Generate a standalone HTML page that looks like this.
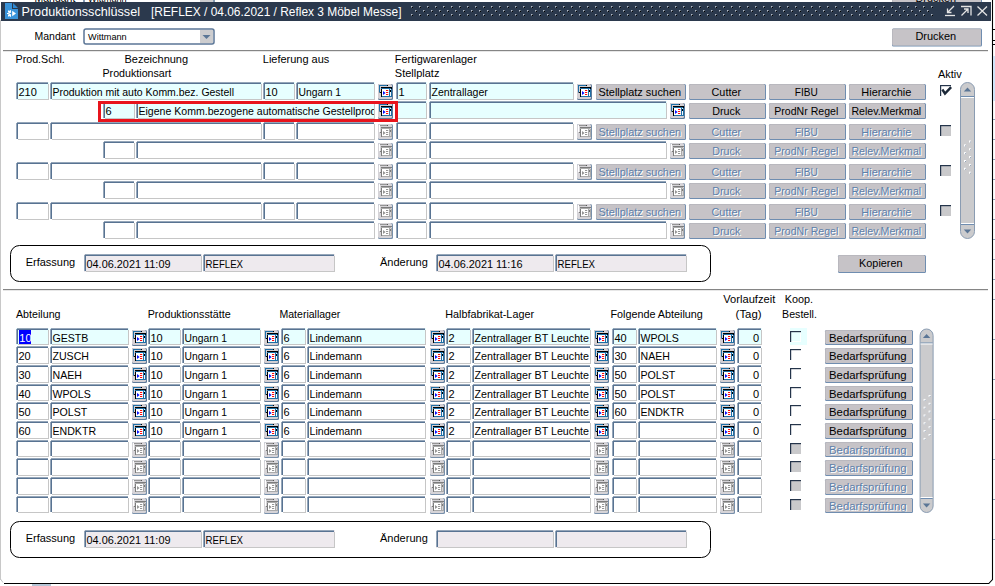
<!DOCTYPE html><html><head><meta charset="utf-8"><style>
html,body{margin:0;padding:0;background:#fff;overflow:hidden}
svg{display:block}
text{font-family:"Liberation Sans",sans-serif}
</style></head><body>
<svg width="995" height="586" viewBox="0 0 995 586">




<path d="M992.5 0 V579.5 L988.8 583.5 H4" fill="none" stroke="#000" stroke-width="1.1"/>
<path d="M0.5 20 V579 L3 582.5" fill="none" stroke="#c4c4c8" stroke-width="1"/>
<rect x="0" y="20" width="1" height="560" fill="#c8c8c8" />
<rect x="993" y="56" width="2" height="45" fill="#cfe4f8" />
<rect x="992" y="29" width="3" height="1" fill="#000" />
<rect x="992" y="40" width="3" height="1" fill="#000" />
<rect x="993" y="44" width="2" height="1" fill="#000" />
<rect x="993" y="119" width="2" height="1" fill="#8aa0b8" />
<rect x="993" y="139" width="2" height="1" fill="#8aa0b8" />
<rect x="993" y="159" width="2" height="1" fill="#8aa0b8" />
<rect x="993" y="179" width="2" height="1" fill="#8aa0b8" />
<rect x="993" y="199" width="2" height="1" fill="#8aa0b8" />
<rect x="993" y="219" width="2" height="1" fill="#8aa0b8" />
<rect x="993" y="239" width="2" height="1" fill="#8aa0b8" />
<rect x="993" y="259" width="2" height="1" fill="#8aa0b8" />
<rect x="993" y="279" width="2" height="1" fill="#8aa0b8" />
<rect x="993" y="299" width="2" height="1" fill="#8aa0b8" />
<rect x="993" y="339" width="2" height="1" fill="#8aa0b8" />
<rect x="993" y="379" width="2" height="1" fill="#8aa0b8" />
<rect x="993" y="419" width="2" height="1" fill="#8aa0b8" />
<rect x="993" y="459" width="2" height="1" fill="#8aa0b8" />
<rect x="993" y="499" width="2" height="1" fill="#8aa0b8" />
<rect x="993" y="539" width="2" height="1" fill="#8aa0b8" />
<rect x="32" y="584.5" width="19" height="1" fill="#6f8db0" />
<text x="34.5" y="2" font-size="11" fill="#000" text-anchor="start" textLength="40.8" lengthAdjust="spacingAndGlyphs" >Mandant</text>
<rect x="84" y="-9" width="130" height="15" rx="2" fill="#fff" stroke="#5b7696" stroke-width="1.5"/>
<rect x="200" y="-8" width="13" height="13" fill="#cdcdcf" />
<text x="88" y="1.5" font-size="9.5" fill="#000" text-anchor="start" textLength="38.7" lengthAdjust="spacingAndGlyphs" >Wittmann</text>
<rect x="892" y="-9.5" width="90" height="18.0" fill="#6f8db0" rx="1.5"/>
<rect x="892" y="-9.5" width="89" height="17.0" fill="#b9b8be" rx="1.5"/>
<rect x="893" y="-8.5" width="88" height="16.0" fill="#c6c3c7" />
<svg x="893" y="-8.5" width="88" height="15.5" overflow="hidden">
<text x="42.8" y="10.6" font-size="11" fill="#000" text-anchor="middle" textLength="40.8" lengthAdjust="spacingAndGlyphs" >Drucken</text>
</svg>
<rect x="1" y="2" width="990" height="19" fill="#2b394d" />
<path fill="#b4bcc8" d="M411 6h1v1h-1zM419 6h1v1h-1zM427 6h1v1h-1zM435 6h1v1h-1zM443 6h1v1h-1zM451 6h1v1h-1zM459 6h1v1h-1zM467 6h1v1h-1zM475 6h1v1h-1zM483 6h1v1h-1zM491 6h1v1h-1zM499 6h1v1h-1zM507 6h1v1h-1zM515 6h1v1h-1zM523 6h1v1h-1zM531 6h1v1h-1zM539 6h1v1h-1zM547 6h1v1h-1zM555 6h1v1h-1zM563 6h1v1h-1zM571 6h1v1h-1zM579 6h1v1h-1zM587 6h1v1h-1zM595 6h1v1h-1zM603 6h1v1h-1zM611 6h1v1h-1zM619 6h1v1h-1zM627 6h1v1h-1zM635 6h1v1h-1zM643 6h1v1h-1zM651 6h1v1h-1zM659 6h1v1h-1zM667 6h1v1h-1zM675 6h1v1h-1zM683 6h1v1h-1zM691 6h1v1h-1zM699 6h1v1h-1zM707 6h1v1h-1zM715 6h1v1h-1zM723 6h1v1h-1zM731 6h1v1h-1zM739 6h1v1h-1zM747 6h1v1h-1zM755 6h1v1h-1zM763 6h1v1h-1zM771 6h1v1h-1zM779 6h1v1h-1zM787 6h1v1h-1zM795 6h1v1h-1zM803 6h1v1h-1zM811 6h1v1h-1zM819 6h1v1h-1zM827 6h1v1h-1zM835 6h1v1h-1zM843 6h1v1h-1zM851 6h1v1h-1zM859 6h1v1h-1zM867 6h1v1h-1zM875 6h1v1h-1zM883 6h1v1h-1zM891 6h1v1h-1zM899 6h1v1h-1zM907 6h1v1h-1zM915 6h1v1h-1zM923 6h1v1h-1zM931 6h1v1h-1zM415 10h1v1h-1zM423 10h1v1h-1zM431 10h1v1h-1zM439 10h1v1h-1zM447 10h1v1h-1zM455 10h1v1h-1zM463 10h1v1h-1zM471 10h1v1h-1zM479 10h1v1h-1zM487 10h1v1h-1zM495 10h1v1h-1zM503 10h1v1h-1zM511 10h1v1h-1zM519 10h1v1h-1zM527 10h1v1h-1zM535 10h1v1h-1zM543 10h1v1h-1zM551 10h1v1h-1zM559 10h1v1h-1zM567 10h1v1h-1zM575 10h1v1h-1zM583 10h1v1h-1zM591 10h1v1h-1zM599 10h1v1h-1zM607 10h1v1h-1zM615 10h1v1h-1zM623 10h1v1h-1zM631 10h1v1h-1zM639 10h1v1h-1zM647 10h1v1h-1zM655 10h1v1h-1zM663 10h1v1h-1zM671 10h1v1h-1zM679 10h1v1h-1zM687 10h1v1h-1zM695 10h1v1h-1zM703 10h1v1h-1zM711 10h1v1h-1zM719 10h1v1h-1zM727 10h1v1h-1zM735 10h1v1h-1zM743 10h1v1h-1zM751 10h1v1h-1zM759 10h1v1h-1zM767 10h1v1h-1zM775 10h1v1h-1zM783 10h1v1h-1zM791 10h1v1h-1zM799 10h1v1h-1zM807 10h1v1h-1zM815 10h1v1h-1zM823 10h1v1h-1zM831 10h1v1h-1zM839 10h1v1h-1zM847 10h1v1h-1zM855 10h1v1h-1zM863 10h1v1h-1zM871 10h1v1h-1zM879 10h1v1h-1zM887 10h1v1h-1zM895 10h1v1h-1zM903 10h1v1h-1zM911 10h1v1h-1zM919 10h1v1h-1zM927 10h1v1h-1zM411 14h1v1h-1zM419 14h1v1h-1zM427 14h1v1h-1zM435 14h1v1h-1zM443 14h1v1h-1zM451 14h1v1h-1zM459 14h1v1h-1zM467 14h1v1h-1zM475 14h1v1h-1zM483 14h1v1h-1zM491 14h1v1h-1zM499 14h1v1h-1zM507 14h1v1h-1zM515 14h1v1h-1zM523 14h1v1h-1zM531 14h1v1h-1zM539 14h1v1h-1zM547 14h1v1h-1zM555 14h1v1h-1zM563 14h1v1h-1zM571 14h1v1h-1zM579 14h1v1h-1zM587 14h1v1h-1zM595 14h1v1h-1zM603 14h1v1h-1zM611 14h1v1h-1zM619 14h1v1h-1zM627 14h1v1h-1zM635 14h1v1h-1zM643 14h1v1h-1zM651 14h1v1h-1zM659 14h1v1h-1zM667 14h1v1h-1zM675 14h1v1h-1zM683 14h1v1h-1zM691 14h1v1h-1zM699 14h1v1h-1zM707 14h1v1h-1zM715 14h1v1h-1zM723 14h1v1h-1zM731 14h1v1h-1zM739 14h1v1h-1zM747 14h1v1h-1zM755 14h1v1h-1zM763 14h1v1h-1zM771 14h1v1h-1zM779 14h1v1h-1zM787 14h1v1h-1zM795 14h1v1h-1zM803 14h1v1h-1zM811 14h1v1h-1zM819 14h1v1h-1zM827 14h1v1h-1zM835 14h1v1h-1zM843 14h1v1h-1zM851 14h1v1h-1zM859 14h1v1h-1zM867 14h1v1h-1zM875 14h1v1h-1zM883 14h1v1h-1zM891 14h1v1h-1zM899 14h1v1h-1zM907 14h1v1h-1zM915 14h1v1h-1zM923 14h1v1h-1zM931 14h1v1h-1z"/>
<path fill="#6a7480" d="M412 6h1v1h-1zM411 7h1v1h-1zM420 6h1v1h-1zM419 7h1v1h-1zM428 6h1v1h-1zM427 7h1v1h-1zM436 6h1v1h-1zM435 7h1v1h-1zM444 6h1v1h-1zM443 7h1v1h-1zM452 6h1v1h-1zM451 7h1v1h-1zM460 6h1v1h-1zM459 7h1v1h-1zM468 6h1v1h-1zM467 7h1v1h-1zM476 6h1v1h-1zM475 7h1v1h-1zM484 6h1v1h-1zM483 7h1v1h-1zM492 6h1v1h-1zM491 7h1v1h-1zM500 6h1v1h-1zM499 7h1v1h-1zM508 6h1v1h-1zM507 7h1v1h-1zM516 6h1v1h-1zM515 7h1v1h-1zM524 6h1v1h-1zM523 7h1v1h-1zM532 6h1v1h-1zM531 7h1v1h-1zM540 6h1v1h-1zM539 7h1v1h-1zM548 6h1v1h-1zM547 7h1v1h-1zM556 6h1v1h-1zM555 7h1v1h-1zM564 6h1v1h-1zM563 7h1v1h-1zM572 6h1v1h-1zM571 7h1v1h-1zM580 6h1v1h-1zM579 7h1v1h-1zM588 6h1v1h-1zM587 7h1v1h-1zM596 6h1v1h-1zM595 7h1v1h-1zM604 6h1v1h-1zM603 7h1v1h-1zM612 6h1v1h-1zM611 7h1v1h-1zM620 6h1v1h-1zM619 7h1v1h-1zM628 6h1v1h-1zM627 7h1v1h-1zM636 6h1v1h-1zM635 7h1v1h-1zM644 6h1v1h-1zM643 7h1v1h-1zM652 6h1v1h-1zM651 7h1v1h-1zM660 6h1v1h-1zM659 7h1v1h-1zM668 6h1v1h-1zM667 7h1v1h-1zM676 6h1v1h-1zM675 7h1v1h-1zM684 6h1v1h-1zM683 7h1v1h-1zM692 6h1v1h-1zM691 7h1v1h-1zM700 6h1v1h-1zM699 7h1v1h-1zM708 6h1v1h-1zM707 7h1v1h-1zM716 6h1v1h-1zM715 7h1v1h-1zM724 6h1v1h-1zM723 7h1v1h-1zM732 6h1v1h-1zM731 7h1v1h-1zM740 6h1v1h-1zM739 7h1v1h-1zM748 6h1v1h-1zM747 7h1v1h-1zM756 6h1v1h-1zM755 7h1v1h-1zM764 6h1v1h-1zM763 7h1v1h-1zM772 6h1v1h-1zM771 7h1v1h-1zM780 6h1v1h-1zM779 7h1v1h-1zM788 6h1v1h-1zM787 7h1v1h-1zM796 6h1v1h-1zM795 7h1v1h-1zM804 6h1v1h-1zM803 7h1v1h-1zM812 6h1v1h-1zM811 7h1v1h-1zM820 6h1v1h-1zM819 7h1v1h-1zM828 6h1v1h-1zM827 7h1v1h-1zM836 6h1v1h-1zM835 7h1v1h-1zM844 6h1v1h-1zM843 7h1v1h-1zM852 6h1v1h-1zM851 7h1v1h-1zM860 6h1v1h-1zM859 7h1v1h-1zM868 6h1v1h-1zM867 7h1v1h-1zM876 6h1v1h-1zM875 7h1v1h-1zM884 6h1v1h-1zM883 7h1v1h-1zM892 6h1v1h-1zM891 7h1v1h-1zM900 6h1v1h-1zM899 7h1v1h-1zM908 6h1v1h-1zM907 7h1v1h-1zM916 6h1v1h-1zM915 7h1v1h-1zM924 6h1v1h-1zM923 7h1v1h-1zM932 6h1v1h-1zM931 7h1v1h-1zM416 10h1v1h-1zM415 11h1v1h-1zM424 10h1v1h-1zM423 11h1v1h-1zM432 10h1v1h-1zM431 11h1v1h-1zM440 10h1v1h-1zM439 11h1v1h-1zM448 10h1v1h-1zM447 11h1v1h-1zM456 10h1v1h-1zM455 11h1v1h-1zM464 10h1v1h-1zM463 11h1v1h-1zM472 10h1v1h-1zM471 11h1v1h-1zM480 10h1v1h-1zM479 11h1v1h-1zM488 10h1v1h-1zM487 11h1v1h-1zM496 10h1v1h-1zM495 11h1v1h-1zM504 10h1v1h-1zM503 11h1v1h-1zM512 10h1v1h-1zM511 11h1v1h-1zM520 10h1v1h-1zM519 11h1v1h-1zM528 10h1v1h-1zM527 11h1v1h-1zM536 10h1v1h-1zM535 11h1v1h-1zM544 10h1v1h-1zM543 11h1v1h-1zM552 10h1v1h-1zM551 11h1v1h-1zM560 10h1v1h-1zM559 11h1v1h-1zM568 10h1v1h-1zM567 11h1v1h-1zM576 10h1v1h-1zM575 11h1v1h-1zM584 10h1v1h-1zM583 11h1v1h-1zM592 10h1v1h-1zM591 11h1v1h-1zM600 10h1v1h-1zM599 11h1v1h-1zM608 10h1v1h-1zM607 11h1v1h-1zM616 10h1v1h-1zM615 11h1v1h-1zM624 10h1v1h-1zM623 11h1v1h-1zM632 10h1v1h-1zM631 11h1v1h-1zM640 10h1v1h-1zM639 11h1v1h-1zM648 10h1v1h-1zM647 11h1v1h-1zM656 10h1v1h-1zM655 11h1v1h-1zM664 10h1v1h-1zM663 11h1v1h-1zM672 10h1v1h-1zM671 11h1v1h-1zM680 10h1v1h-1zM679 11h1v1h-1zM688 10h1v1h-1zM687 11h1v1h-1zM696 10h1v1h-1zM695 11h1v1h-1zM704 10h1v1h-1zM703 11h1v1h-1zM712 10h1v1h-1zM711 11h1v1h-1zM720 10h1v1h-1zM719 11h1v1h-1zM728 10h1v1h-1zM727 11h1v1h-1zM736 10h1v1h-1zM735 11h1v1h-1zM744 10h1v1h-1zM743 11h1v1h-1zM752 10h1v1h-1zM751 11h1v1h-1zM760 10h1v1h-1zM759 11h1v1h-1zM768 10h1v1h-1zM767 11h1v1h-1zM776 10h1v1h-1zM775 11h1v1h-1zM784 10h1v1h-1zM783 11h1v1h-1zM792 10h1v1h-1zM791 11h1v1h-1zM800 10h1v1h-1zM799 11h1v1h-1zM808 10h1v1h-1zM807 11h1v1h-1zM816 10h1v1h-1zM815 11h1v1h-1zM824 10h1v1h-1zM823 11h1v1h-1zM832 10h1v1h-1zM831 11h1v1h-1zM840 10h1v1h-1zM839 11h1v1h-1zM848 10h1v1h-1zM847 11h1v1h-1zM856 10h1v1h-1zM855 11h1v1h-1zM864 10h1v1h-1zM863 11h1v1h-1zM872 10h1v1h-1zM871 11h1v1h-1zM880 10h1v1h-1zM879 11h1v1h-1zM888 10h1v1h-1zM887 11h1v1h-1zM896 10h1v1h-1zM895 11h1v1h-1zM904 10h1v1h-1zM903 11h1v1h-1zM912 10h1v1h-1zM911 11h1v1h-1zM920 10h1v1h-1zM919 11h1v1h-1zM928 10h1v1h-1zM927 11h1v1h-1zM412 14h1v1h-1zM411 15h1v1h-1zM420 14h1v1h-1zM419 15h1v1h-1zM428 14h1v1h-1zM427 15h1v1h-1zM436 14h1v1h-1zM435 15h1v1h-1zM444 14h1v1h-1zM443 15h1v1h-1zM452 14h1v1h-1zM451 15h1v1h-1zM460 14h1v1h-1zM459 15h1v1h-1zM468 14h1v1h-1zM467 15h1v1h-1zM476 14h1v1h-1zM475 15h1v1h-1zM484 14h1v1h-1zM483 15h1v1h-1zM492 14h1v1h-1zM491 15h1v1h-1zM500 14h1v1h-1zM499 15h1v1h-1zM508 14h1v1h-1zM507 15h1v1h-1zM516 14h1v1h-1zM515 15h1v1h-1zM524 14h1v1h-1zM523 15h1v1h-1zM532 14h1v1h-1zM531 15h1v1h-1zM540 14h1v1h-1zM539 15h1v1h-1zM548 14h1v1h-1zM547 15h1v1h-1zM556 14h1v1h-1zM555 15h1v1h-1zM564 14h1v1h-1zM563 15h1v1h-1zM572 14h1v1h-1zM571 15h1v1h-1zM580 14h1v1h-1zM579 15h1v1h-1zM588 14h1v1h-1zM587 15h1v1h-1zM596 14h1v1h-1zM595 15h1v1h-1zM604 14h1v1h-1zM603 15h1v1h-1zM612 14h1v1h-1zM611 15h1v1h-1zM620 14h1v1h-1zM619 15h1v1h-1zM628 14h1v1h-1zM627 15h1v1h-1zM636 14h1v1h-1zM635 15h1v1h-1zM644 14h1v1h-1zM643 15h1v1h-1zM652 14h1v1h-1zM651 15h1v1h-1zM660 14h1v1h-1zM659 15h1v1h-1zM668 14h1v1h-1zM667 15h1v1h-1zM676 14h1v1h-1zM675 15h1v1h-1zM684 14h1v1h-1zM683 15h1v1h-1zM692 14h1v1h-1zM691 15h1v1h-1zM700 14h1v1h-1zM699 15h1v1h-1zM708 14h1v1h-1zM707 15h1v1h-1zM716 14h1v1h-1zM715 15h1v1h-1zM724 14h1v1h-1zM723 15h1v1h-1zM732 14h1v1h-1zM731 15h1v1h-1zM740 14h1v1h-1zM739 15h1v1h-1zM748 14h1v1h-1zM747 15h1v1h-1zM756 14h1v1h-1zM755 15h1v1h-1zM764 14h1v1h-1zM763 15h1v1h-1zM772 14h1v1h-1zM771 15h1v1h-1zM780 14h1v1h-1zM779 15h1v1h-1zM788 14h1v1h-1zM787 15h1v1h-1zM796 14h1v1h-1zM795 15h1v1h-1zM804 14h1v1h-1zM803 15h1v1h-1zM812 14h1v1h-1zM811 15h1v1h-1zM820 14h1v1h-1zM819 15h1v1h-1zM828 14h1v1h-1zM827 15h1v1h-1zM836 14h1v1h-1zM835 15h1v1h-1zM844 14h1v1h-1zM843 15h1v1h-1zM852 14h1v1h-1zM851 15h1v1h-1zM860 14h1v1h-1zM859 15h1v1h-1zM868 14h1v1h-1zM867 15h1v1h-1zM876 14h1v1h-1zM875 15h1v1h-1zM884 14h1v1h-1zM883 15h1v1h-1zM892 14h1v1h-1zM891 15h1v1h-1zM900 14h1v1h-1zM899 15h1v1h-1zM908 14h1v1h-1zM907 15h1v1h-1zM916 14h1v1h-1zM915 15h1v1h-1zM924 14h1v1h-1zM923 15h1v1h-1zM932 14h1v1h-1zM931 15h1v1h-1z"/>
<path fill="#000" d="M412 7h1v1h-1zM420 7h1v1h-1zM428 7h1v1h-1zM436 7h1v1h-1zM444 7h1v1h-1zM452 7h1v1h-1zM460 7h1v1h-1zM468 7h1v1h-1zM476 7h1v1h-1zM484 7h1v1h-1zM492 7h1v1h-1zM500 7h1v1h-1zM508 7h1v1h-1zM516 7h1v1h-1zM524 7h1v1h-1zM532 7h1v1h-1zM540 7h1v1h-1zM548 7h1v1h-1zM556 7h1v1h-1zM564 7h1v1h-1zM572 7h1v1h-1zM580 7h1v1h-1zM588 7h1v1h-1zM596 7h1v1h-1zM604 7h1v1h-1zM612 7h1v1h-1zM620 7h1v1h-1zM628 7h1v1h-1zM636 7h1v1h-1zM644 7h1v1h-1zM652 7h1v1h-1zM660 7h1v1h-1zM668 7h1v1h-1zM676 7h1v1h-1zM684 7h1v1h-1zM692 7h1v1h-1zM700 7h1v1h-1zM708 7h1v1h-1zM716 7h1v1h-1zM724 7h1v1h-1zM732 7h1v1h-1zM740 7h1v1h-1zM748 7h1v1h-1zM756 7h1v1h-1zM764 7h1v1h-1zM772 7h1v1h-1zM780 7h1v1h-1zM788 7h1v1h-1zM796 7h1v1h-1zM804 7h1v1h-1zM812 7h1v1h-1zM820 7h1v1h-1zM828 7h1v1h-1zM836 7h1v1h-1zM844 7h1v1h-1zM852 7h1v1h-1zM860 7h1v1h-1zM868 7h1v1h-1zM876 7h1v1h-1zM884 7h1v1h-1zM892 7h1v1h-1zM900 7h1v1h-1zM908 7h1v1h-1zM916 7h1v1h-1zM924 7h1v1h-1zM932 7h1v1h-1zM416 11h1v1h-1zM424 11h1v1h-1zM432 11h1v1h-1zM440 11h1v1h-1zM448 11h1v1h-1zM456 11h1v1h-1zM464 11h1v1h-1zM472 11h1v1h-1zM480 11h1v1h-1zM488 11h1v1h-1zM496 11h1v1h-1zM504 11h1v1h-1zM512 11h1v1h-1zM520 11h1v1h-1zM528 11h1v1h-1zM536 11h1v1h-1zM544 11h1v1h-1zM552 11h1v1h-1zM560 11h1v1h-1zM568 11h1v1h-1zM576 11h1v1h-1zM584 11h1v1h-1zM592 11h1v1h-1zM600 11h1v1h-1zM608 11h1v1h-1zM616 11h1v1h-1zM624 11h1v1h-1zM632 11h1v1h-1zM640 11h1v1h-1zM648 11h1v1h-1zM656 11h1v1h-1zM664 11h1v1h-1zM672 11h1v1h-1zM680 11h1v1h-1zM688 11h1v1h-1zM696 11h1v1h-1zM704 11h1v1h-1zM712 11h1v1h-1zM720 11h1v1h-1zM728 11h1v1h-1zM736 11h1v1h-1zM744 11h1v1h-1zM752 11h1v1h-1zM760 11h1v1h-1zM768 11h1v1h-1zM776 11h1v1h-1zM784 11h1v1h-1zM792 11h1v1h-1zM800 11h1v1h-1zM808 11h1v1h-1zM816 11h1v1h-1zM824 11h1v1h-1zM832 11h1v1h-1zM840 11h1v1h-1zM848 11h1v1h-1zM856 11h1v1h-1zM864 11h1v1h-1zM872 11h1v1h-1zM880 11h1v1h-1zM888 11h1v1h-1zM896 11h1v1h-1zM904 11h1v1h-1zM912 11h1v1h-1zM920 11h1v1h-1zM928 11h1v1h-1zM412 15h1v1h-1zM420 15h1v1h-1zM428 15h1v1h-1zM436 15h1v1h-1zM444 15h1v1h-1zM452 15h1v1h-1zM460 15h1v1h-1zM468 15h1v1h-1zM476 15h1v1h-1zM484 15h1v1h-1zM492 15h1v1h-1zM500 15h1v1h-1zM508 15h1v1h-1zM516 15h1v1h-1zM524 15h1v1h-1zM532 15h1v1h-1zM540 15h1v1h-1zM548 15h1v1h-1zM556 15h1v1h-1zM564 15h1v1h-1zM572 15h1v1h-1zM580 15h1v1h-1zM588 15h1v1h-1zM596 15h1v1h-1zM604 15h1v1h-1zM612 15h1v1h-1zM620 15h1v1h-1zM628 15h1v1h-1zM636 15h1v1h-1zM644 15h1v1h-1zM652 15h1v1h-1zM660 15h1v1h-1zM668 15h1v1h-1zM676 15h1v1h-1zM684 15h1v1h-1zM692 15h1v1h-1zM700 15h1v1h-1zM708 15h1v1h-1zM716 15h1v1h-1zM724 15h1v1h-1zM732 15h1v1h-1zM740 15h1v1h-1zM748 15h1v1h-1zM756 15h1v1h-1zM764 15h1v1h-1zM772 15h1v1h-1zM780 15h1v1h-1zM788 15h1v1h-1zM796 15h1v1h-1zM804 15h1v1h-1zM812 15h1v1h-1zM820 15h1v1h-1zM828 15h1v1h-1zM836 15h1v1h-1zM844 15h1v1h-1zM852 15h1v1h-1zM860 15h1v1h-1zM868 15h1v1h-1zM876 15h1v1h-1zM884 15h1v1h-1zM892 15h1v1h-1zM900 15h1v1h-1zM908 15h1v1h-1zM916 15h1v1h-1zM924 15h1v1h-1zM932 15h1v1h-1z"/>
<path d="M5 3 L12 3 L12 9 L18 9 L18 19 L5 19 Z" fill="#3a94da"/><path d="M13 3 L18 8 L13 8 Z" fill="#2f8ad2"/>
<g fill="#fff"><path d="M11 10 A3.6 3.6 0 0 0 11 17 Z"/><rect x="7" y="13" width="1.5" height="1" /><rect x="8" y="10.5" width="1" height="1.5"/><rect x="8" y="15" width="1" height="1.5"/><path d="M12.2 10.8 L16 13.5 L12.2 16.2 Z"/></g><circle cx="10.3" cy="13.5" r="0.8" fill="#3a94da"/>
<text x="21.5" y="16" font-size="12.5" fill="#ffffff" text-anchor="start" textLength="118.5" lengthAdjust="spacingAndGlyphs" >Produktionsschlüssel</text>
<text x="151" y="16" font-size="12.2" fill="#ffffff" text-anchor="start" textLength="250.5" lengthAdjust="spacingAndGlyphs" >[REFLEX / 04.06.2021 / Reflex 3 Möbel Messe]</text>
<g stroke="#e4e4e4" stroke-width="1.3" fill="none"><path d="M945 15.5 H955"/><path d="M954 6 L947.5 12.5 M947.5 8.5 V12.5 H951.5"/><path d="M961 6.5 H971 V15.5"/><path d="M961.5 15.5 L968 9 M964 9 H968 V13"/><path d="M977.5 6.5 L987 15.5 M987 6.5 L977.5 15.5"/></g>
<text x="34.5" y="40" font-size="11" fill="#000" text-anchor="start" textLength="40.8" lengthAdjust="spacingAndGlyphs" >Mandant</text>
<rect x="84" y="29" width="130" height="15" rx="2" fill="#fff" stroke="#5b7696" stroke-width="1.5"/>
<rect x="200" y="30" width="13" height="13" fill="#cdcdcf" />
<path d="M202.5 35 L210.5 35 L206.5 39 Z" fill="#5b7696"/>
<text x="88" y="39.5" font-size="9.5" fill="#000" text-anchor="start" textLength="38.7" lengthAdjust="spacingAndGlyphs" >Wittmann</text>
<rect x="892" y="28.5" width="90" height="18.0" fill="#6f8db0" rx="1.5"/>
<rect x="892" y="28.5" width="89" height="17.0" fill="#b9b8be" rx="1.5"/>
<rect x="893" y="29.5" width="88" height="16.0" fill="#c6c3c7" />
<svg x="893" y="29.5" width="88" height="15.5" overflow="hidden">
<text x="42.8" y="10.6" font-size="11" fill="#000" text-anchor="middle" textLength="40.8" lengthAdjust="spacingAndGlyphs" >Drucken</text>
</svg>
<rect x="3" y="50" width="985" height="1.2" fill="#858585" />
<rect x="3" y="289" width="985" height="1.2" fill="#858585" />
<text x="15.5" y="63" font-size="11" fill="#000" text-anchor="start" textLength="49.3" lengthAdjust="spacingAndGlyphs" >Prod.Schl.</text>
<text x="124.5" y="63" font-size="11" fill="#000" text-anchor="start" >Bezeichnung</text>
<text x="102.5" y="77" font-size="11" fill="#000" text-anchor="start" textLength="68.8" lengthAdjust="spacingAndGlyphs" >Produktionsart</text>
<text x="262.8" y="63" font-size="11" fill="#000" text-anchor="start" textLength="66.5" lengthAdjust="spacingAndGlyphs" >Lieferung aus</text>
<text x="394.8" y="63" font-size="11" fill="#000" text-anchor="start" textLength="82" lengthAdjust="spacingAndGlyphs" >Fertigwarenlager</text>
<text x="394.8" y="77" font-size="11" fill="#000" text-anchor="start" >Stellplatz</text>
<text x="938" y="78" font-size="11" fill="#000" text-anchor="start" textLength="23.8" lengthAdjust="spacingAndGlyphs" >Aktiv</text>
<rect x="16" y="82" width="33" height="18" fill="#e7ffff" />
<rect x="18" y="99" width="31" height="1" fill="#c6c6c6" />
<rect x="48" y="84" width="1" height="16" fill="#c6c6c6" />
<rect x="17" y="82" width="31" height="1" fill="#95a6b9" />
<rect x="17" y="83" width="31" height="1" fill="#587392" />
<rect x="16" y="83" width="1" height="16" fill="#95a6b9" />
<rect x="17" y="83" width="1" height="16" fill="#587392" />
<svg x="18" y="82" width="30" height="18" overflow="hidden">
<text x="0.5" y="14" font-size="11" fill="#000" text-anchor="start" >210</text>
</svg>
<rect x="50" y="82" width="212" height="18" fill="#e7ffff" />
<rect x="52" y="99" width="210" height="1" fill="#c6c6c6" />
<rect x="261" y="84" width="1" height="16" fill="#c6c6c6" />
<rect x="51" y="82" width="210" height="1" fill="#95a6b9" />
<rect x="51" y="83" width="210" height="1" fill="#587392" />
<rect x="50" y="83" width="1" height="16" fill="#95a6b9" />
<rect x="51" y="83" width="1" height="16" fill="#587392" />
<svg x="52" y="82" width="209" height="18" overflow="hidden">
<text x="0.5" y="14" font-size="10.6" fill="#000" text-anchor="start" textLength="181.5" lengthAdjust="spacingAndGlyphs" >Produktion mit auto Komm.bez. Gestell</text>
</svg>
<rect x="263" y="82" width="32" height="18" fill="#e7ffff" />
<rect x="265" y="99" width="30" height="1" fill="#c6c6c6" />
<rect x="294" y="84" width="1" height="16" fill="#c6c6c6" />
<rect x="264" y="82" width="30" height="1" fill="#95a6b9" />
<rect x="264" y="83" width="30" height="1" fill="#587392" />
<rect x="263" y="83" width="1" height="16" fill="#95a6b9" />
<rect x="264" y="83" width="1" height="16" fill="#587392" />
<svg x="265" y="82" width="29" height="18" overflow="hidden">
<text x="0.5" y="14" font-size="11" fill="#000" text-anchor="start" >10</text>
</svg>
<rect x="296" y="82" width="79" height="18" fill="#e7ffff" />
<rect x="298" y="99" width="77" height="1" fill="#c6c6c6" />
<rect x="374" y="84" width="1" height="16" fill="#c6c6c6" />
<rect x="297" y="82" width="77" height="1" fill="#95a6b9" />
<rect x="297" y="83" width="77" height="1" fill="#587392" />
<rect x="296" y="83" width="1" height="16" fill="#95a6b9" />
<rect x="297" y="83" width="1" height="16" fill="#587392" />
<svg x="298" y="82" width="76" height="18" overflow="hidden">
<text x="0.5" y="14" font-size="10.6" fill="#000" text-anchor="start" textLength="42.5" lengthAdjust="spacingAndGlyphs" >Ungarn 1</text>
</svg>
<g transform="translate(378,84)">
 <rect x="0" y="0" width="15" height="16" rx="1.5" fill="#5f7a99"/>
 <rect x="0" y="0" width="14" height="15" rx="1.5" fill="#d3cfd3"/>
 <rect x="1" y="1" width="8" height="1" fill="#1e6fa6"/>
 <rect x="9" y="1" width="1" height="1" fill="#000"/>
 <rect x="1" y="1" width="1" height="7.5" fill="#1e6fa6"/>
 <rect x="1.8" y="8" width="1.5" height="1" fill="#000"/>
 <rect x="3" y="3" width="11" height="1" fill="#000"/>
 <rect x="13" y="3" width="1" height="2" fill="#000"/>
 <rect x="3" y="4" width="10" height="1" fill="#1e6fa6"/>
 <rect x="3" y="5" width="1" height="8" fill="#000"/>
 <rect x="4" y="5" width="7" height="7" fill="#fff"/>
 <rect x="11" y="5" width="1" height="8" fill="#1e6fa6"/>
 <rect x="12" y="5" width="1" height="7" fill="#f4f8fc"/>
 <rect x="12" y="6" width="1" height="2" fill="#000"/>
 <rect x="13" y="5" width="1" height="8" fill="#1e6fa6"/>
 <rect x="4" y="12" width="10" height="1" fill="#1e6fa6"/>
 <path d="M5 7 L7.6 9 L5 11 Z" fill="#0a14ff"/>
 <rect x="8" y="6" width="2.2" height="1" fill="#ff0a0a"/>
 <rect x="8" y="8" width="2.2" height="1" fill="#ff0a0a"/>
 <rect x="8" y="10" width="2.2" height="1" fill="#ff0a0a"/>
</g>
<rect x="396" y="82" width="31" height="18" fill="#e7ffff" />
<rect x="398" y="99" width="29" height="1" fill="#c6c6c6" />
<rect x="426" y="84" width="1" height="16" fill="#c6c6c6" />
<rect x="397" y="82" width="29" height="1" fill="#95a6b9" />
<rect x="397" y="83" width="29" height="1" fill="#587392" />
<rect x="396" y="83" width="1" height="16" fill="#95a6b9" />
<rect x="397" y="83" width="1" height="16" fill="#587392" />
<svg x="398" y="82" width="28" height="18" overflow="hidden">
<text x="0.5" y="14" font-size="11" fill="#000" text-anchor="start" >1</text>
</svg>
<rect x="429" y="82" width="145" height="18" fill="#e7ffff" />
<rect x="431" y="99" width="143" height="1" fill="#c6c6c6" />
<rect x="573" y="84" width="1" height="16" fill="#c6c6c6" />
<rect x="430" y="82" width="143" height="1" fill="#95a6b9" />
<rect x="430" y="83" width="143" height="1" fill="#587392" />
<rect x="429" y="83" width="1" height="16" fill="#95a6b9" />
<rect x="430" y="83" width="1" height="16" fill="#587392" />
<svg x="431" y="82" width="142" height="18" overflow="hidden">
<text x="0.5" y="14" font-size="10.6" fill="#000" text-anchor="start" textLength="56.3" lengthAdjust="spacingAndGlyphs" >Zentrallager</text>
</svg>
<g transform="translate(577,84)">
 <rect x="0" y="0" width="15" height="16" rx="1.5" fill="#5f7a99"/>
 <rect x="0" y="0" width="14" height="15" rx="1.5" fill="#d3cfd3"/>
 <rect x="1" y="1" width="8" height="1" fill="#1e6fa6"/>
 <rect x="9" y="1" width="1" height="1" fill="#000"/>
 <rect x="1" y="1" width="1" height="7.5" fill="#1e6fa6"/>
 <rect x="1.8" y="8" width="1.5" height="1" fill="#000"/>
 <rect x="3" y="3" width="11" height="1" fill="#000"/>
 <rect x="13" y="3" width="1" height="2" fill="#000"/>
 <rect x="3" y="4" width="10" height="1" fill="#1e6fa6"/>
 <rect x="3" y="5" width="1" height="8" fill="#000"/>
 <rect x="4" y="5" width="7" height="7" fill="#fff"/>
 <rect x="11" y="5" width="1" height="8" fill="#1e6fa6"/>
 <rect x="12" y="5" width="1" height="7" fill="#f4f8fc"/>
 <rect x="12" y="6" width="1" height="2" fill="#000"/>
 <rect x="13" y="5" width="1" height="8" fill="#1e6fa6"/>
 <rect x="4" y="12" width="10" height="1" fill="#1e6fa6"/>
 <path d="M5 7 L7.6 9 L5 11 Z" fill="#0a14ff"/>
 <rect x="8" y="6" width="2.2" height="1" fill="#ff0a0a"/>
 <rect x="8" y="8" width="2.2" height="1" fill="#ff0a0a"/>
 <rect x="8" y="10" width="2.2" height="1" fill="#ff0a0a"/>
</g>
<rect x="596" y="84" width="90" height="16" fill="#6f8db0" rx="1.5"/>
<rect x="596" y="84" width="89" height="15" fill="#b9b8be" rx="1.5"/>
<rect x="597" y="85" width="88" height="14" fill="#c6c3c7" />
<svg x="597" y="85" width="88" height="13.5" overflow="hidden">
<text x="42.8" y="10.6" font-size="11" fill="#000" text-anchor="middle" textLength="82.5" lengthAdjust="spacingAndGlyphs" >Stellplatz suchen</text>
</svg>
<rect x="689" y="84" width="77" height="16" fill="#6f8db0" rx="1.5"/>
<rect x="689" y="84" width="76" height="15" fill="#b9b8be" rx="1.5"/>
<rect x="690" y="85" width="75" height="14" fill="#c6c3c7" />
<svg x="690" y="85" width="75" height="13.5" overflow="hidden">
<text x="36.3" y="10.6" font-size="11" fill="#000" text-anchor="middle" textLength="29.5" lengthAdjust="spacingAndGlyphs" >Cutter</text>
</svg>
<rect x="769" y="84" width="77" height="16" fill="#6f8db0" rx="1.5"/>
<rect x="769" y="84" width="76" height="15" fill="#b9b8be" rx="1.5"/>
<rect x="770" y="85" width="75" height="14" fill="#c6c3c7" />
<svg x="770" y="85" width="75" height="13.5" overflow="hidden">
<text x="36.3" y="10.6" font-size="11" fill="#000" text-anchor="middle" textLength="23" lengthAdjust="spacingAndGlyphs" >FIBU</text>
</svg>
<rect x="849" y="84" width="77" height="16" fill="#6f8db0" rx="1.5"/>
<rect x="849" y="84" width="76" height="15" fill="#b9b8be" rx="1.5"/>
<rect x="850" y="85" width="75" height="14" fill="#c6c3c7" />
<svg x="850" y="85" width="75" height="13.5" overflow="hidden">
<text x="36.3" y="10.6" font-size="11" fill="#000" text-anchor="middle" textLength="50" lengthAdjust="spacingAndGlyphs" >Hierarchie</text>
</svg>
<rect x="940" y="85" width="11" height="1.2" fill="#24344a" />
<rect x="940" y="85" width="1.2" height="11" fill="#24344a" />
<path d="M943 90.5 L945 93.5 L950.3 88" stroke="#1c2838" stroke-width="2.4" fill="none" stroke-linecap="square"/>
<rect x="103" y="101" width="32" height="18" fill="#e7ffff" />
<rect x="105" y="118" width="30" height="1" fill="#c6c6c6" />
<rect x="134" y="103" width="1" height="16" fill="#c6c6c6" />
<rect x="104" y="101" width="30" height="1" fill="#95a6b9" />
<rect x="104" y="102" width="30" height="1" fill="#587392" />
<rect x="103" y="102" width="1" height="16" fill="#95a6b9" />
<rect x="104" y="102" width="1" height="16" fill="#587392" />
<svg x="105" y="101" width="29" height="18" overflow="hidden">
<text x="0.5" y="14" font-size="11" fill="#000" text-anchor="start" >6</text>
</svg>
<rect x="136" y="101" width="239" height="18" fill="#e7ffff" />
<rect x="138" y="118" width="237" height="1" fill="#c6c6c6" />
<rect x="374" y="103" width="1" height="16" fill="#c6c6c6" />
<rect x="137" y="101" width="237" height="1" fill="#95a6b9" />
<rect x="137" y="102" width="237" height="1" fill="#587392" />
<rect x="136" y="102" width="1" height="16" fill="#95a6b9" />
<rect x="137" y="102" width="1" height="16" fill="#587392" />
<svg x="138" y="101" width="236" height="18" overflow="hidden">
<text x="0.5" y="14" font-size="10.6" fill="#000" text-anchor="start" textLength="266" lengthAdjust="spacingAndGlyphs" >Eigene Komm.bezogene automatische Gestellproduktion</text>
</svg>
<g transform="translate(378,103)">
 <rect x="0" y="0" width="15" height="16" rx="1.5" fill="#5f7a99"/>
 <rect x="0" y="0" width="14" height="15" rx="1.5" fill="#d3cfd3"/>
 <rect x="1" y="1" width="8" height="1" fill="#1e6fa6"/>
 <rect x="9" y="1" width="1" height="1" fill="#000"/>
 <rect x="1" y="1" width="1" height="7.5" fill="#1e6fa6"/>
 <rect x="1.8" y="8" width="1.5" height="1" fill="#000"/>
 <rect x="3" y="3" width="11" height="1" fill="#000"/>
 <rect x="13" y="3" width="1" height="2" fill="#000"/>
 <rect x="3" y="4" width="10" height="1" fill="#1e6fa6"/>
 <rect x="3" y="5" width="1" height="8" fill="#000"/>
 <rect x="4" y="5" width="7" height="7" fill="#fff"/>
 <rect x="11" y="5" width="1" height="8" fill="#1e6fa6"/>
 <rect x="12" y="5" width="1" height="7" fill="#f4f8fc"/>
 <rect x="12" y="6" width="1" height="2" fill="#000"/>
 <rect x="13" y="5" width="1" height="8" fill="#1e6fa6"/>
 <rect x="4" y="12" width="10" height="1" fill="#1e6fa6"/>
 <path d="M5 7 L7.6 9 L5 11 Z" fill="#0a14ff"/>
 <rect x="8" y="6" width="2.2" height="1" fill="#ff0a0a"/>
 <rect x="8" y="8" width="2.2" height="1" fill="#ff0a0a"/>
 <rect x="8" y="10" width="2.2" height="1" fill="#ff0a0a"/>
</g>
<rect x="396" y="101" width="31" height="18" fill="#e7ffff" />
<rect x="398" y="118" width="29" height="1" fill="#c6c6c6" />
<rect x="426" y="103" width="1" height="16" fill="#c6c6c6" />
<rect x="397" y="101" width="29" height="1" fill="#95a6b9" />
<rect x="397" y="102" width="29" height="1" fill="#587392" />
<rect x="396" y="102" width="1" height="16" fill="#95a6b9" />
<rect x="397" y="102" width="1" height="16" fill="#587392" />
<rect x="429" y="101" width="238" height="18" fill="#e7ffff" />
<rect x="431" y="118" width="236" height="1" fill="#c6c6c6" />
<rect x="666" y="103" width="1" height="16" fill="#c6c6c6" />
<rect x="430" y="101" width="236" height="1" fill="#95a6b9" />
<rect x="430" y="102" width="236" height="1" fill="#587392" />
<rect x="429" y="102" width="1" height="16" fill="#95a6b9" />
<rect x="430" y="102" width="1" height="16" fill="#587392" />
<g transform="translate(670,103)">
 <rect x="0" y="0" width="15" height="16" rx="1.5" fill="#5f7a99"/>
 <rect x="0" y="0" width="14" height="15" rx="1.5" fill="#d3cfd3"/>
 <rect x="1" y="1" width="8" height="1" fill="#1e6fa6"/>
 <rect x="9" y="1" width="1" height="1" fill="#000"/>
 <rect x="1" y="1" width="1" height="7.5" fill="#1e6fa6"/>
 <rect x="1.8" y="8" width="1.5" height="1" fill="#000"/>
 <rect x="3" y="3" width="11" height="1" fill="#000"/>
 <rect x="13" y="3" width="1" height="2" fill="#000"/>
 <rect x="3" y="4" width="10" height="1" fill="#1e6fa6"/>
 <rect x="3" y="5" width="1" height="8" fill="#000"/>
 <rect x="4" y="5" width="7" height="7" fill="#fff"/>
 <rect x="11" y="5" width="1" height="8" fill="#1e6fa6"/>
 <rect x="12" y="5" width="1" height="7" fill="#f4f8fc"/>
 <rect x="12" y="6" width="1" height="2" fill="#000"/>
 <rect x="13" y="5" width="1" height="8" fill="#1e6fa6"/>
 <rect x="4" y="12" width="10" height="1" fill="#1e6fa6"/>
 <path d="M5 7 L7.6 9 L5 11 Z" fill="#0a14ff"/>
 <rect x="8" y="6" width="2.2" height="1" fill="#ff0a0a"/>
 <rect x="8" y="8" width="2.2" height="1" fill="#ff0a0a"/>
 <rect x="8" y="10" width="2.2" height="1" fill="#ff0a0a"/>
</g>
<rect x="689" y="103" width="77" height="16" fill="#6f8db0" rx="1.5"/>
<rect x="689" y="103" width="76" height="15" fill="#b9b8be" rx="1.5"/>
<rect x="690" y="104" width="75" height="14" fill="#c6c3c7" />
<svg x="690" y="104" width="75" height="13.5" overflow="hidden">
<text x="36.3" y="10.6" font-size="11" fill="#000" text-anchor="middle" textLength="28" lengthAdjust="spacingAndGlyphs" >Druck</text>
</svg>
<rect x="769" y="103" width="77" height="16" fill="#6f8db0" rx="1.5"/>
<rect x="769" y="103" width="76" height="15" fill="#b9b8be" rx="1.5"/>
<rect x="770" y="104" width="75" height="14" fill="#c6c3c7" />
<svg x="770" y="104" width="75" height="13.5" overflow="hidden">
<text x="36.3" y="10.6" font-size="11" fill="#000" text-anchor="middle" textLength="64" lengthAdjust="spacingAndGlyphs" >ProdNr Regel</text>
</svg>
<rect x="849" y="103" width="77" height="16" fill="#6f8db0" rx="1.5"/>
<rect x="849" y="103" width="76" height="15" fill="#b9b8be" rx="1.5"/>
<rect x="850" y="104" width="75" height="14" fill="#c6c3c7" />
<svg x="850" y="104" width="75" height="13.5" overflow="hidden">
<text x="36.3" y="10.6" font-size="11" fill="#000" text-anchor="middle" textLength="69.7" lengthAdjust="spacingAndGlyphs" >Relev.Merkmal</text>
</svg>
<rect x="16" y="122" width="33" height="18" fill="#fff" />
<rect x="18" y="139" width="31" height="1" fill="#c6c6c6" />
<rect x="48" y="124" width="1" height="16" fill="#c6c6c6" />
<rect x="17" y="122" width="31" height="1" fill="#95a6b9" />
<rect x="17" y="123" width="31" height="1" fill="#587392" />
<rect x="16" y="123" width="1" height="16" fill="#95a6b9" />
<rect x="17" y="123" width="1" height="16" fill="#587392" />
<rect x="50" y="122" width="212" height="18" fill="#fff" />
<rect x="52" y="139" width="210" height="1" fill="#c6c6c6" />
<rect x="261" y="124" width="1" height="16" fill="#c6c6c6" />
<rect x="51" y="122" width="210" height="1" fill="#95a6b9" />
<rect x="51" y="123" width="210" height="1" fill="#587392" />
<rect x="50" y="123" width="1" height="16" fill="#95a6b9" />
<rect x="51" y="123" width="1" height="16" fill="#587392" />
<rect x="263" y="122" width="32" height="18" fill="#fff" />
<rect x="265" y="139" width="30" height="1" fill="#c6c6c6" />
<rect x="294" y="124" width="1" height="16" fill="#c6c6c6" />
<rect x="264" y="122" width="30" height="1" fill="#95a6b9" />
<rect x="264" y="123" width="30" height="1" fill="#587392" />
<rect x="263" y="123" width="1" height="16" fill="#95a6b9" />
<rect x="264" y="123" width="1" height="16" fill="#587392" />
<rect x="296" y="122" width="79" height="18" fill="#fff" />
<rect x="298" y="139" width="77" height="1" fill="#c6c6c6" />
<rect x="374" y="124" width="1" height="16" fill="#c6c6c6" />
<rect x="297" y="122" width="77" height="1" fill="#95a6b9" />
<rect x="297" y="123" width="77" height="1" fill="#587392" />
<rect x="296" y="123" width="1" height="16" fill="#95a6b9" />
<rect x="297" y="123" width="1" height="16" fill="#587392" />
<g transform="translate(378,124)">
 <rect x="0" y="0" width="15" height="16" rx="1.5" fill="#7890ab"/>
 <rect x="0" y="0" width="14" height="15" rx="1.5" fill="#d6d4d8"/>
 <rect x="1" y="1" width="8" height="1" fill="#959595"/>
 <rect x="9" y="1" width="1" height="1" fill="#555"/>
 <rect x="1" y="1" width="1" height="7.5" fill="#fff"/>
 <rect x="1.8" y="8" width="1.5" height="1" fill="#777"/>
 <rect x="3" y="3" width="11" height="1" fill="#7c7c7c"/>
 <rect x="3" y="4" width="10" height="1" fill="#aaaaaa"/>
 <rect x="3" y="5" width="1" height="8" fill="#7c7c7c"/>
 <rect x="4" y="5" width="7" height="7" fill="#fff"/>
 <rect x="11" y="5" width="1" height="8" fill="#aaaaaa"/>
 <rect x="12" y="6" width="1" height="2" fill="#7c7c7c"/>
 <rect x="13" y="5" width="1" height="8" fill="#aaaaaa"/>
 <rect x="4" y="12" width="10" height="1" fill="#aaaaaa"/>
 <path d="M5 7 L7.6 9 L5 11 Z" fill="#959595"/>
 <rect x="8" y="6" width="2.2" height="1" fill="#959595"/>
 <rect x="8" y="8" width="2.2" height="1" fill="#959595"/>
 <rect x="8" y="10" width="2.2" height="1" fill="#959595"/>
</g>
<rect x="396" y="122" width="31" height="18" fill="#fff" />
<rect x="398" y="139" width="29" height="1" fill="#c6c6c6" />
<rect x="426" y="124" width="1" height="16" fill="#c6c6c6" />
<rect x="397" y="122" width="29" height="1" fill="#95a6b9" />
<rect x="397" y="123" width="29" height="1" fill="#587392" />
<rect x="396" y="123" width="1" height="16" fill="#95a6b9" />
<rect x="397" y="123" width="1" height="16" fill="#587392" />
<rect x="429" y="122" width="145" height="18" fill="#fff" />
<rect x="431" y="139" width="143" height="1" fill="#c6c6c6" />
<rect x="573" y="124" width="1" height="16" fill="#c6c6c6" />
<rect x="430" y="122" width="143" height="1" fill="#95a6b9" />
<rect x="430" y="123" width="143" height="1" fill="#587392" />
<rect x="429" y="123" width="1" height="16" fill="#95a6b9" />
<rect x="430" y="123" width="1" height="16" fill="#587392" />
<g transform="translate(577,124)">
 <rect x="0" y="0" width="15" height="16" rx="1.5" fill="#7890ab"/>
 <rect x="0" y="0" width="14" height="15" rx="1.5" fill="#d6d4d8"/>
 <rect x="1" y="1" width="8" height="1" fill="#959595"/>
 <rect x="9" y="1" width="1" height="1" fill="#555"/>
 <rect x="1" y="1" width="1" height="7.5" fill="#fff"/>
 <rect x="1.8" y="8" width="1.5" height="1" fill="#777"/>
 <rect x="3" y="3" width="11" height="1" fill="#7c7c7c"/>
 <rect x="3" y="4" width="10" height="1" fill="#aaaaaa"/>
 <rect x="3" y="5" width="1" height="8" fill="#7c7c7c"/>
 <rect x="4" y="5" width="7" height="7" fill="#fff"/>
 <rect x="11" y="5" width="1" height="8" fill="#aaaaaa"/>
 <rect x="12" y="6" width="1" height="2" fill="#7c7c7c"/>
 <rect x="13" y="5" width="1" height="8" fill="#aaaaaa"/>
 <rect x="4" y="12" width="10" height="1" fill="#aaaaaa"/>
 <path d="M5 7 L7.6 9 L5 11 Z" fill="#959595"/>
 <rect x="8" y="6" width="2.2" height="1" fill="#959595"/>
 <rect x="8" y="8" width="2.2" height="1" fill="#959595"/>
 <rect x="8" y="10" width="2.2" height="1" fill="#959595"/>
</g>
<rect x="596" y="124" width="90" height="16" fill="#6f8db0" rx="1.5"/>
<rect x="596" y="124" width="89" height="15" fill="#b9b8be" rx="1.5"/>
<rect x="597" y="125" width="88" height="14" fill="#c6c3c7" />
<svg x="597" y="125" width="88" height="13.5" overflow="hidden">
<text x="43.8" y="11.6" font-size="11" fill="#ffffff" text-anchor="middle" textLength="82.5" lengthAdjust="spacingAndGlyphs" >Stellplatz suchen</text>
<text x="42.8" y="10.6" font-size="11" fill="#5d80aa" text-anchor="middle" textLength="82.5" lengthAdjust="spacingAndGlyphs" >Stellplatz suchen</text>
</svg>
<rect x="689" y="124" width="77" height="16" fill="#6f8db0" rx="1.5"/>
<rect x="689" y="124" width="76" height="15" fill="#b9b8be" rx="1.5"/>
<rect x="690" y="125" width="75" height="14" fill="#c6c3c7" />
<svg x="690" y="125" width="75" height="13.5" overflow="hidden">
<text x="37.3" y="11.6" font-size="11" fill="#ffffff" text-anchor="middle" textLength="29.5" lengthAdjust="spacingAndGlyphs" >Cutter</text>
<text x="36.3" y="10.6" font-size="11" fill="#5d80aa" text-anchor="middle" textLength="29.5" lengthAdjust="spacingAndGlyphs" >Cutter</text>
</svg>
<rect x="769" y="124" width="77" height="16" fill="#6f8db0" rx="1.5"/>
<rect x="769" y="124" width="76" height="15" fill="#b9b8be" rx="1.5"/>
<rect x="770" y="125" width="75" height="14" fill="#c6c3c7" />
<svg x="770" y="125" width="75" height="13.5" overflow="hidden">
<text x="37.3" y="11.6" font-size="11" fill="#ffffff" text-anchor="middle" textLength="23" lengthAdjust="spacingAndGlyphs" >FIBU</text>
<text x="36.3" y="10.6" font-size="11" fill="#5d80aa" text-anchor="middle" textLength="23" lengthAdjust="spacingAndGlyphs" >FIBU</text>
</svg>
<rect x="849" y="124" width="77" height="16" fill="#6f8db0" rx="1.5"/>
<rect x="849" y="124" width="76" height="15" fill="#b9b8be" rx="1.5"/>
<rect x="850" y="125" width="75" height="14" fill="#c6c3c7" />
<svg x="850" y="125" width="75" height="13.5" overflow="hidden">
<text x="37.3" y="11.6" font-size="11" fill="#ffffff" text-anchor="middle" textLength="50" lengthAdjust="spacingAndGlyphs" >Hierarchie</text>
<text x="36.3" y="10.6" font-size="11" fill="#5d80aa" text-anchor="middle" textLength="50" lengthAdjust="spacingAndGlyphs" >Hierarchie</text>
</svg>
<rect x="940" y="125" width="11" height="11" fill="#c9c9cb" />
<rect x="940" y="125" width="11" height="1.2" fill="#24344a" />
<rect x="940" y="125" width="1.2" height="11" fill="#24344a" />
<rect x="103" y="141" width="32" height="18" fill="#fff" />
<rect x="105" y="158" width="30" height="1" fill="#c6c6c6" />
<rect x="134" y="143" width="1" height="16" fill="#c6c6c6" />
<rect x="104" y="141" width="30" height="1" fill="#95a6b9" />
<rect x="104" y="142" width="30" height="1" fill="#587392" />
<rect x="103" y="142" width="1" height="16" fill="#95a6b9" />
<rect x="104" y="142" width="1" height="16" fill="#587392" />
<rect x="136" y="141" width="239" height="18" fill="#fff" />
<rect x="138" y="158" width="237" height="1" fill="#c6c6c6" />
<rect x="374" y="143" width="1" height="16" fill="#c6c6c6" />
<rect x="137" y="141" width="237" height="1" fill="#95a6b9" />
<rect x="137" y="142" width="237" height="1" fill="#587392" />
<rect x="136" y="142" width="1" height="16" fill="#95a6b9" />
<rect x="137" y="142" width="1" height="16" fill="#587392" />
<g transform="translate(378,143)">
 <rect x="0" y="0" width="15" height="16" rx="1.5" fill="#7890ab"/>
 <rect x="0" y="0" width="14" height="15" rx="1.5" fill="#d6d4d8"/>
 <rect x="1" y="1" width="8" height="1" fill="#959595"/>
 <rect x="9" y="1" width="1" height="1" fill="#555"/>
 <rect x="1" y="1" width="1" height="7.5" fill="#fff"/>
 <rect x="1.8" y="8" width="1.5" height="1" fill="#777"/>
 <rect x="3" y="3" width="11" height="1" fill="#7c7c7c"/>
 <rect x="3" y="4" width="10" height="1" fill="#aaaaaa"/>
 <rect x="3" y="5" width="1" height="8" fill="#7c7c7c"/>
 <rect x="4" y="5" width="7" height="7" fill="#fff"/>
 <rect x="11" y="5" width="1" height="8" fill="#aaaaaa"/>
 <rect x="12" y="6" width="1" height="2" fill="#7c7c7c"/>
 <rect x="13" y="5" width="1" height="8" fill="#aaaaaa"/>
 <rect x="4" y="12" width="10" height="1" fill="#aaaaaa"/>
 <path d="M5 7 L7.6 9 L5 11 Z" fill="#959595"/>
 <rect x="8" y="6" width="2.2" height="1" fill="#959595"/>
 <rect x="8" y="8" width="2.2" height="1" fill="#959595"/>
 <rect x="8" y="10" width="2.2" height="1" fill="#959595"/>
</g>
<rect x="396" y="141" width="31" height="18" fill="#fff" />
<rect x="398" y="158" width="29" height="1" fill="#c6c6c6" />
<rect x="426" y="143" width="1" height="16" fill="#c6c6c6" />
<rect x="397" y="141" width="29" height="1" fill="#95a6b9" />
<rect x="397" y="142" width="29" height="1" fill="#587392" />
<rect x="396" y="142" width="1" height="16" fill="#95a6b9" />
<rect x="397" y="142" width="1" height="16" fill="#587392" />
<rect x="429" y="141" width="238" height="18" fill="#fff" />
<rect x="431" y="158" width="236" height="1" fill="#c6c6c6" />
<rect x="666" y="143" width="1" height="16" fill="#c6c6c6" />
<rect x="430" y="141" width="236" height="1" fill="#95a6b9" />
<rect x="430" y="142" width="236" height="1" fill="#587392" />
<rect x="429" y="142" width="1" height="16" fill="#95a6b9" />
<rect x="430" y="142" width="1" height="16" fill="#587392" />
<g transform="translate(670,143)">
 <rect x="0" y="0" width="15" height="16" rx="1.5" fill="#7890ab"/>
 <rect x="0" y="0" width="14" height="15" rx="1.5" fill="#d6d4d8"/>
 <rect x="1" y="1" width="8" height="1" fill="#959595"/>
 <rect x="9" y="1" width="1" height="1" fill="#555"/>
 <rect x="1" y="1" width="1" height="7.5" fill="#fff"/>
 <rect x="1.8" y="8" width="1.5" height="1" fill="#777"/>
 <rect x="3" y="3" width="11" height="1" fill="#7c7c7c"/>
 <rect x="3" y="4" width="10" height="1" fill="#aaaaaa"/>
 <rect x="3" y="5" width="1" height="8" fill="#7c7c7c"/>
 <rect x="4" y="5" width="7" height="7" fill="#fff"/>
 <rect x="11" y="5" width="1" height="8" fill="#aaaaaa"/>
 <rect x="12" y="6" width="1" height="2" fill="#7c7c7c"/>
 <rect x="13" y="5" width="1" height="8" fill="#aaaaaa"/>
 <rect x="4" y="12" width="10" height="1" fill="#aaaaaa"/>
 <path d="M5 7 L7.6 9 L5 11 Z" fill="#959595"/>
 <rect x="8" y="6" width="2.2" height="1" fill="#959595"/>
 <rect x="8" y="8" width="2.2" height="1" fill="#959595"/>
 <rect x="8" y="10" width="2.2" height="1" fill="#959595"/>
</g>
<rect x="689" y="143" width="77" height="16" fill="#6f8db0" rx="1.5"/>
<rect x="689" y="143" width="76" height="15" fill="#b9b8be" rx="1.5"/>
<rect x="690" y="144" width="75" height="14" fill="#c6c3c7" />
<svg x="690" y="144" width="75" height="13.5" overflow="hidden">
<text x="37.3" y="11.6" font-size="11" fill="#ffffff" text-anchor="middle" textLength="28" lengthAdjust="spacingAndGlyphs" >Druck</text>
<text x="36.3" y="10.6" font-size="11" fill="#5d80aa" text-anchor="middle" textLength="28" lengthAdjust="spacingAndGlyphs" >Druck</text>
</svg>
<rect x="769" y="143" width="77" height="16" fill="#6f8db0" rx="1.5"/>
<rect x="769" y="143" width="76" height="15" fill="#b9b8be" rx="1.5"/>
<rect x="770" y="144" width="75" height="14" fill="#c6c3c7" />
<svg x="770" y="144" width="75" height="13.5" overflow="hidden">
<text x="37.3" y="11.6" font-size="11" fill="#ffffff" text-anchor="middle" textLength="64" lengthAdjust="spacingAndGlyphs" >ProdNr Regel</text>
<text x="36.3" y="10.6" font-size="11" fill="#5d80aa" text-anchor="middle" textLength="64" lengthAdjust="spacingAndGlyphs" >ProdNr Regel</text>
</svg>
<rect x="849" y="143" width="77" height="16" fill="#6f8db0" rx="1.5"/>
<rect x="849" y="143" width="76" height="15" fill="#b9b8be" rx="1.5"/>
<rect x="850" y="144" width="75" height="14" fill="#c6c3c7" />
<svg x="850" y="144" width="75" height="13.5" overflow="hidden">
<text x="37.3" y="11.6" font-size="11" fill="#ffffff" text-anchor="middle" textLength="69.7" lengthAdjust="spacingAndGlyphs" >Relev.Merkmal</text>
<text x="36.3" y="10.6" font-size="11" fill="#5d80aa" text-anchor="middle" textLength="69.7" lengthAdjust="spacingAndGlyphs" >Relev.Merkmal</text>
</svg>
<rect x="16" y="162" width="33" height="18" fill="#fff" />
<rect x="18" y="179" width="31" height="1" fill="#c6c6c6" />
<rect x="48" y="164" width="1" height="16" fill="#c6c6c6" />
<rect x="17" y="162" width="31" height="1" fill="#95a6b9" />
<rect x="17" y="163" width="31" height="1" fill="#587392" />
<rect x="16" y="163" width="1" height="16" fill="#95a6b9" />
<rect x="17" y="163" width="1" height="16" fill="#587392" />
<rect x="50" y="162" width="212" height="18" fill="#fff" />
<rect x="52" y="179" width="210" height="1" fill="#c6c6c6" />
<rect x="261" y="164" width="1" height="16" fill="#c6c6c6" />
<rect x="51" y="162" width="210" height="1" fill="#95a6b9" />
<rect x="51" y="163" width="210" height="1" fill="#587392" />
<rect x="50" y="163" width="1" height="16" fill="#95a6b9" />
<rect x="51" y="163" width="1" height="16" fill="#587392" />
<rect x="263" y="162" width="32" height="18" fill="#fff" />
<rect x="265" y="179" width="30" height="1" fill="#c6c6c6" />
<rect x="294" y="164" width="1" height="16" fill="#c6c6c6" />
<rect x="264" y="162" width="30" height="1" fill="#95a6b9" />
<rect x="264" y="163" width="30" height="1" fill="#587392" />
<rect x="263" y="163" width="1" height="16" fill="#95a6b9" />
<rect x="264" y="163" width="1" height="16" fill="#587392" />
<rect x="296" y="162" width="79" height="18" fill="#fff" />
<rect x="298" y="179" width="77" height="1" fill="#c6c6c6" />
<rect x="374" y="164" width="1" height="16" fill="#c6c6c6" />
<rect x="297" y="162" width="77" height="1" fill="#95a6b9" />
<rect x="297" y="163" width="77" height="1" fill="#587392" />
<rect x="296" y="163" width="1" height="16" fill="#95a6b9" />
<rect x="297" y="163" width="1" height="16" fill="#587392" />
<g transform="translate(378,164)">
 <rect x="0" y="0" width="15" height="16" rx="1.5" fill="#7890ab"/>
 <rect x="0" y="0" width="14" height="15" rx="1.5" fill="#d6d4d8"/>
 <rect x="1" y="1" width="8" height="1" fill="#959595"/>
 <rect x="9" y="1" width="1" height="1" fill="#555"/>
 <rect x="1" y="1" width="1" height="7.5" fill="#fff"/>
 <rect x="1.8" y="8" width="1.5" height="1" fill="#777"/>
 <rect x="3" y="3" width="11" height="1" fill="#7c7c7c"/>
 <rect x="3" y="4" width="10" height="1" fill="#aaaaaa"/>
 <rect x="3" y="5" width="1" height="8" fill="#7c7c7c"/>
 <rect x="4" y="5" width="7" height="7" fill="#fff"/>
 <rect x="11" y="5" width="1" height="8" fill="#aaaaaa"/>
 <rect x="12" y="6" width="1" height="2" fill="#7c7c7c"/>
 <rect x="13" y="5" width="1" height="8" fill="#aaaaaa"/>
 <rect x="4" y="12" width="10" height="1" fill="#aaaaaa"/>
 <path d="M5 7 L7.6 9 L5 11 Z" fill="#959595"/>
 <rect x="8" y="6" width="2.2" height="1" fill="#959595"/>
 <rect x="8" y="8" width="2.2" height="1" fill="#959595"/>
 <rect x="8" y="10" width="2.2" height="1" fill="#959595"/>
</g>
<rect x="396" y="162" width="31" height="18" fill="#fff" />
<rect x="398" y="179" width="29" height="1" fill="#c6c6c6" />
<rect x="426" y="164" width="1" height="16" fill="#c6c6c6" />
<rect x="397" y="162" width="29" height="1" fill="#95a6b9" />
<rect x="397" y="163" width="29" height="1" fill="#587392" />
<rect x="396" y="163" width="1" height="16" fill="#95a6b9" />
<rect x="397" y="163" width="1" height="16" fill="#587392" />
<rect x="429" y="162" width="145" height="18" fill="#fff" />
<rect x="431" y="179" width="143" height="1" fill="#c6c6c6" />
<rect x="573" y="164" width="1" height="16" fill="#c6c6c6" />
<rect x="430" y="162" width="143" height="1" fill="#95a6b9" />
<rect x="430" y="163" width="143" height="1" fill="#587392" />
<rect x="429" y="163" width="1" height="16" fill="#95a6b9" />
<rect x="430" y="163" width="1" height="16" fill="#587392" />
<g transform="translate(577,164)">
 <rect x="0" y="0" width="15" height="16" rx="1.5" fill="#7890ab"/>
 <rect x="0" y="0" width="14" height="15" rx="1.5" fill="#d6d4d8"/>
 <rect x="1" y="1" width="8" height="1" fill="#959595"/>
 <rect x="9" y="1" width="1" height="1" fill="#555"/>
 <rect x="1" y="1" width="1" height="7.5" fill="#fff"/>
 <rect x="1.8" y="8" width="1.5" height="1" fill="#777"/>
 <rect x="3" y="3" width="11" height="1" fill="#7c7c7c"/>
 <rect x="3" y="4" width="10" height="1" fill="#aaaaaa"/>
 <rect x="3" y="5" width="1" height="8" fill="#7c7c7c"/>
 <rect x="4" y="5" width="7" height="7" fill="#fff"/>
 <rect x="11" y="5" width="1" height="8" fill="#aaaaaa"/>
 <rect x="12" y="6" width="1" height="2" fill="#7c7c7c"/>
 <rect x="13" y="5" width="1" height="8" fill="#aaaaaa"/>
 <rect x="4" y="12" width="10" height="1" fill="#aaaaaa"/>
 <path d="M5 7 L7.6 9 L5 11 Z" fill="#959595"/>
 <rect x="8" y="6" width="2.2" height="1" fill="#959595"/>
 <rect x="8" y="8" width="2.2" height="1" fill="#959595"/>
 <rect x="8" y="10" width="2.2" height="1" fill="#959595"/>
</g>
<rect x="596" y="164" width="90" height="16" fill="#6f8db0" rx="1.5"/>
<rect x="596" y="164" width="89" height="15" fill="#b9b8be" rx="1.5"/>
<rect x="597" y="165" width="88" height="14" fill="#c6c3c7" />
<svg x="597" y="165" width="88" height="13.5" overflow="hidden">
<text x="43.8" y="11.6" font-size="11" fill="#ffffff" text-anchor="middle" textLength="82.5" lengthAdjust="spacingAndGlyphs" >Stellplatz suchen</text>
<text x="42.8" y="10.6" font-size="11" fill="#5d80aa" text-anchor="middle" textLength="82.5" lengthAdjust="spacingAndGlyphs" >Stellplatz suchen</text>
</svg>
<rect x="689" y="164" width="77" height="16" fill="#6f8db0" rx="1.5"/>
<rect x="689" y="164" width="76" height="15" fill="#b9b8be" rx="1.5"/>
<rect x="690" y="165" width="75" height="14" fill="#c6c3c7" />
<svg x="690" y="165" width="75" height="13.5" overflow="hidden">
<text x="37.3" y="11.6" font-size="11" fill="#ffffff" text-anchor="middle" textLength="29.5" lengthAdjust="spacingAndGlyphs" >Cutter</text>
<text x="36.3" y="10.6" font-size="11" fill="#5d80aa" text-anchor="middle" textLength="29.5" lengthAdjust="spacingAndGlyphs" >Cutter</text>
</svg>
<rect x="769" y="164" width="77" height="16" fill="#6f8db0" rx="1.5"/>
<rect x="769" y="164" width="76" height="15" fill="#b9b8be" rx="1.5"/>
<rect x="770" y="165" width="75" height="14" fill="#c6c3c7" />
<svg x="770" y="165" width="75" height="13.5" overflow="hidden">
<text x="37.3" y="11.6" font-size="11" fill="#ffffff" text-anchor="middle" textLength="23" lengthAdjust="spacingAndGlyphs" >FIBU</text>
<text x="36.3" y="10.6" font-size="11" fill="#5d80aa" text-anchor="middle" textLength="23" lengthAdjust="spacingAndGlyphs" >FIBU</text>
</svg>
<rect x="849" y="164" width="77" height="16" fill="#6f8db0" rx="1.5"/>
<rect x="849" y="164" width="76" height="15" fill="#b9b8be" rx="1.5"/>
<rect x="850" y="165" width="75" height="14" fill="#c6c3c7" />
<svg x="850" y="165" width="75" height="13.5" overflow="hidden">
<text x="37.3" y="11.6" font-size="11" fill="#ffffff" text-anchor="middle" textLength="50" lengthAdjust="spacingAndGlyphs" >Hierarchie</text>
<text x="36.3" y="10.6" font-size="11" fill="#5d80aa" text-anchor="middle" textLength="50" lengthAdjust="spacingAndGlyphs" >Hierarchie</text>
</svg>
<rect x="940" y="165" width="11" height="11" fill="#c9c9cb" />
<rect x="940" y="165" width="11" height="1.2" fill="#24344a" />
<rect x="940" y="165" width="1.2" height="11" fill="#24344a" />
<rect x="103" y="181" width="32" height="18" fill="#fff" />
<rect x="105" y="198" width="30" height="1" fill="#c6c6c6" />
<rect x="134" y="183" width="1" height="16" fill="#c6c6c6" />
<rect x="104" y="181" width="30" height="1" fill="#95a6b9" />
<rect x="104" y="182" width="30" height="1" fill="#587392" />
<rect x="103" y="182" width="1" height="16" fill="#95a6b9" />
<rect x="104" y="182" width="1" height="16" fill="#587392" />
<rect x="136" y="181" width="239" height="18" fill="#fff" />
<rect x="138" y="198" width="237" height="1" fill="#c6c6c6" />
<rect x="374" y="183" width="1" height="16" fill="#c6c6c6" />
<rect x="137" y="181" width="237" height="1" fill="#95a6b9" />
<rect x="137" y="182" width="237" height="1" fill="#587392" />
<rect x="136" y="182" width="1" height="16" fill="#95a6b9" />
<rect x="137" y="182" width="1" height="16" fill="#587392" />
<g transform="translate(378,183)">
 <rect x="0" y="0" width="15" height="16" rx="1.5" fill="#7890ab"/>
 <rect x="0" y="0" width="14" height="15" rx="1.5" fill="#d6d4d8"/>
 <rect x="1" y="1" width="8" height="1" fill="#959595"/>
 <rect x="9" y="1" width="1" height="1" fill="#555"/>
 <rect x="1" y="1" width="1" height="7.5" fill="#fff"/>
 <rect x="1.8" y="8" width="1.5" height="1" fill="#777"/>
 <rect x="3" y="3" width="11" height="1" fill="#7c7c7c"/>
 <rect x="3" y="4" width="10" height="1" fill="#aaaaaa"/>
 <rect x="3" y="5" width="1" height="8" fill="#7c7c7c"/>
 <rect x="4" y="5" width="7" height="7" fill="#fff"/>
 <rect x="11" y="5" width="1" height="8" fill="#aaaaaa"/>
 <rect x="12" y="6" width="1" height="2" fill="#7c7c7c"/>
 <rect x="13" y="5" width="1" height="8" fill="#aaaaaa"/>
 <rect x="4" y="12" width="10" height="1" fill="#aaaaaa"/>
 <path d="M5 7 L7.6 9 L5 11 Z" fill="#959595"/>
 <rect x="8" y="6" width="2.2" height="1" fill="#959595"/>
 <rect x="8" y="8" width="2.2" height="1" fill="#959595"/>
 <rect x="8" y="10" width="2.2" height="1" fill="#959595"/>
</g>
<rect x="396" y="181" width="31" height="18" fill="#fff" />
<rect x="398" y="198" width="29" height="1" fill="#c6c6c6" />
<rect x="426" y="183" width="1" height="16" fill="#c6c6c6" />
<rect x="397" y="181" width="29" height="1" fill="#95a6b9" />
<rect x="397" y="182" width="29" height="1" fill="#587392" />
<rect x="396" y="182" width="1" height="16" fill="#95a6b9" />
<rect x="397" y="182" width="1" height="16" fill="#587392" />
<rect x="429" y="181" width="238" height="18" fill="#fff" />
<rect x="431" y="198" width="236" height="1" fill="#c6c6c6" />
<rect x="666" y="183" width="1" height="16" fill="#c6c6c6" />
<rect x="430" y="181" width="236" height="1" fill="#95a6b9" />
<rect x="430" y="182" width="236" height="1" fill="#587392" />
<rect x="429" y="182" width="1" height="16" fill="#95a6b9" />
<rect x="430" y="182" width="1" height="16" fill="#587392" />
<g transform="translate(670,183)">
 <rect x="0" y="0" width="15" height="16" rx="1.5" fill="#7890ab"/>
 <rect x="0" y="0" width="14" height="15" rx="1.5" fill="#d6d4d8"/>
 <rect x="1" y="1" width="8" height="1" fill="#959595"/>
 <rect x="9" y="1" width="1" height="1" fill="#555"/>
 <rect x="1" y="1" width="1" height="7.5" fill="#fff"/>
 <rect x="1.8" y="8" width="1.5" height="1" fill="#777"/>
 <rect x="3" y="3" width="11" height="1" fill="#7c7c7c"/>
 <rect x="3" y="4" width="10" height="1" fill="#aaaaaa"/>
 <rect x="3" y="5" width="1" height="8" fill="#7c7c7c"/>
 <rect x="4" y="5" width="7" height="7" fill="#fff"/>
 <rect x="11" y="5" width="1" height="8" fill="#aaaaaa"/>
 <rect x="12" y="6" width="1" height="2" fill="#7c7c7c"/>
 <rect x="13" y="5" width="1" height="8" fill="#aaaaaa"/>
 <rect x="4" y="12" width="10" height="1" fill="#aaaaaa"/>
 <path d="M5 7 L7.6 9 L5 11 Z" fill="#959595"/>
 <rect x="8" y="6" width="2.2" height="1" fill="#959595"/>
 <rect x="8" y="8" width="2.2" height="1" fill="#959595"/>
 <rect x="8" y="10" width="2.2" height="1" fill="#959595"/>
</g>
<rect x="689" y="183" width="77" height="16" fill="#6f8db0" rx="1.5"/>
<rect x="689" y="183" width="76" height="15" fill="#b9b8be" rx="1.5"/>
<rect x="690" y="184" width="75" height="14" fill="#c6c3c7" />
<svg x="690" y="184" width="75" height="13.5" overflow="hidden">
<text x="37.3" y="11.6" font-size="11" fill="#ffffff" text-anchor="middle" textLength="28" lengthAdjust="spacingAndGlyphs" >Druck</text>
<text x="36.3" y="10.6" font-size="11" fill="#5d80aa" text-anchor="middle" textLength="28" lengthAdjust="spacingAndGlyphs" >Druck</text>
</svg>
<rect x="769" y="183" width="77" height="16" fill="#6f8db0" rx="1.5"/>
<rect x="769" y="183" width="76" height="15" fill="#b9b8be" rx="1.5"/>
<rect x="770" y="184" width="75" height="14" fill="#c6c3c7" />
<svg x="770" y="184" width="75" height="13.5" overflow="hidden">
<text x="37.3" y="11.6" font-size="11" fill="#ffffff" text-anchor="middle" textLength="64" lengthAdjust="spacingAndGlyphs" >ProdNr Regel</text>
<text x="36.3" y="10.6" font-size="11" fill="#5d80aa" text-anchor="middle" textLength="64" lengthAdjust="spacingAndGlyphs" >ProdNr Regel</text>
</svg>
<rect x="849" y="183" width="77" height="16" fill="#6f8db0" rx="1.5"/>
<rect x="849" y="183" width="76" height="15" fill="#b9b8be" rx="1.5"/>
<rect x="850" y="184" width="75" height="14" fill="#c6c3c7" />
<svg x="850" y="184" width="75" height="13.5" overflow="hidden">
<text x="37.3" y="11.6" font-size="11" fill="#ffffff" text-anchor="middle" textLength="69.7" lengthAdjust="spacingAndGlyphs" >Relev.Merkmal</text>
<text x="36.3" y="10.6" font-size="11" fill="#5d80aa" text-anchor="middle" textLength="69.7" lengthAdjust="spacingAndGlyphs" >Relev.Merkmal</text>
</svg>
<rect x="16" y="202" width="33" height="18" fill="#fff" />
<rect x="18" y="219" width="31" height="1" fill="#c6c6c6" />
<rect x="48" y="204" width="1" height="16" fill="#c6c6c6" />
<rect x="17" y="202" width="31" height="1" fill="#95a6b9" />
<rect x="17" y="203" width="31" height="1" fill="#587392" />
<rect x="16" y="203" width="1" height="16" fill="#95a6b9" />
<rect x="17" y="203" width="1" height="16" fill="#587392" />
<rect x="50" y="202" width="212" height="18" fill="#fff" />
<rect x="52" y="219" width="210" height="1" fill="#c6c6c6" />
<rect x="261" y="204" width="1" height="16" fill="#c6c6c6" />
<rect x="51" y="202" width="210" height="1" fill="#95a6b9" />
<rect x="51" y="203" width="210" height="1" fill="#587392" />
<rect x="50" y="203" width="1" height="16" fill="#95a6b9" />
<rect x="51" y="203" width="1" height="16" fill="#587392" />
<rect x="263" y="202" width="32" height="18" fill="#fff" />
<rect x="265" y="219" width="30" height="1" fill="#c6c6c6" />
<rect x="294" y="204" width="1" height="16" fill="#c6c6c6" />
<rect x="264" y="202" width="30" height="1" fill="#95a6b9" />
<rect x="264" y="203" width="30" height="1" fill="#587392" />
<rect x="263" y="203" width="1" height="16" fill="#95a6b9" />
<rect x="264" y="203" width="1" height="16" fill="#587392" />
<rect x="296" y="202" width="79" height="18" fill="#fff" />
<rect x="298" y="219" width="77" height="1" fill="#c6c6c6" />
<rect x="374" y="204" width="1" height="16" fill="#c6c6c6" />
<rect x="297" y="202" width="77" height="1" fill="#95a6b9" />
<rect x="297" y="203" width="77" height="1" fill="#587392" />
<rect x="296" y="203" width="1" height="16" fill="#95a6b9" />
<rect x="297" y="203" width="1" height="16" fill="#587392" />
<g transform="translate(378,204)">
 <rect x="0" y="0" width="15" height="16" rx="1.5" fill="#7890ab"/>
 <rect x="0" y="0" width="14" height="15" rx="1.5" fill="#d6d4d8"/>
 <rect x="1" y="1" width="8" height="1" fill="#959595"/>
 <rect x="9" y="1" width="1" height="1" fill="#555"/>
 <rect x="1" y="1" width="1" height="7.5" fill="#fff"/>
 <rect x="1.8" y="8" width="1.5" height="1" fill="#777"/>
 <rect x="3" y="3" width="11" height="1" fill="#7c7c7c"/>
 <rect x="3" y="4" width="10" height="1" fill="#aaaaaa"/>
 <rect x="3" y="5" width="1" height="8" fill="#7c7c7c"/>
 <rect x="4" y="5" width="7" height="7" fill="#fff"/>
 <rect x="11" y="5" width="1" height="8" fill="#aaaaaa"/>
 <rect x="12" y="6" width="1" height="2" fill="#7c7c7c"/>
 <rect x="13" y="5" width="1" height="8" fill="#aaaaaa"/>
 <rect x="4" y="12" width="10" height="1" fill="#aaaaaa"/>
 <path d="M5 7 L7.6 9 L5 11 Z" fill="#959595"/>
 <rect x="8" y="6" width="2.2" height="1" fill="#959595"/>
 <rect x="8" y="8" width="2.2" height="1" fill="#959595"/>
 <rect x="8" y="10" width="2.2" height="1" fill="#959595"/>
</g>
<rect x="396" y="202" width="31" height="18" fill="#fff" />
<rect x="398" y="219" width="29" height="1" fill="#c6c6c6" />
<rect x="426" y="204" width="1" height="16" fill="#c6c6c6" />
<rect x="397" y="202" width="29" height="1" fill="#95a6b9" />
<rect x="397" y="203" width="29" height="1" fill="#587392" />
<rect x="396" y="203" width="1" height="16" fill="#95a6b9" />
<rect x="397" y="203" width="1" height="16" fill="#587392" />
<rect x="429" y="202" width="145" height="18" fill="#fff" />
<rect x="431" y="219" width="143" height="1" fill="#c6c6c6" />
<rect x="573" y="204" width="1" height="16" fill="#c6c6c6" />
<rect x="430" y="202" width="143" height="1" fill="#95a6b9" />
<rect x="430" y="203" width="143" height="1" fill="#587392" />
<rect x="429" y="203" width="1" height="16" fill="#95a6b9" />
<rect x="430" y="203" width="1" height="16" fill="#587392" />
<g transform="translate(577,204)">
 <rect x="0" y="0" width="15" height="16" rx="1.5" fill="#7890ab"/>
 <rect x="0" y="0" width="14" height="15" rx="1.5" fill="#d6d4d8"/>
 <rect x="1" y="1" width="8" height="1" fill="#959595"/>
 <rect x="9" y="1" width="1" height="1" fill="#555"/>
 <rect x="1" y="1" width="1" height="7.5" fill="#fff"/>
 <rect x="1.8" y="8" width="1.5" height="1" fill="#777"/>
 <rect x="3" y="3" width="11" height="1" fill="#7c7c7c"/>
 <rect x="3" y="4" width="10" height="1" fill="#aaaaaa"/>
 <rect x="3" y="5" width="1" height="8" fill="#7c7c7c"/>
 <rect x="4" y="5" width="7" height="7" fill="#fff"/>
 <rect x="11" y="5" width="1" height="8" fill="#aaaaaa"/>
 <rect x="12" y="6" width="1" height="2" fill="#7c7c7c"/>
 <rect x="13" y="5" width="1" height="8" fill="#aaaaaa"/>
 <rect x="4" y="12" width="10" height="1" fill="#aaaaaa"/>
 <path d="M5 7 L7.6 9 L5 11 Z" fill="#959595"/>
 <rect x="8" y="6" width="2.2" height="1" fill="#959595"/>
 <rect x="8" y="8" width="2.2" height="1" fill="#959595"/>
 <rect x="8" y="10" width="2.2" height="1" fill="#959595"/>
</g>
<rect x="596" y="204" width="90" height="16" fill="#6f8db0" rx="1.5"/>
<rect x="596" y="204" width="89" height="15" fill="#b9b8be" rx="1.5"/>
<rect x="597" y="205" width="88" height="14" fill="#c6c3c7" />
<svg x="597" y="205" width="88" height="13.5" overflow="hidden">
<text x="43.8" y="11.6" font-size="11" fill="#ffffff" text-anchor="middle" textLength="82.5" lengthAdjust="spacingAndGlyphs" >Stellplatz suchen</text>
<text x="42.8" y="10.6" font-size="11" fill="#5d80aa" text-anchor="middle" textLength="82.5" lengthAdjust="spacingAndGlyphs" >Stellplatz suchen</text>
</svg>
<rect x="689" y="204" width="77" height="16" fill="#6f8db0" rx="1.5"/>
<rect x="689" y="204" width="76" height="15" fill="#b9b8be" rx="1.5"/>
<rect x="690" y="205" width="75" height="14" fill="#c6c3c7" />
<svg x="690" y="205" width="75" height="13.5" overflow="hidden">
<text x="37.3" y="11.6" font-size="11" fill="#ffffff" text-anchor="middle" textLength="29.5" lengthAdjust="spacingAndGlyphs" >Cutter</text>
<text x="36.3" y="10.6" font-size="11" fill="#5d80aa" text-anchor="middle" textLength="29.5" lengthAdjust="spacingAndGlyphs" >Cutter</text>
</svg>
<rect x="769" y="204" width="77" height="16" fill="#6f8db0" rx="1.5"/>
<rect x="769" y="204" width="76" height="15" fill="#b9b8be" rx="1.5"/>
<rect x="770" y="205" width="75" height="14" fill="#c6c3c7" />
<svg x="770" y="205" width="75" height="13.5" overflow="hidden">
<text x="37.3" y="11.6" font-size="11" fill="#ffffff" text-anchor="middle" textLength="23" lengthAdjust="spacingAndGlyphs" >FIBU</text>
<text x="36.3" y="10.6" font-size="11" fill="#5d80aa" text-anchor="middle" textLength="23" lengthAdjust="spacingAndGlyphs" >FIBU</text>
</svg>
<rect x="849" y="204" width="77" height="16" fill="#6f8db0" rx="1.5"/>
<rect x="849" y="204" width="76" height="15" fill="#b9b8be" rx="1.5"/>
<rect x="850" y="205" width="75" height="14" fill="#c6c3c7" />
<svg x="850" y="205" width="75" height="13.5" overflow="hidden">
<text x="37.3" y="11.6" font-size="11" fill="#ffffff" text-anchor="middle" textLength="50" lengthAdjust="spacingAndGlyphs" >Hierarchie</text>
<text x="36.3" y="10.6" font-size="11" fill="#5d80aa" text-anchor="middle" textLength="50" lengthAdjust="spacingAndGlyphs" >Hierarchie</text>
</svg>
<rect x="940" y="205" width="11" height="11" fill="#c9c9cb" />
<rect x="940" y="205" width="11" height="1.2" fill="#24344a" />
<rect x="940" y="205" width="1.2" height="11" fill="#24344a" />
<rect x="103" y="221" width="32" height="18" fill="#fff" />
<rect x="105" y="238" width="30" height="1" fill="#c6c6c6" />
<rect x="134" y="223" width="1" height="16" fill="#c6c6c6" />
<rect x="104" y="221" width="30" height="1" fill="#95a6b9" />
<rect x="104" y="222" width="30" height="1" fill="#587392" />
<rect x="103" y="222" width="1" height="16" fill="#95a6b9" />
<rect x="104" y="222" width="1" height="16" fill="#587392" />
<rect x="136" y="221" width="239" height="18" fill="#fff" />
<rect x="138" y="238" width="237" height="1" fill="#c6c6c6" />
<rect x="374" y="223" width="1" height="16" fill="#c6c6c6" />
<rect x="137" y="221" width="237" height="1" fill="#95a6b9" />
<rect x="137" y="222" width="237" height="1" fill="#587392" />
<rect x="136" y="222" width="1" height="16" fill="#95a6b9" />
<rect x="137" y="222" width="1" height="16" fill="#587392" />
<g transform="translate(378,223)">
 <rect x="0" y="0" width="15" height="16" rx="1.5" fill="#7890ab"/>
 <rect x="0" y="0" width="14" height="15" rx="1.5" fill="#d6d4d8"/>
 <rect x="1" y="1" width="8" height="1" fill="#959595"/>
 <rect x="9" y="1" width="1" height="1" fill="#555"/>
 <rect x="1" y="1" width="1" height="7.5" fill="#fff"/>
 <rect x="1.8" y="8" width="1.5" height="1" fill="#777"/>
 <rect x="3" y="3" width="11" height="1" fill="#7c7c7c"/>
 <rect x="3" y="4" width="10" height="1" fill="#aaaaaa"/>
 <rect x="3" y="5" width="1" height="8" fill="#7c7c7c"/>
 <rect x="4" y="5" width="7" height="7" fill="#fff"/>
 <rect x="11" y="5" width="1" height="8" fill="#aaaaaa"/>
 <rect x="12" y="6" width="1" height="2" fill="#7c7c7c"/>
 <rect x="13" y="5" width="1" height="8" fill="#aaaaaa"/>
 <rect x="4" y="12" width="10" height="1" fill="#aaaaaa"/>
 <path d="M5 7 L7.6 9 L5 11 Z" fill="#959595"/>
 <rect x="8" y="6" width="2.2" height="1" fill="#959595"/>
 <rect x="8" y="8" width="2.2" height="1" fill="#959595"/>
 <rect x="8" y="10" width="2.2" height="1" fill="#959595"/>
</g>
<rect x="396" y="221" width="31" height="18" fill="#fff" />
<rect x="398" y="238" width="29" height="1" fill="#c6c6c6" />
<rect x="426" y="223" width="1" height="16" fill="#c6c6c6" />
<rect x="397" y="221" width="29" height="1" fill="#95a6b9" />
<rect x="397" y="222" width="29" height="1" fill="#587392" />
<rect x="396" y="222" width="1" height="16" fill="#95a6b9" />
<rect x="397" y="222" width="1" height="16" fill="#587392" />
<rect x="429" y="221" width="238" height="18" fill="#fff" />
<rect x="431" y="238" width="236" height="1" fill="#c6c6c6" />
<rect x="666" y="223" width="1" height="16" fill="#c6c6c6" />
<rect x="430" y="221" width="236" height="1" fill="#95a6b9" />
<rect x="430" y="222" width="236" height="1" fill="#587392" />
<rect x="429" y="222" width="1" height="16" fill="#95a6b9" />
<rect x="430" y="222" width="1" height="16" fill="#587392" />
<g transform="translate(670,223)">
 <rect x="0" y="0" width="15" height="16" rx="1.5" fill="#7890ab"/>
 <rect x="0" y="0" width="14" height="15" rx="1.5" fill="#d6d4d8"/>
 <rect x="1" y="1" width="8" height="1" fill="#959595"/>
 <rect x="9" y="1" width="1" height="1" fill="#555"/>
 <rect x="1" y="1" width="1" height="7.5" fill="#fff"/>
 <rect x="1.8" y="8" width="1.5" height="1" fill="#777"/>
 <rect x="3" y="3" width="11" height="1" fill="#7c7c7c"/>
 <rect x="3" y="4" width="10" height="1" fill="#aaaaaa"/>
 <rect x="3" y="5" width="1" height="8" fill="#7c7c7c"/>
 <rect x="4" y="5" width="7" height="7" fill="#fff"/>
 <rect x="11" y="5" width="1" height="8" fill="#aaaaaa"/>
 <rect x="12" y="6" width="1" height="2" fill="#7c7c7c"/>
 <rect x="13" y="5" width="1" height="8" fill="#aaaaaa"/>
 <rect x="4" y="12" width="10" height="1" fill="#aaaaaa"/>
 <path d="M5 7 L7.6 9 L5 11 Z" fill="#959595"/>
 <rect x="8" y="6" width="2.2" height="1" fill="#959595"/>
 <rect x="8" y="8" width="2.2" height="1" fill="#959595"/>
 <rect x="8" y="10" width="2.2" height="1" fill="#959595"/>
</g>
<rect x="689" y="223" width="77" height="16" fill="#6f8db0" rx="1.5"/>
<rect x="689" y="223" width="76" height="15" fill="#b9b8be" rx="1.5"/>
<rect x="690" y="224" width="75" height="14" fill="#c6c3c7" />
<svg x="690" y="224" width="75" height="13.5" overflow="hidden">
<text x="37.3" y="11.6" font-size="11" fill="#ffffff" text-anchor="middle" textLength="28" lengthAdjust="spacingAndGlyphs" >Druck</text>
<text x="36.3" y="10.6" font-size="11" fill="#5d80aa" text-anchor="middle" textLength="28" lengthAdjust="spacingAndGlyphs" >Druck</text>
</svg>
<rect x="769" y="223" width="77" height="16" fill="#6f8db0" rx="1.5"/>
<rect x="769" y="223" width="76" height="15" fill="#b9b8be" rx="1.5"/>
<rect x="770" y="224" width="75" height="14" fill="#c6c3c7" />
<svg x="770" y="224" width="75" height="13.5" overflow="hidden">
<text x="37.3" y="11.6" font-size="11" fill="#ffffff" text-anchor="middle" textLength="64" lengthAdjust="spacingAndGlyphs" >ProdNr Regel</text>
<text x="36.3" y="10.6" font-size="11" fill="#5d80aa" text-anchor="middle" textLength="64" lengthAdjust="spacingAndGlyphs" >ProdNr Regel</text>
</svg>
<rect x="849" y="223" width="77" height="16" fill="#6f8db0" rx="1.5"/>
<rect x="849" y="223" width="76" height="15" fill="#b9b8be" rx="1.5"/>
<rect x="850" y="224" width="75" height="14" fill="#c6c3c7" />
<svg x="850" y="224" width="75" height="13.5" overflow="hidden">
<text x="37.3" y="11.6" font-size="11" fill="#ffffff" text-anchor="middle" textLength="69.7" lengthAdjust="spacingAndGlyphs" >Relev.Merkmal</text>
<text x="36.3" y="10.6" font-size="11" fill="#5d80aa" text-anchor="middle" textLength="69.7" lengthAdjust="spacingAndGlyphs" >Relev.Merkmal</text>
</svg>
<rect x="960.5" y="82.5" width="14" height="156" rx="7.0" fill="#cbcbcd" stroke="#8a9cb2" stroke-width="1"/>
<rect x="961" y="96" width="13" height="1" fill="#6f8db0" />
<rect x="961" y="97" width="13" height="1" fill="#ffffff" />
<rect x="961" y="223" width="13" height="1" fill="#ffffff" />
<rect x="961" y="224" width="13" height="1" fill="#6f8db0" />
<path d="M963.8 91.5 L971.2 91.5 L967.5 87.5 Z" fill="#5b7696"/>
<path d="M963.8 229.5 L971.2 229.5 L967.5 233.5 Z" fill="#5b7696"/>
<rect x="969" y="140.5" width="2" height="2" fill="#ffffff" />
<rect x="970" y="141.5" width="1" height="1" fill="#8fa0b4" />
<rect x="964" y="144.4" width="2" height="2" fill="#ffffff" />
<rect x="965" y="145.4" width="1" height="1" fill="#8fa0b4" />
<rect x="969" y="148.3" width="2" height="2" fill="#ffffff" />
<rect x="970" y="149.3" width="1" height="1" fill="#8fa0b4" />
<rect x="964" y="152.20000000000002" width="2" height="2" fill="#ffffff" />
<rect x="965" y="153.20000000000002" width="1" height="1" fill="#8fa0b4" />
<rect x="969" y="156.10000000000002" width="2" height="2" fill="#ffffff" />
<rect x="970" y="157.10000000000002" width="1" height="1" fill="#8fa0b4" />
<rect x="964" y="160.00000000000003" width="2" height="2" fill="#ffffff" />
<rect x="965" y="161.00000000000003" width="1" height="1" fill="#8fa0b4" />
<rect x="969" y="163.90000000000003" width="2" height="2" fill="#ffffff" />
<rect x="970" y="164.90000000000003" width="1" height="1" fill="#8fa0b4" />
<rect x="964" y="167.80000000000004" width="2" height="2" fill="#ffffff" />
<rect x="965" y="168.80000000000004" width="1" height="1" fill="#8fa0b4" />
<rect x="969" y="171.70000000000005" width="2" height="2" fill="#ffffff" />
<rect x="970" y="172.70000000000005" width="1" height="1" fill="#8fa0b4" />
<rect x="99.5" y="102.5" width="297" height="18" fill="none" stroke="#e8141c" stroke-width="3"/>
<rect x="10.5" y="245.5" width="700" height="36" rx="9" fill="none" stroke="#000" stroke-width="1"/>
<text x="25.7" y="266" font-size="11" fill="#000" text-anchor="start" >Erfassung</text>
<rect x="84" y="254" width="118" height="18" fill="#eeeaee" />
<rect x="86" y="271" width="116" height="1" fill="#c6c6c6" />
<rect x="201" y="256" width="1" height="16" fill="#c6c6c6" />
<rect x="85" y="254" width="116" height="1" fill="#95a6b9" />
<rect x="85" y="255" width="116" height="1" fill="#587392" />
<rect x="84" y="255" width="1" height="16" fill="#95a6b9" />
<rect x="85" y="255" width="1" height="16" fill="#587392" />
<svg x="86" y="254" width="115" height="18" overflow="hidden">
<text x="0.5" y="14" font-size="11" fill="#000" text-anchor="start" textLength="84" lengthAdjust="spacingAndGlyphs" >04.06.2021 11:09</text>
</svg>
<rect x="203" y="254" width="132" height="18" fill="#eeeaee" />
<rect x="205" y="271" width="130" height="1" fill="#c6c6c6" />
<rect x="334" y="256" width="1" height="16" fill="#c6c6c6" />
<rect x="204" y="254" width="130" height="1" fill="#95a6b9" />
<rect x="204" y="255" width="130" height="1" fill="#587392" />
<rect x="203" y="255" width="1" height="16" fill="#95a6b9" />
<rect x="204" y="255" width="1" height="16" fill="#587392" />
<svg x="205" y="254" width="129" height="18" overflow="hidden">
<text x="0.5" y="14" font-size="10.6" fill="#000" text-anchor="start" textLength="37.5" lengthAdjust="spacingAndGlyphs" >REFLEX</text>
</svg>
<text x="380" y="266" font-size="11" fill="#000" text-anchor="start" textLength="47.8" lengthAdjust="spacingAndGlyphs" >Änderung</text>
<rect x="436" y="254" width="118" height="18" fill="#eeeaee" />
<rect x="438" y="271" width="116" height="1" fill="#c6c6c6" />
<rect x="553" y="256" width="1" height="16" fill="#c6c6c6" />
<rect x="437" y="254" width="116" height="1" fill="#95a6b9" />
<rect x="437" y="255" width="116" height="1" fill="#587392" />
<rect x="436" y="255" width="1" height="16" fill="#95a6b9" />
<rect x="437" y="255" width="1" height="16" fill="#587392" />
<svg x="438" y="254" width="115" height="18" overflow="hidden">
<text x="0.5" y="14" font-size="11" fill="#000" text-anchor="start" textLength="84" lengthAdjust="spacingAndGlyphs" >04.06.2021 11:16</text>
</svg>
<rect x="555" y="254" width="132" height="18" fill="#eeeaee" />
<rect x="557" y="271" width="130" height="1" fill="#c6c6c6" />
<rect x="686" y="256" width="1" height="16" fill="#c6c6c6" />
<rect x="556" y="254" width="130" height="1" fill="#95a6b9" />
<rect x="556" y="255" width="130" height="1" fill="#587392" />
<rect x="555" y="255" width="1" height="16" fill="#95a6b9" />
<rect x="556" y="255" width="1" height="16" fill="#587392" />
<svg x="557" y="254" width="129" height="18" overflow="hidden">
<text x="0.5" y="14" font-size="10.6" fill="#000" text-anchor="start" textLength="37.5" lengthAdjust="spacingAndGlyphs" >REFLEX</text>
</svg>
<rect x="838" y="255" width="88" height="18" fill="#6f8db0" rx="1.5"/>
<rect x="838" y="255" width="87" height="17" fill="#b9b8be" rx="1.5"/>
<rect x="839" y="256" width="86" height="16" fill="#c6c3c7" />
<svg x="839" y="256" width="86" height="15.5" overflow="hidden">
<text x="41.8" y="10.6" font-size="11" fill="#000" text-anchor="middle" textLength="43.5" lengthAdjust="spacingAndGlyphs" >Kopieren</text>
</svg>
<text x="16" y="318" font-size="11" fill="#000" text-anchor="start" textLength="44.5" lengthAdjust="spacingAndGlyphs" >Abteilung</text>
<text x="147.7" y="318" font-size="11" fill="#000" text-anchor="start" textLength="83" lengthAdjust="spacingAndGlyphs" >Produktionsstätte</text>
<text x="279.5" y="318" font-size="11" fill="#000" text-anchor="start" textLength="60.8" lengthAdjust="spacingAndGlyphs" >Materiallager</text>
<text x="445.2" y="318" font-size="11" fill="#000" text-anchor="start" textLength="88.8" lengthAdjust="spacingAndGlyphs" >Halbfabrikat-Lager</text>
<text x="610.4" y="318" font-size="11" fill="#000" text-anchor="start" textLength="92.4" lengthAdjust="spacingAndGlyphs" >Folgende Abteilung</text>
<text x="723.3" y="303" font-size="11" fill="#000" text-anchor="start" textLength="52" lengthAdjust="spacingAndGlyphs" >Vorlaufzeit</text>
<text x="735.6" y="318" font-size="11" fill="#000" text-anchor="start" textLength="26" lengthAdjust="spacingAndGlyphs" >(Tag)</text>
<text x="784.7" y="303" font-size="11" fill="#000" text-anchor="start" textLength="28.3" lengthAdjust="spacingAndGlyphs" >Koop.</text>
<text x="782.1" y="318" font-size="11" fill="#000" text-anchor="start" textLength="34.8" lengthAdjust="spacingAndGlyphs" >Bestell.</text>
<rect x="16" y="328" width="33" height="17" fill="#e7ffff" />
<rect x="18" y="344" width="31" height="1" fill="#c6c6c6" />
<rect x="48" y="330" width="1" height="15" fill="#c6c6c6" />
<rect x="17" y="328" width="31" height="1" fill="#95a6b9" />
<rect x="17" y="329" width="31" height="1" fill="#587392" />
<rect x="16" y="329" width="1" height="15" fill="#95a6b9" />
<rect x="17" y="329" width="1" height="15" fill="#587392" />
<rect x="19" y="330" width="12" height="14" fill="#0000ff" />
<text x="19.3" y="342" font-size="11" fill="#fff" text-anchor="start" >10</text>
<rect x="50" y="328" width="79" height="17" fill="#e7ffff" />
<rect x="52" y="344" width="77" height="1" fill="#c6c6c6" />
<rect x="128" y="330" width="1" height="15" fill="#c6c6c6" />
<rect x="51" y="328" width="77" height="1" fill="#95a6b9" />
<rect x="51" y="329" width="77" height="1" fill="#587392" />
<rect x="50" y="329" width="1" height="15" fill="#95a6b9" />
<rect x="51" y="329" width="1" height="15" fill="#587392" />
<svg x="52" y="328" width="76" height="17" overflow="hidden">
<text x="0.5" y="14" font-size="10.6" fill="#000" text-anchor="start" >GESTB</text>
</svg>
<g transform="translate(132,330)">
 <rect x="0" y="0" width="15" height="16" rx="1.5" fill="#5f7a99"/>
 <rect x="0" y="0" width="14" height="15" rx="1.5" fill="#d3cfd3"/>
 <rect x="1" y="1" width="8" height="1" fill="#1e6fa6"/>
 <rect x="9" y="1" width="1" height="1" fill="#000"/>
 <rect x="1" y="1" width="1" height="7.5" fill="#1e6fa6"/>
 <rect x="1.8" y="8" width="1.5" height="1" fill="#000"/>
 <rect x="3" y="3" width="11" height="1" fill="#000"/>
 <rect x="13" y="3" width="1" height="2" fill="#000"/>
 <rect x="3" y="4" width="10" height="1" fill="#1e6fa6"/>
 <rect x="3" y="5" width="1" height="8" fill="#000"/>
 <rect x="4" y="5" width="7" height="7" fill="#fff"/>
 <rect x="11" y="5" width="1" height="8" fill="#1e6fa6"/>
 <rect x="12" y="5" width="1" height="7" fill="#f4f8fc"/>
 <rect x="12" y="6" width="1" height="2" fill="#000"/>
 <rect x="13" y="5" width="1" height="8" fill="#1e6fa6"/>
 <rect x="4" y="12" width="10" height="1" fill="#1e6fa6"/>
 <path d="M5 7 L7.6 9 L5 11 Z" fill="#0a14ff"/>
 <rect x="8" y="6" width="2.2" height="1" fill="#ff0a0a"/>
 <rect x="8" y="8" width="2.2" height="1" fill="#ff0a0a"/>
 <rect x="8" y="10" width="2.2" height="1" fill="#ff0a0a"/>
</g>
<rect x="148" y="328" width="33" height="17" fill="#e7ffff" />
<rect x="150" y="344" width="31" height="1" fill="#c6c6c6" />
<rect x="180" y="330" width="1" height="15" fill="#c6c6c6" />
<rect x="149" y="328" width="31" height="1" fill="#95a6b9" />
<rect x="149" y="329" width="31" height="1" fill="#587392" />
<rect x="148" y="329" width="1" height="15" fill="#95a6b9" />
<rect x="149" y="329" width="1" height="15" fill="#587392" />
<svg x="150" y="328" width="30" height="17" overflow="hidden">
<text x="0.5" y="14" font-size="11" fill="#000" text-anchor="start" >10</text>
</svg>
<rect x="182" y="328" width="79" height="17" fill="#e7ffff" />
<rect x="184" y="344" width="77" height="1" fill="#c6c6c6" />
<rect x="260" y="330" width="1" height="15" fill="#c6c6c6" />
<rect x="183" y="328" width="77" height="1" fill="#95a6b9" />
<rect x="183" y="329" width="77" height="1" fill="#587392" />
<rect x="182" y="329" width="1" height="15" fill="#95a6b9" />
<rect x="183" y="329" width="1" height="15" fill="#587392" />
<svg x="184" y="328" width="76" height="17" overflow="hidden">
<text x="0.5" y="14" font-size="10.6" fill="#000" text-anchor="start" textLength="42.5" lengthAdjust="spacingAndGlyphs" >Ungarn 1</text>
</svg>
<g transform="translate(264,330)">
 <rect x="0" y="0" width="15" height="16" rx="1.5" fill="#5f7a99"/>
 <rect x="0" y="0" width="14" height="15" rx="1.5" fill="#d3cfd3"/>
 <rect x="1" y="1" width="8" height="1" fill="#1e6fa6"/>
 <rect x="9" y="1" width="1" height="1" fill="#000"/>
 <rect x="1" y="1" width="1" height="7.5" fill="#1e6fa6"/>
 <rect x="1.8" y="8" width="1.5" height="1" fill="#000"/>
 <rect x="3" y="3" width="11" height="1" fill="#000"/>
 <rect x="13" y="3" width="1" height="2" fill="#000"/>
 <rect x="3" y="4" width="10" height="1" fill="#1e6fa6"/>
 <rect x="3" y="5" width="1" height="8" fill="#000"/>
 <rect x="4" y="5" width="7" height="7" fill="#fff"/>
 <rect x="11" y="5" width="1" height="8" fill="#1e6fa6"/>
 <rect x="12" y="5" width="1" height="7" fill="#f4f8fc"/>
 <rect x="12" y="6" width="1" height="2" fill="#000"/>
 <rect x="13" y="5" width="1" height="8" fill="#1e6fa6"/>
 <rect x="4" y="12" width="10" height="1" fill="#1e6fa6"/>
 <path d="M5 7 L7.6 9 L5 11 Z" fill="#0a14ff"/>
 <rect x="8" y="6" width="2.2" height="1" fill="#ff0a0a"/>
 <rect x="8" y="8" width="2.2" height="1" fill="#ff0a0a"/>
 <rect x="8" y="10" width="2.2" height="1" fill="#ff0a0a"/>
</g>
<rect x="281" y="328" width="25" height="17" fill="#e7ffff" />
<rect x="283" y="344" width="23" height="1" fill="#c6c6c6" />
<rect x="305" y="330" width="1" height="15" fill="#c6c6c6" />
<rect x="282" y="328" width="23" height="1" fill="#95a6b9" />
<rect x="282" y="329" width="23" height="1" fill="#587392" />
<rect x="281" y="329" width="1" height="15" fill="#95a6b9" />
<rect x="282" y="329" width="1" height="15" fill="#587392" />
<svg x="283" y="328" width="22" height="17" overflow="hidden">
<text x="0.5" y="14" font-size="11" fill="#000" text-anchor="start" >6</text>
</svg>
<rect x="307" y="328" width="119" height="17" fill="#e7ffff" />
<rect x="309" y="344" width="117" height="1" fill="#c6c6c6" />
<rect x="425" y="330" width="1" height="15" fill="#c6c6c6" />
<rect x="308" y="328" width="117" height="1" fill="#95a6b9" />
<rect x="308" y="329" width="117" height="1" fill="#587392" />
<rect x="307" y="329" width="1" height="15" fill="#95a6b9" />
<rect x="308" y="329" width="1" height="15" fill="#587392" />
<svg x="309" y="328" width="116" height="17" overflow="hidden">
<text x="0.5" y="14" font-size="10.6" fill="#000" text-anchor="start" >Lindemann</text>
</svg>
<g transform="translate(430,330)">
 <rect x="0" y="0" width="15" height="16" rx="1.5" fill="#5f7a99"/>
 <rect x="0" y="0" width="14" height="15" rx="1.5" fill="#d3cfd3"/>
 <rect x="1" y="1" width="8" height="1" fill="#1e6fa6"/>
 <rect x="9" y="1" width="1" height="1" fill="#000"/>
 <rect x="1" y="1" width="1" height="7.5" fill="#1e6fa6"/>
 <rect x="1.8" y="8" width="1.5" height="1" fill="#000"/>
 <rect x="3" y="3" width="11" height="1" fill="#000"/>
 <rect x="13" y="3" width="1" height="2" fill="#000"/>
 <rect x="3" y="4" width="10" height="1" fill="#1e6fa6"/>
 <rect x="3" y="5" width="1" height="8" fill="#000"/>
 <rect x="4" y="5" width="7" height="7" fill="#fff"/>
 <rect x="11" y="5" width="1" height="8" fill="#1e6fa6"/>
 <rect x="12" y="5" width="1" height="7" fill="#f4f8fc"/>
 <rect x="12" y="6" width="1" height="2" fill="#000"/>
 <rect x="13" y="5" width="1" height="8" fill="#1e6fa6"/>
 <rect x="4" y="12" width="10" height="1" fill="#1e6fa6"/>
 <path d="M5 7 L7.6 9 L5 11 Z" fill="#0a14ff"/>
 <rect x="8" y="6" width="2.2" height="1" fill="#ff0a0a"/>
 <rect x="8" y="8" width="2.2" height="1" fill="#ff0a0a"/>
 <rect x="8" y="10" width="2.2" height="1" fill="#ff0a0a"/>
</g>
<rect x="446" y="328" width="25" height="17" fill="#e7ffff" />
<rect x="448" y="344" width="23" height="1" fill="#c6c6c6" />
<rect x="470" y="330" width="1" height="15" fill="#c6c6c6" />
<rect x="447" y="328" width="23" height="1" fill="#95a6b9" />
<rect x="447" y="329" width="23" height="1" fill="#587392" />
<rect x="446" y="329" width="1" height="15" fill="#95a6b9" />
<rect x="447" y="329" width="1" height="15" fill="#587392" />
<svg x="448" y="328" width="22" height="17" overflow="hidden">
<text x="0.5" y="14" font-size="11" fill="#000" text-anchor="start" >2</text>
</svg>
<rect x="472" y="328" width="119" height="17" fill="#e7ffff" />
<rect x="474" y="344" width="117" height="1" fill="#c6c6c6" />
<rect x="590" y="330" width="1" height="15" fill="#c6c6c6" />
<rect x="473" y="328" width="117" height="1" fill="#95a6b9" />
<rect x="473" y="329" width="117" height="1" fill="#587392" />
<rect x="472" y="329" width="1" height="15" fill="#95a6b9" />
<rect x="473" y="329" width="1" height="15" fill="#587392" />
<svg x="474" y="328" width="116" height="17" overflow="hidden">
<text x="0.5" y="14" font-size="10.6" fill="#000" text-anchor="start" textLength="114.5" lengthAdjust="spacingAndGlyphs" >Zentrallager BT Leuchte</text>
</svg>
<g transform="translate(594,330)">
 <rect x="0" y="0" width="15" height="16" rx="1.5" fill="#5f7a99"/>
 <rect x="0" y="0" width="14" height="15" rx="1.5" fill="#d3cfd3"/>
 <rect x="1" y="1" width="8" height="1" fill="#1e6fa6"/>
 <rect x="9" y="1" width="1" height="1" fill="#000"/>
 <rect x="1" y="1" width="1" height="7.5" fill="#1e6fa6"/>
 <rect x="1.8" y="8" width="1.5" height="1" fill="#000"/>
 <rect x="3" y="3" width="11" height="1" fill="#000"/>
 <rect x="13" y="3" width="1" height="2" fill="#000"/>
 <rect x="3" y="4" width="10" height="1" fill="#1e6fa6"/>
 <rect x="3" y="5" width="1" height="8" fill="#000"/>
 <rect x="4" y="5" width="7" height="7" fill="#fff"/>
 <rect x="11" y="5" width="1" height="8" fill="#1e6fa6"/>
 <rect x="12" y="5" width="1" height="7" fill="#f4f8fc"/>
 <rect x="12" y="6" width="1" height="2" fill="#000"/>
 <rect x="13" y="5" width="1" height="8" fill="#1e6fa6"/>
 <rect x="4" y="12" width="10" height="1" fill="#1e6fa6"/>
 <path d="M5 7 L7.6 9 L5 11 Z" fill="#0a14ff"/>
 <rect x="8" y="6" width="2.2" height="1" fill="#ff0a0a"/>
 <rect x="8" y="8" width="2.2" height="1" fill="#ff0a0a"/>
 <rect x="8" y="10" width="2.2" height="1" fill="#ff0a0a"/>
</g>
<rect x="612" y="328" width="25" height="17" fill="#e7ffff" />
<rect x="614" y="344" width="23" height="1" fill="#c6c6c6" />
<rect x="636" y="330" width="1" height="15" fill="#c6c6c6" />
<rect x="613" y="328" width="23" height="1" fill="#95a6b9" />
<rect x="613" y="329" width="23" height="1" fill="#587392" />
<rect x="612" y="329" width="1" height="15" fill="#95a6b9" />
<rect x="613" y="329" width="1" height="15" fill="#587392" />
<svg x="614" y="328" width="22" height="17" overflow="hidden">
<text x="0.5" y="14" font-size="11" fill="#000" text-anchor="start" >40</text>
</svg>
<rect x="638" y="328" width="79" height="17" fill="#e7ffff" />
<rect x="640" y="344" width="77" height="1" fill="#c6c6c6" />
<rect x="716" y="330" width="1" height="15" fill="#c6c6c6" />
<rect x="639" y="328" width="77" height="1" fill="#95a6b9" />
<rect x="639" y="329" width="77" height="1" fill="#587392" />
<rect x="638" y="329" width="1" height="15" fill="#95a6b9" />
<rect x="639" y="329" width="1" height="15" fill="#587392" />
<svg x="640" y="328" width="76" height="17" overflow="hidden">
<text x="0.5" y="14" font-size="10.6" fill="#000" text-anchor="start" >WPOLS</text>
</svg>
<g transform="translate(720,330)">
 <rect x="0" y="0" width="15" height="16" rx="1.5" fill="#5f7a99"/>
 <rect x="0" y="0" width="14" height="15" rx="1.5" fill="#d3cfd3"/>
 <rect x="1" y="1" width="8" height="1" fill="#1e6fa6"/>
 <rect x="9" y="1" width="1" height="1" fill="#000"/>
 <rect x="1" y="1" width="1" height="7.5" fill="#1e6fa6"/>
 <rect x="1.8" y="8" width="1.5" height="1" fill="#000"/>
 <rect x="3" y="3" width="11" height="1" fill="#000"/>
 <rect x="13" y="3" width="1" height="2" fill="#000"/>
 <rect x="3" y="4" width="10" height="1" fill="#1e6fa6"/>
 <rect x="3" y="5" width="1" height="8" fill="#000"/>
 <rect x="4" y="5" width="7" height="7" fill="#fff"/>
 <rect x="11" y="5" width="1" height="8" fill="#1e6fa6"/>
 <rect x="12" y="5" width="1" height="7" fill="#f4f8fc"/>
 <rect x="12" y="6" width="1" height="2" fill="#000"/>
 <rect x="13" y="5" width="1" height="8" fill="#1e6fa6"/>
 <rect x="4" y="12" width="10" height="1" fill="#1e6fa6"/>
 <path d="M5 7 L7.6 9 L5 11 Z" fill="#0a14ff"/>
 <rect x="8" y="6" width="2.2" height="1" fill="#ff0a0a"/>
 <rect x="8" y="8" width="2.2" height="1" fill="#ff0a0a"/>
 <rect x="8" y="10" width="2.2" height="1" fill="#ff0a0a"/>
</g>
<rect x="737" y="328" width="25" height="17" fill="#e7ffff" />
<rect x="739" y="344" width="23" height="1" fill="#c6c6c6" />
<rect x="761" y="330" width="1" height="15" fill="#c6c6c6" />
<rect x="738" y="328" width="23" height="1" fill="#95a6b9" />
<rect x="738" y="329" width="23" height="1" fill="#587392" />
<rect x="737" y="329" width="1" height="15" fill="#95a6b9" />
<rect x="738" y="329" width="1" height="15" fill="#587392" />
<svg x="739" y="328" width="22" height="17" overflow="hidden">
<text x="20" y="14" font-size="11" fill="#000" text-anchor="end" >0</text>
</svg>
<rect x="790" y="328" width="17" height="17" fill="#e7ffff" />
<rect x="800" y="331" width="1" height="11" fill="#fff" />
<rect x="790" y="341" width="11" height="1" fill="#fff" />
<rect x="790" y="331" width="11" height="1.2" fill="#24344a" />
<rect x="790" y="331" width="1.2" height="11" fill="#24344a" />
<rect x="825" y="330" width="88" height="15" fill="#6f8db0" rx="1.5"/>
<rect x="825" y="330" width="87" height="14" fill="#b9b8be" rx="1.5"/>
<rect x="826" y="331" width="86" height="13" fill="#c6c3c7" />
<svg x="826" y="331" width="86" height="12.5" overflow="hidden">
<text x="41.8" y="10.6" font-size="11" fill="#000" text-anchor="middle" textLength="77.5" lengthAdjust="spacingAndGlyphs" >Bedarfsprüfung</text>
</svg>
<rect x="16" y="346" width="33" height="18" fill="#fff" />
<rect x="18" y="363" width="31" height="1" fill="#c6c6c6" />
<rect x="48" y="348" width="1" height="16" fill="#c6c6c6" />
<rect x="17" y="346" width="31" height="1" fill="#95a6b9" />
<rect x="17" y="347" width="31" height="1" fill="#587392" />
<rect x="16" y="347" width="1" height="16" fill="#95a6b9" />
<rect x="17" y="347" width="1" height="16" fill="#587392" />
<svg x="18" y="346" width="30" height="18" overflow="hidden">
<text x="0.5" y="14" font-size="11" fill="#000" text-anchor="start" >20</text>
</svg>
<rect x="50" y="346" width="79" height="18" fill="#fff" />
<rect x="52" y="363" width="77" height="1" fill="#c6c6c6" />
<rect x="128" y="348" width="1" height="16" fill="#c6c6c6" />
<rect x="51" y="346" width="77" height="1" fill="#95a6b9" />
<rect x="51" y="347" width="77" height="1" fill="#587392" />
<rect x="50" y="347" width="1" height="16" fill="#95a6b9" />
<rect x="51" y="347" width="1" height="16" fill="#587392" />
<svg x="52" y="346" width="76" height="18" overflow="hidden">
<text x="0.5" y="14" font-size="10.6" fill="#000" text-anchor="start" >ZUSCH</text>
</svg>
<g transform="translate(132,348)">
 <rect x="0" y="0" width="15" height="16" rx="1.5" fill="#5f7a99"/>
 <rect x="0" y="0" width="14" height="15" rx="1.5" fill="#d3cfd3"/>
 <rect x="1" y="1" width="8" height="1" fill="#1e6fa6"/>
 <rect x="9" y="1" width="1" height="1" fill="#000"/>
 <rect x="1" y="1" width="1" height="7.5" fill="#1e6fa6"/>
 <rect x="1.8" y="8" width="1.5" height="1" fill="#000"/>
 <rect x="3" y="3" width="11" height="1" fill="#000"/>
 <rect x="13" y="3" width="1" height="2" fill="#000"/>
 <rect x="3" y="4" width="10" height="1" fill="#1e6fa6"/>
 <rect x="3" y="5" width="1" height="8" fill="#000"/>
 <rect x="4" y="5" width="7" height="7" fill="#fff"/>
 <rect x="11" y="5" width="1" height="8" fill="#1e6fa6"/>
 <rect x="12" y="5" width="1" height="7" fill="#f4f8fc"/>
 <rect x="12" y="6" width="1" height="2" fill="#000"/>
 <rect x="13" y="5" width="1" height="8" fill="#1e6fa6"/>
 <rect x="4" y="12" width="10" height="1" fill="#1e6fa6"/>
 <path d="M5 7 L7.6 9 L5 11 Z" fill="#0a14ff"/>
 <rect x="8" y="6" width="2.2" height="1" fill="#ff0a0a"/>
 <rect x="8" y="8" width="2.2" height="1" fill="#ff0a0a"/>
 <rect x="8" y="10" width="2.2" height="1" fill="#ff0a0a"/>
</g>
<rect x="148" y="346" width="33" height="18" fill="#fff" />
<rect x="150" y="363" width="31" height="1" fill="#c6c6c6" />
<rect x="180" y="348" width="1" height="16" fill="#c6c6c6" />
<rect x="149" y="346" width="31" height="1" fill="#95a6b9" />
<rect x="149" y="347" width="31" height="1" fill="#587392" />
<rect x="148" y="347" width="1" height="16" fill="#95a6b9" />
<rect x="149" y="347" width="1" height="16" fill="#587392" />
<svg x="150" y="346" width="30" height="18" overflow="hidden">
<text x="0.5" y="14" font-size="11" fill="#000" text-anchor="start" >10</text>
</svg>
<rect x="182" y="346" width="79" height="18" fill="#fff" />
<rect x="184" y="363" width="77" height="1" fill="#c6c6c6" />
<rect x="260" y="348" width="1" height="16" fill="#c6c6c6" />
<rect x="183" y="346" width="77" height="1" fill="#95a6b9" />
<rect x="183" y="347" width="77" height="1" fill="#587392" />
<rect x="182" y="347" width="1" height="16" fill="#95a6b9" />
<rect x="183" y="347" width="1" height="16" fill="#587392" />
<svg x="184" y="346" width="76" height="18" overflow="hidden">
<text x="0.5" y="14" font-size="10.6" fill="#000" text-anchor="start" textLength="42.5" lengthAdjust="spacingAndGlyphs" >Ungarn 1</text>
</svg>
<g transform="translate(264,348)">
 <rect x="0" y="0" width="15" height="16" rx="1.5" fill="#5f7a99"/>
 <rect x="0" y="0" width="14" height="15" rx="1.5" fill="#d3cfd3"/>
 <rect x="1" y="1" width="8" height="1" fill="#1e6fa6"/>
 <rect x="9" y="1" width="1" height="1" fill="#000"/>
 <rect x="1" y="1" width="1" height="7.5" fill="#1e6fa6"/>
 <rect x="1.8" y="8" width="1.5" height="1" fill="#000"/>
 <rect x="3" y="3" width="11" height="1" fill="#000"/>
 <rect x="13" y="3" width="1" height="2" fill="#000"/>
 <rect x="3" y="4" width="10" height="1" fill="#1e6fa6"/>
 <rect x="3" y="5" width="1" height="8" fill="#000"/>
 <rect x="4" y="5" width="7" height="7" fill="#fff"/>
 <rect x="11" y="5" width="1" height="8" fill="#1e6fa6"/>
 <rect x="12" y="5" width="1" height="7" fill="#f4f8fc"/>
 <rect x="12" y="6" width="1" height="2" fill="#000"/>
 <rect x="13" y="5" width="1" height="8" fill="#1e6fa6"/>
 <rect x="4" y="12" width="10" height="1" fill="#1e6fa6"/>
 <path d="M5 7 L7.6 9 L5 11 Z" fill="#0a14ff"/>
 <rect x="8" y="6" width="2.2" height="1" fill="#ff0a0a"/>
 <rect x="8" y="8" width="2.2" height="1" fill="#ff0a0a"/>
 <rect x="8" y="10" width="2.2" height="1" fill="#ff0a0a"/>
</g>
<rect x="281" y="346" width="25" height="18" fill="#fff" />
<rect x="283" y="363" width="23" height="1" fill="#c6c6c6" />
<rect x="305" y="348" width="1" height="16" fill="#c6c6c6" />
<rect x="282" y="346" width="23" height="1" fill="#95a6b9" />
<rect x="282" y="347" width="23" height="1" fill="#587392" />
<rect x="281" y="347" width="1" height="16" fill="#95a6b9" />
<rect x="282" y="347" width="1" height="16" fill="#587392" />
<svg x="283" y="346" width="22" height="18" overflow="hidden">
<text x="0.5" y="14" font-size="11" fill="#000" text-anchor="start" >6</text>
</svg>
<rect x="307" y="346" width="119" height="18" fill="#fff" />
<rect x="309" y="363" width="117" height="1" fill="#c6c6c6" />
<rect x="425" y="348" width="1" height="16" fill="#c6c6c6" />
<rect x="308" y="346" width="117" height="1" fill="#95a6b9" />
<rect x="308" y="347" width="117" height="1" fill="#587392" />
<rect x="307" y="347" width="1" height="16" fill="#95a6b9" />
<rect x="308" y="347" width="1" height="16" fill="#587392" />
<svg x="309" y="346" width="116" height="18" overflow="hidden">
<text x="0.5" y="14" font-size="10.6" fill="#000" text-anchor="start" >Lindemann</text>
</svg>
<g transform="translate(430,348)">
 <rect x="0" y="0" width="15" height="16" rx="1.5" fill="#5f7a99"/>
 <rect x="0" y="0" width="14" height="15" rx="1.5" fill="#d3cfd3"/>
 <rect x="1" y="1" width="8" height="1" fill="#1e6fa6"/>
 <rect x="9" y="1" width="1" height="1" fill="#000"/>
 <rect x="1" y="1" width="1" height="7.5" fill="#1e6fa6"/>
 <rect x="1.8" y="8" width="1.5" height="1" fill="#000"/>
 <rect x="3" y="3" width="11" height="1" fill="#000"/>
 <rect x="13" y="3" width="1" height="2" fill="#000"/>
 <rect x="3" y="4" width="10" height="1" fill="#1e6fa6"/>
 <rect x="3" y="5" width="1" height="8" fill="#000"/>
 <rect x="4" y="5" width="7" height="7" fill="#fff"/>
 <rect x="11" y="5" width="1" height="8" fill="#1e6fa6"/>
 <rect x="12" y="5" width="1" height="7" fill="#f4f8fc"/>
 <rect x="12" y="6" width="1" height="2" fill="#000"/>
 <rect x="13" y="5" width="1" height="8" fill="#1e6fa6"/>
 <rect x="4" y="12" width="10" height="1" fill="#1e6fa6"/>
 <path d="M5 7 L7.6 9 L5 11 Z" fill="#0a14ff"/>
 <rect x="8" y="6" width="2.2" height="1" fill="#ff0a0a"/>
 <rect x="8" y="8" width="2.2" height="1" fill="#ff0a0a"/>
 <rect x="8" y="10" width="2.2" height="1" fill="#ff0a0a"/>
</g>
<rect x="446" y="346" width="25" height="18" fill="#fff" />
<rect x="448" y="363" width="23" height="1" fill="#c6c6c6" />
<rect x="470" y="348" width="1" height="16" fill="#c6c6c6" />
<rect x="447" y="346" width="23" height="1" fill="#95a6b9" />
<rect x="447" y="347" width="23" height="1" fill="#587392" />
<rect x="446" y="347" width="1" height="16" fill="#95a6b9" />
<rect x="447" y="347" width="1" height="16" fill="#587392" />
<svg x="448" y="346" width="22" height="18" overflow="hidden">
<text x="0.5" y="14" font-size="11" fill="#000" text-anchor="start" >2</text>
</svg>
<rect x="472" y="346" width="119" height="18" fill="#fff" />
<rect x="474" y="363" width="117" height="1" fill="#c6c6c6" />
<rect x="590" y="348" width="1" height="16" fill="#c6c6c6" />
<rect x="473" y="346" width="117" height="1" fill="#95a6b9" />
<rect x="473" y="347" width="117" height="1" fill="#587392" />
<rect x="472" y="347" width="1" height="16" fill="#95a6b9" />
<rect x="473" y="347" width="1" height="16" fill="#587392" />
<svg x="474" y="346" width="116" height="18" overflow="hidden">
<text x="0.5" y="14" font-size="10.6" fill="#000" text-anchor="start" textLength="114.5" lengthAdjust="spacingAndGlyphs" >Zentrallager BT Leuchte</text>
</svg>
<g transform="translate(594,348)">
 <rect x="0" y="0" width="15" height="16" rx="1.5" fill="#5f7a99"/>
 <rect x="0" y="0" width="14" height="15" rx="1.5" fill="#d3cfd3"/>
 <rect x="1" y="1" width="8" height="1" fill="#1e6fa6"/>
 <rect x="9" y="1" width="1" height="1" fill="#000"/>
 <rect x="1" y="1" width="1" height="7.5" fill="#1e6fa6"/>
 <rect x="1.8" y="8" width="1.5" height="1" fill="#000"/>
 <rect x="3" y="3" width="11" height="1" fill="#000"/>
 <rect x="13" y="3" width="1" height="2" fill="#000"/>
 <rect x="3" y="4" width="10" height="1" fill="#1e6fa6"/>
 <rect x="3" y="5" width="1" height="8" fill="#000"/>
 <rect x="4" y="5" width="7" height="7" fill="#fff"/>
 <rect x="11" y="5" width="1" height="8" fill="#1e6fa6"/>
 <rect x="12" y="5" width="1" height="7" fill="#f4f8fc"/>
 <rect x="12" y="6" width="1" height="2" fill="#000"/>
 <rect x="13" y="5" width="1" height="8" fill="#1e6fa6"/>
 <rect x="4" y="12" width="10" height="1" fill="#1e6fa6"/>
 <path d="M5 7 L7.6 9 L5 11 Z" fill="#0a14ff"/>
 <rect x="8" y="6" width="2.2" height="1" fill="#ff0a0a"/>
 <rect x="8" y="8" width="2.2" height="1" fill="#ff0a0a"/>
 <rect x="8" y="10" width="2.2" height="1" fill="#ff0a0a"/>
</g>
<rect x="612" y="346" width="25" height="18" fill="#fff" />
<rect x="614" y="363" width="23" height="1" fill="#c6c6c6" />
<rect x="636" y="348" width="1" height="16" fill="#c6c6c6" />
<rect x="613" y="346" width="23" height="1" fill="#95a6b9" />
<rect x="613" y="347" width="23" height="1" fill="#587392" />
<rect x="612" y="347" width="1" height="16" fill="#95a6b9" />
<rect x="613" y="347" width="1" height="16" fill="#587392" />
<svg x="614" y="346" width="22" height="18" overflow="hidden">
<text x="0.5" y="14" font-size="11" fill="#000" text-anchor="start" >30</text>
</svg>
<rect x="638" y="346" width="79" height="18" fill="#fff" />
<rect x="640" y="363" width="77" height="1" fill="#c6c6c6" />
<rect x="716" y="348" width="1" height="16" fill="#c6c6c6" />
<rect x="639" y="346" width="77" height="1" fill="#95a6b9" />
<rect x="639" y="347" width="77" height="1" fill="#587392" />
<rect x="638" y="347" width="1" height="16" fill="#95a6b9" />
<rect x="639" y="347" width="1" height="16" fill="#587392" />
<svg x="640" y="346" width="76" height="18" overflow="hidden">
<text x="0.5" y="14" font-size="10.6" fill="#000" text-anchor="start" >NAEH</text>
</svg>
<g transform="translate(720,348)">
 <rect x="0" y="0" width="15" height="16" rx="1.5" fill="#5f7a99"/>
 <rect x="0" y="0" width="14" height="15" rx="1.5" fill="#d3cfd3"/>
 <rect x="1" y="1" width="8" height="1" fill="#1e6fa6"/>
 <rect x="9" y="1" width="1" height="1" fill="#000"/>
 <rect x="1" y="1" width="1" height="7.5" fill="#1e6fa6"/>
 <rect x="1.8" y="8" width="1.5" height="1" fill="#000"/>
 <rect x="3" y="3" width="11" height="1" fill="#000"/>
 <rect x="13" y="3" width="1" height="2" fill="#000"/>
 <rect x="3" y="4" width="10" height="1" fill="#1e6fa6"/>
 <rect x="3" y="5" width="1" height="8" fill="#000"/>
 <rect x="4" y="5" width="7" height="7" fill="#fff"/>
 <rect x="11" y="5" width="1" height="8" fill="#1e6fa6"/>
 <rect x="12" y="5" width="1" height="7" fill="#f4f8fc"/>
 <rect x="12" y="6" width="1" height="2" fill="#000"/>
 <rect x="13" y="5" width="1" height="8" fill="#1e6fa6"/>
 <rect x="4" y="12" width="10" height="1" fill="#1e6fa6"/>
 <path d="M5 7 L7.6 9 L5 11 Z" fill="#0a14ff"/>
 <rect x="8" y="6" width="2.2" height="1" fill="#ff0a0a"/>
 <rect x="8" y="8" width="2.2" height="1" fill="#ff0a0a"/>
 <rect x="8" y="10" width="2.2" height="1" fill="#ff0a0a"/>
</g>
<rect x="737" y="346" width="25" height="18" fill="#fff" />
<rect x="739" y="363" width="23" height="1" fill="#c6c6c6" />
<rect x="761" y="348" width="1" height="16" fill="#c6c6c6" />
<rect x="738" y="346" width="23" height="1" fill="#95a6b9" />
<rect x="738" y="347" width="23" height="1" fill="#587392" />
<rect x="737" y="347" width="1" height="16" fill="#95a6b9" />
<rect x="738" y="347" width="1" height="16" fill="#587392" />
<svg x="739" y="346" width="22" height="18" overflow="hidden">
<text x="20" y="14" font-size="11" fill="#000" text-anchor="end" >0</text>
</svg>
<rect x="790" y="349" width="11" height="1.2" fill="#24344a" />
<rect x="790" y="349" width="1.2" height="11" fill="#24344a" />
<rect x="825" y="348" width="88" height="16" fill="#6f8db0" rx="1.5"/>
<rect x="825" y="348" width="87" height="15" fill="#b9b8be" rx="1.5"/>
<rect x="826" y="349" width="86" height="14" fill="#c6c3c7" />
<svg x="826" y="349" width="86" height="13.5" overflow="hidden">
<text x="41.8" y="10.6" font-size="11" fill="#000" text-anchor="middle" textLength="77.5" lengthAdjust="spacingAndGlyphs" >Bedarfsprüfung</text>
</svg>
<rect x="16" y="365" width="33" height="18" fill="#fff" />
<rect x="18" y="382" width="31" height="1" fill="#c6c6c6" />
<rect x="48" y="367" width="1" height="16" fill="#c6c6c6" />
<rect x="17" y="365" width="31" height="1" fill="#95a6b9" />
<rect x="17" y="366" width="31" height="1" fill="#587392" />
<rect x="16" y="366" width="1" height="16" fill="#95a6b9" />
<rect x="17" y="366" width="1" height="16" fill="#587392" />
<svg x="18" y="365" width="30" height="18" overflow="hidden">
<text x="0.5" y="14" font-size="11" fill="#000" text-anchor="start" >30</text>
</svg>
<rect x="50" y="365" width="79" height="18" fill="#fff" />
<rect x="52" y="382" width="77" height="1" fill="#c6c6c6" />
<rect x="128" y="367" width="1" height="16" fill="#c6c6c6" />
<rect x="51" y="365" width="77" height="1" fill="#95a6b9" />
<rect x="51" y="366" width="77" height="1" fill="#587392" />
<rect x="50" y="366" width="1" height="16" fill="#95a6b9" />
<rect x="51" y="366" width="1" height="16" fill="#587392" />
<svg x="52" y="365" width="76" height="18" overflow="hidden">
<text x="0.5" y="14" font-size="10.6" fill="#000" text-anchor="start" >NAEH</text>
</svg>
<g transform="translate(132,367)">
 <rect x="0" y="0" width="15" height="16" rx="1.5" fill="#5f7a99"/>
 <rect x="0" y="0" width="14" height="15" rx="1.5" fill="#d3cfd3"/>
 <rect x="1" y="1" width="8" height="1" fill="#1e6fa6"/>
 <rect x="9" y="1" width="1" height="1" fill="#000"/>
 <rect x="1" y="1" width="1" height="7.5" fill="#1e6fa6"/>
 <rect x="1.8" y="8" width="1.5" height="1" fill="#000"/>
 <rect x="3" y="3" width="11" height="1" fill="#000"/>
 <rect x="13" y="3" width="1" height="2" fill="#000"/>
 <rect x="3" y="4" width="10" height="1" fill="#1e6fa6"/>
 <rect x="3" y="5" width="1" height="8" fill="#000"/>
 <rect x="4" y="5" width="7" height="7" fill="#fff"/>
 <rect x="11" y="5" width="1" height="8" fill="#1e6fa6"/>
 <rect x="12" y="5" width="1" height="7" fill="#f4f8fc"/>
 <rect x="12" y="6" width="1" height="2" fill="#000"/>
 <rect x="13" y="5" width="1" height="8" fill="#1e6fa6"/>
 <rect x="4" y="12" width="10" height="1" fill="#1e6fa6"/>
 <path d="M5 7 L7.6 9 L5 11 Z" fill="#0a14ff"/>
 <rect x="8" y="6" width="2.2" height="1" fill="#ff0a0a"/>
 <rect x="8" y="8" width="2.2" height="1" fill="#ff0a0a"/>
 <rect x="8" y="10" width="2.2" height="1" fill="#ff0a0a"/>
</g>
<rect x="148" y="365" width="33" height="18" fill="#fff" />
<rect x="150" y="382" width="31" height="1" fill="#c6c6c6" />
<rect x="180" y="367" width="1" height="16" fill="#c6c6c6" />
<rect x="149" y="365" width="31" height="1" fill="#95a6b9" />
<rect x="149" y="366" width="31" height="1" fill="#587392" />
<rect x="148" y="366" width="1" height="16" fill="#95a6b9" />
<rect x="149" y="366" width="1" height="16" fill="#587392" />
<svg x="150" y="365" width="30" height="18" overflow="hidden">
<text x="0.5" y="14" font-size="11" fill="#000" text-anchor="start" >10</text>
</svg>
<rect x="182" y="365" width="79" height="18" fill="#fff" />
<rect x="184" y="382" width="77" height="1" fill="#c6c6c6" />
<rect x="260" y="367" width="1" height="16" fill="#c6c6c6" />
<rect x="183" y="365" width="77" height="1" fill="#95a6b9" />
<rect x="183" y="366" width="77" height="1" fill="#587392" />
<rect x="182" y="366" width="1" height="16" fill="#95a6b9" />
<rect x="183" y="366" width="1" height="16" fill="#587392" />
<svg x="184" y="365" width="76" height="18" overflow="hidden">
<text x="0.5" y="14" font-size="10.6" fill="#000" text-anchor="start" textLength="42.5" lengthAdjust="spacingAndGlyphs" >Ungarn 1</text>
</svg>
<g transform="translate(264,367)">
 <rect x="0" y="0" width="15" height="16" rx="1.5" fill="#5f7a99"/>
 <rect x="0" y="0" width="14" height="15" rx="1.5" fill="#d3cfd3"/>
 <rect x="1" y="1" width="8" height="1" fill="#1e6fa6"/>
 <rect x="9" y="1" width="1" height="1" fill="#000"/>
 <rect x="1" y="1" width="1" height="7.5" fill="#1e6fa6"/>
 <rect x="1.8" y="8" width="1.5" height="1" fill="#000"/>
 <rect x="3" y="3" width="11" height="1" fill="#000"/>
 <rect x="13" y="3" width="1" height="2" fill="#000"/>
 <rect x="3" y="4" width="10" height="1" fill="#1e6fa6"/>
 <rect x="3" y="5" width="1" height="8" fill="#000"/>
 <rect x="4" y="5" width="7" height="7" fill="#fff"/>
 <rect x="11" y="5" width="1" height="8" fill="#1e6fa6"/>
 <rect x="12" y="5" width="1" height="7" fill="#f4f8fc"/>
 <rect x="12" y="6" width="1" height="2" fill="#000"/>
 <rect x="13" y="5" width="1" height="8" fill="#1e6fa6"/>
 <rect x="4" y="12" width="10" height="1" fill="#1e6fa6"/>
 <path d="M5 7 L7.6 9 L5 11 Z" fill="#0a14ff"/>
 <rect x="8" y="6" width="2.2" height="1" fill="#ff0a0a"/>
 <rect x="8" y="8" width="2.2" height="1" fill="#ff0a0a"/>
 <rect x="8" y="10" width="2.2" height="1" fill="#ff0a0a"/>
</g>
<rect x="281" y="365" width="25" height="18" fill="#fff" />
<rect x="283" y="382" width="23" height="1" fill="#c6c6c6" />
<rect x="305" y="367" width="1" height="16" fill="#c6c6c6" />
<rect x="282" y="365" width="23" height="1" fill="#95a6b9" />
<rect x="282" y="366" width="23" height="1" fill="#587392" />
<rect x="281" y="366" width="1" height="16" fill="#95a6b9" />
<rect x="282" y="366" width="1" height="16" fill="#587392" />
<svg x="283" y="365" width="22" height="18" overflow="hidden">
<text x="0.5" y="14" font-size="11" fill="#000" text-anchor="start" >6</text>
</svg>
<rect x="307" y="365" width="119" height="18" fill="#fff" />
<rect x="309" y="382" width="117" height="1" fill="#c6c6c6" />
<rect x="425" y="367" width="1" height="16" fill="#c6c6c6" />
<rect x="308" y="365" width="117" height="1" fill="#95a6b9" />
<rect x="308" y="366" width="117" height="1" fill="#587392" />
<rect x="307" y="366" width="1" height="16" fill="#95a6b9" />
<rect x="308" y="366" width="1" height="16" fill="#587392" />
<svg x="309" y="365" width="116" height="18" overflow="hidden">
<text x="0.5" y="14" font-size="10.6" fill="#000" text-anchor="start" >Lindemann</text>
</svg>
<g transform="translate(430,367)">
 <rect x="0" y="0" width="15" height="16" rx="1.5" fill="#5f7a99"/>
 <rect x="0" y="0" width="14" height="15" rx="1.5" fill="#d3cfd3"/>
 <rect x="1" y="1" width="8" height="1" fill="#1e6fa6"/>
 <rect x="9" y="1" width="1" height="1" fill="#000"/>
 <rect x="1" y="1" width="1" height="7.5" fill="#1e6fa6"/>
 <rect x="1.8" y="8" width="1.5" height="1" fill="#000"/>
 <rect x="3" y="3" width="11" height="1" fill="#000"/>
 <rect x="13" y="3" width="1" height="2" fill="#000"/>
 <rect x="3" y="4" width="10" height="1" fill="#1e6fa6"/>
 <rect x="3" y="5" width="1" height="8" fill="#000"/>
 <rect x="4" y="5" width="7" height="7" fill="#fff"/>
 <rect x="11" y="5" width="1" height="8" fill="#1e6fa6"/>
 <rect x="12" y="5" width="1" height="7" fill="#f4f8fc"/>
 <rect x="12" y="6" width="1" height="2" fill="#000"/>
 <rect x="13" y="5" width="1" height="8" fill="#1e6fa6"/>
 <rect x="4" y="12" width="10" height="1" fill="#1e6fa6"/>
 <path d="M5 7 L7.6 9 L5 11 Z" fill="#0a14ff"/>
 <rect x="8" y="6" width="2.2" height="1" fill="#ff0a0a"/>
 <rect x="8" y="8" width="2.2" height="1" fill="#ff0a0a"/>
 <rect x="8" y="10" width="2.2" height="1" fill="#ff0a0a"/>
</g>
<rect x="446" y="365" width="25" height="18" fill="#fff" />
<rect x="448" y="382" width="23" height="1" fill="#c6c6c6" />
<rect x="470" y="367" width="1" height="16" fill="#c6c6c6" />
<rect x="447" y="365" width="23" height="1" fill="#95a6b9" />
<rect x="447" y="366" width="23" height="1" fill="#587392" />
<rect x="446" y="366" width="1" height="16" fill="#95a6b9" />
<rect x="447" y="366" width="1" height="16" fill="#587392" />
<svg x="448" y="365" width="22" height="18" overflow="hidden">
<text x="0.5" y="14" font-size="11" fill="#000" text-anchor="start" >2</text>
</svg>
<rect x="472" y="365" width="119" height="18" fill="#fff" />
<rect x="474" y="382" width="117" height="1" fill="#c6c6c6" />
<rect x="590" y="367" width="1" height="16" fill="#c6c6c6" />
<rect x="473" y="365" width="117" height="1" fill="#95a6b9" />
<rect x="473" y="366" width="117" height="1" fill="#587392" />
<rect x="472" y="366" width="1" height="16" fill="#95a6b9" />
<rect x="473" y="366" width="1" height="16" fill="#587392" />
<svg x="474" y="365" width="116" height="18" overflow="hidden">
<text x="0.5" y="14" font-size="10.6" fill="#000" text-anchor="start" textLength="114.5" lengthAdjust="spacingAndGlyphs" >Zentrallager BT Leuchte</text>
</svg>
<g transform="translate(594,367)">
 <rect x="0" y="0" width="15" height="16" rx="1.5" fill="#5f7a99"/>
 <rect x="0" y="0" width="14" height="15" rx="1.5" fill="#d3cfd3"/>
 <rect x="1" y="1" width="8" height="1" fill="#1e6fa6"/>
 <rect x="9" y="1" width="1" height="1" fill="#000"/>
 <rect x="1" y="1" width="1" height="7.5" fill="#1e6fa6"/>
 <rect x="1.8" y="8" width="1.5" height="1" fill="#000"/>
 <rect x="3" y="3" width="11" height="1" fill="#000"/>
 <rect x="13" y="3" width="1" height="2" fill="#000"/>
 <rect x="3" y="4" width="10" height="1" fill="#1e6fa6"/>
 <rect x="3" y="5" width="1" height="8" fill="#000"/>
 <rect x="4" y="5" width="7" height="7" fill="#fff"/>
 <rect x="11" y="5" width="1" height="8" fill="#1e6fa6"/>
 <rect x="12" y="5" width="1" height="7" fill="#f4f8fc"/>
 <rect x="12" y="6" width="1" height="2" fill="#000"/>
 <rect x="13" y="5" width="1" height="8" fill="#1e6fa6"/>
 <rect x="4" y="12" width="10" height="1" fill="#1e6fa6"/>
 <path d="M5 7 L7.6 9 L5 11 Z" fill="#0a14ff"/>
 <rect x="8" y="6" width="2.2" height="1" fill="#ff0a0a"/>
 <rect x="8" y="8" width="2.2" height="1" fill="#ff0a0a"/>
 <rect x="8" y="10" width="2.2" height="1" fill="#ff0a0a"/>
</g>
<rect x="612" y="365" width="25" height="18" fill="#fff" />
<rect x="614" y="382" width="23" height="1" fill="#c6c6c6" />
<rect x="636" y="367" width="1" height="16" fill="#c6c6c6" />
<rect x="613" y="365" width="23" height="1" fill="#95a6b9" />
<rect x="613" y="366" width="23" height="1" fill="#587392" />
<rect x="612" y="366" width="1" height="16" fill="#95a6b9" />
<rect x="613" y="366" width="1" height="16" fill="#587392" />
<svg x="614" y="365" width="22" height="18" overflow="hidden">
<text x="0.5" y="14" font-size="11" fill="#000" text-anchor="start" >50</text>
</svg>
<rect x="638" y="365" width="79" height="18" fill="#fff" />
<rect x="640" y="382" width="77" height="1" fill="#c6c6c6" />
<rect x="716" y="367" width="1" height="16" fill="#c6c6c6" />
<rect x="639" y="365" width="77" height="1" fill="#95a6b9" />
<rect x="639" y="366" width="77" height="1" fill="#587392" />
<rect x="638" y="366" width="1" height="16" fill="#95a6b9" />
<rect x="639" y="366" width="1" height="16" fill="#587392" />
<svg x="640" y="365" width="76" height="18" overflow="hidden">
<text x="0.5" y="14" font-size="10.6" fill="#000" text-anchor="start" >POLST</text>
</svg>
<g transform="translate(720,367)">
 <rect x="0" y="0" width="15" height="16" rx="1.5" fill="#5f7a99"/>
 <rect x="0" y="0" width="14" height="15" rx="1.5" fill="#d3cfd3"/>
 <rect x="1" y="1" width="8" height="1" fill="#1e6fa6"/>
 <rect x="9" y="1" width="1" height="1" fill="#000"/>
 <rect x="1" y="1" width="1" height="7.5" fill="#1e6fa6"/>
 <rect x="1.8" y="8" width="1.5" height="1" fill="#000"/>
 <rect x="3" y="3" width="11" height="1" fill="#000"/>
 <rect x="13" y="3" width="1" height="2" fill="#000"/>
 <rect x="3" y="4" width="10" height="1" fill="#1e6fa6"/>
 <rect x="3" y="5" width="1" height="8" fill="#000"/>
 <rect x="4" y="5" width="7" height="7" fill="#fff"/>
 <rect x="11" y="5" width="1" height="8" fill="#1e6fa6"/>
 <rect x="12" y="5" width="1" height="7" fill="#f4f8fc"/>
 <rect x="12" y="6" width="1" height="2" fill="#000"/>
 <rect x="13" y="5" width="1" height="8" fill="#1e6fa6"/>
 <rect x="4" y="12" width="10" height="1" fill="#1e6fa6"/>
 <path d="M5 7 L7.6 9 L5 11 Z" fill="#0a14ff"/>
 <rect x="8" y="6" width="2.2" height="1" fill="#ff0a0a"/>
 <rect x="8" y="8" width="2.2" height="1" fill="#ff0a0a"/>
 <rect x="8" y="10" width="2.2" height="1" fill="#ff0a0a"/>
</g>
<rect x="737" y="365" width="25" height="18" fill="#fff" />
<rect x="739" y="382" width="23" height="1" fill="#c6c6c6" />
<rect x="761" y="367" width="1" height="16" fill="#c6c6c6" />
<rect x="738" y="365" width="23" height="1" fill="#95a6b9" />
<rect x="738" y="366" width="23" height="1" fill="#587392" />
<rect x="737" y="366" width="1" height="16" fill="#95a6b9" />
<rect x="738" y="366" width="1" height="16" fill="#587392" />
<svg x="739" y="365" width="22" height="18" overflow="hidden">
<text x="20" y="14" font-size="11" fill="#000" text-anchor="end" >0</text>
</svg>
<rect x="790" y="368" width="11" height="1.2" fill="#24344a" />
<rect x="790" y="368" width="1.2" height="11" fill="#24344a" />
<rect x="825" y="367" width="88" height="16" fill="#6f8db0" rx="1.5"/>
<rect x="825" y="367" width="87" height="15" fill="#b9b8be" rx="1.5"/>
<rect x="826" y="368" width="86" height="14" fill="#c6c3c7" />
<svg x="826" y="368" width="86" height="13.5" overflow="hidden">
<text x="41.8" y="10.6" font-size="11" fill="#000" text-anchor="middle" textLength="77.5" lengthAdjust="spacingAndGlyphs" >Bedarfsprüfung</text>
</svg>
<rect x="16" y="384" width="33" height="17" fill="#fff" />
<rect x="18" y="400" width="31" height="1" fill="#c6c6c6" />
<rect x="48" y="386" width="1" height="15" fill="#c6c6c6" />
<rect x="17" y="384" width="31" height="1" fill="#95a6b9" />
<rect x="17" y="385" width="31" height="1" fill="#587392" />
<rect x="16" y="385" width="1" height="15" fill="#95a6b9" />
<rect x="17" y="385" width="1" height="15" fill="#587392" />
<svg x="18" y="384" width="30" height="17" overflow="hidden">
<text x="0.5" y="14" font-size="11" fill="#000" text-anchor="start" >40</text>
</svg>
<rect x="50" y="384" width="79" height="17" fill="#fff" />
<rect x="52" y="400" width="77" height="1" fill="#c6c6c6" />
<rect x="128" y="386" width="1" height="15" fill="#c6c6c6" />
<rect x="51" y="384" width="77" height="1" fill="#95a6b9" />
<rect x="51" y="385" width="77" height="1" fill="#587392" />
<rect x="50" y="385" width="1" height="15" fill="#95a6b9" />
<rect x="51" y="385" width="1" height="15" fill="#587392" />
<svg x="52" y="384" width="76" height="17" overflow="hidden">
<text x="0.5" y="14" font-size="10.6" fill="#000" text-anchor="start" >WPOLS</text>
</svg>
<g transform="translate(132,386)">
 <rect x="0" y="0" width="15" height="16" rx="1.5" fill="#5f7a99"/>
 <rect x="0" y="0" width="14" height="15" rx="1.5" fill="#d3cfd3"/>
 <rect x="1" y="1" width="8" height="1" fill="#1e6fa6"/>
 <rect x="9" y="1" width="1" height="1" fill="#000"/>
 <rect x="1" y="1" width="1" height="7.5" fill="#1e6fa6"/>
 <rect x="1.8" y="8" width="1.5" height="1" fill="#000"/>
 <rect x="3" y="3" width="11" height="1" fill="#000"/>
 <rect x="13" y="3" width="1" height="2" fill="#000"/>
 <rect x="3" y="4" width="10" height="1" fill="#1e6fa6"/>
 <rect x="3" y="5" width="1" height="8" fill="#000"/>
 <rect x="4" y="5" width="7" height="7" fill="#fff"/>
 <rect x="11" y="5" width="1" height="8" fill="#1e6fa6"/>
 <rect x="12" y="5" width="1" height="7" fill="#f4f8fc"/>
 <rect x="12" y="6" width="1" height="2" fill="#000"/>
 <rect x="13" y="5" width="1" height="8" fill="#1e6fa6"/>
 <rect x="4" y="12" width="10" height="1" fill="#1e6fa6"/>
 <path d="M5 7 L7.6 9 L5 11 Z" fill="#0a14ff"/>
 <rect x="8" y="6" width="2.2" height="1" fill="#ff0a0a"/>
 <rect x="8" y="8" width="2.2" height="1" fill="#ff0a0a"/>
 <rect x="8" y="10" width="2.2" height="1" fill="#ff0a0a"/>
</g>
<rect x="148" y="384" width="33" height="17" fill="#fff" />
<rect x="150" y="400" width="31" height="1" fill="#c6c6c6" />
<rect x="180" y="386" width="1" height="15" fill="#c6c6c6" />
<rect x="149" y="384" width="31" height="1" fill="#95a6b9" />
<rect x="149" y="385" width="31" height="1" fill="#587392" />
<rect x="148" y="385" width="1" height="15" fill="#95a6b9" />
<rect x="149" y="385" width="1" height="15" fill="#587392" />
<svg x="150" y="384" width="30" height="17" overflow="hidden">
<text x="0.5" y="14" font-size="11" fill="#000" text-anchor="start" >10</text>
</svg>
<rect x="182" y="384" width="79" height="17" fill="#fff" />
<rect x="184" y="400" width="77" height="1" fill="#c6c6c6" />
<rect x="260" y="386" width="1" height="15" fill="#c6c6c6" />
<rect x="183" y="384" width="77" height="1" fill="#95a6b9" />
<rect x="183" y="385" width="77" height="1" fill="#587392" />
<rect x="182" y="385" width="1" height="15" fill="#95a6b9" />
<rect x="183" y="385" width="1" height="15" fill="#587392" />
<svg x="184" y="384" width="76" height="17" overflow="hidden">
<text x="0.5" y="14" font-size="10.6" fill="#000" text-anchor="start" textLength="42.5" lengthAdjust="spacingAndGlyphs" >Ungarn 1</text>
</svg>
<g transform="translate(264,386)">
 <rect x="0" y="0" width="15" height="16" rx="1.5" fill="#5f7a99"/>
 <rect x="0" y="0" width="14" height="15" rx="1.5" fill="#d3cfd3"/>
 <rect x="1" y="1" width="8" height="1" fill="#1e6fa6"/>
 <rect x="9" y="1" width="1" height="1" fill="#000"/>
 <rect x="1" y="1" width="1" height="7.5" fill="#1e6fa6"/>
 <rect x="1.8" y="8" width="1.5" height="1" fill="#000"/>
 <rect x="3" y="3" width="11" height="1" fill="#000"/>
 <rect x="13" y="3" width="1" height="2" fill="#000"/>
 <rect x="3" y="4" width="10" height="1" fill="#1e6fa6"/>
 <rect x="3" y="5" width="1" height="8" fill="#000"/>
 <rect x="4" y="5" width="7" height="7" fill="#fff"/>
 <rect x="11" y="5" width="1" height="8" fill="#1e6fa6"/>
 <rect x="12" y="5" width="1" height="7" fill="#f4f8fc"/>
 <rect x="12" y="6" width="1" height="2" fill="#000"/>
 <rect x="13" y="5" width="1" height="8" fill="#1e6fa6"/>
 <rect x="4" y="12" width="10" height="1" fill="#1e6fa6"/>
 <path d="M5 7 L7.6 9 L5 11 Z" fill="#0a14ff"/>
 <rect x="8" y="6" width="2.2" height="1" fill="#ff0a0a"/>
 <rect x="8" y="8" width="2.2" height="1" fill="#ff0a0a"/>
 <rect x="8" y="10" width="2.2" height="1" fill="#ff0a0a"/>
</g>
<rect x="281" y="384" width="25" height="17" fill="#fff" />
<rect x="283" y="400" width="23" height="1" fill="#c6c6c6" />
<rect x="305" y="386" width="1" height="15" fill="#c6c6c6" />
<rect x="282" y="384" width="23" height="1" fill="#95a6b9" />
<rect x="282" y="385" width="23" height="1" fill="#587392" />
<rect x="281" y="385" width="1" height="15" fill="#95a6b9" />
<rect x="282" y="385" width="1" height="15" fill="#587392" />
<svg x="283" y="384" width="22" height="17" overflow="hidden">
<text x="0.5" y="14" font-size="11" fill="#000" text-anchor="start" >6</text>
</svg>
<rect x="307" y="384" width="119" height="17" fill="#fff" />
<rect x="309" y="400" width="117" height="1" fill="#c6c6c6" />
<rect x="425" y="386" width="1" height="15" fill="#c6c6c6" />
<rect x="308" y="384" width="117" height="1" fill="#95a6b9" />
<rect x="308" y="385" width="117" height="1" fill="#587392" />
<rect x="307" y="385" width="1" height="15" fill="#95a6b9" />
<rect x="308" y="385" width="1" height="15" fill="#587392" />
<svg x="309" y="384" width="116" height="17" overflow="hidden">
<text x="0.5" y="14" font-size="10.6" fill="#000" text-anchor="start" >Lindemann</text>
</svg>
<g transform="translate(430,386)">
 <rect x="0" y="0" width="15" height="16" rx="1.5" fill="#5f7a99"/>
 <rect x="0" y="0" width="14" height="15" rx="1.5" fill="#d3cfd3"/>
 <rect x="1" y="1" width="8" height="1" fill="#1e6fa6"/>
 <rect x="9" y="1" width="1" height="1" fill="#000"/>
 <rect x="1" y="1" width="1" height="7.5" fill="#1e6fa6"/>
 <rect x="1.8" y="8" width="1.5" height="1" fill="#000"/>
 <rect x="3" y="3" width="11" height="1" fill="#000"/>
 <rect x="13" y="3" width="1" height="2" fill="#000"/>
 <rect x="3" y="4" width="10" height="1" fill="#1e6fa6"/>
 <rect x="3" y="5" width="1" height="8" fill="#000"/>
 <rect x="4" y="5" width="7" height="7" fill="#fff"/>
 <rect x="11" y="5" width="1" height="8" fill="#1e6fa6"/>
 <rect x="12" y="5" width="1" height="7" fill="#f4f8fc"/>
 <rect x="12" y="6" width="1" height="2" fill="#000"/>
 <rect x="13" y="5" width="1" height="8" fill="#1e6fa6"/>
 <rect x="4" y="12" width="10" height="1" fill="#1e6fa6"/>
 <path d="M5 7 L7.6 9 L5 11 Z" fill="#0a14ff"/>
 <rect x="8" y="6" width="2.2" height="1" fill="#ff0a0a"/>
 <rect x="8" y="8" width="2.2" height="1" fill="#ff0a0a"/>
 <rect x="8" y="10" width="2.2" height="1" fill="#ff0a0a"/>
</g>
<rect x="446" y="384" width="25" height="17" fill="#fff" />
<rect x="448" y="400" width="23" height="1" fill="#c6c6c6" />
<rect x="470" y="386" width="1" height="15" fill="#c6c6c6" />
<rect x="447" y="384" width="23" height="1" fill="#95a6b9" />
<rect x="447" y="385" width="23" height="1" fill="#587392" />
<rect x="446" y="385" width="1" height="15" fill="#95a6b9" />
<rect x="447" y="385" width="1" height="15" fill="#587392" />
<svg x="448" y="384" width="22" height="17" overflow="hidden">
<text x="0.5" y="14" font-size="11" fill="#000" text-anchor="start" >2</text>
</svg>
<rect x="472" y="384" width="119" height="17" fill="#fff" />
<rect x="474" y="400" width="117" height="1" fill="#c6c6c6" />
<rect x="590" y="386" width="1" height="15" fill="#c6c6c6" />
<rect x="473" y="384" width="117" height="1" fill="#95a6b9" />
<rect x="473" y="385" width="117" height="1" fill="#587392" />
<rect x="472" y="385" width="1" height="15" fill="#95a6b9" />
<rect x="473" y="385" width="1" height="15" fill="#587392" />
<svg x="474" y="384" width="116" height="17" overflow="hidden">
<text x="0.5" y="14" font-size="10.6" fill="#000" text-anchor="start" textLength="114.5" lengthAdjust="spacingAndGlyphs" >Zentrallager BT Leuchte</text>
</svg>
<g transform="translate(594,386)">
 <rect x="0" y="0" width="15" height="16" rx="1.5" fill="#5f7a99"/>
 <rect x="0" y="0" width="14" height="15" rx="1.5" fill="#d3cfd3"/>
 <rect x="1" y="1" width="8" height="1" fill="#1e6fa6"/>
 <rect x="9" y="1" width="1" height="1" fill="#000"/>
 <rect x="1" y="1" width="1" height="7.5" fill="#1e6fa6"/>
 <rect x="1.8" y="8" width="1.5" height="1" fill="#000"/>
 <rect x="3" y="3" width="11" height="1" fill="#000"/>
 <rect x="13" y="3" width="1" height="2" fill="#000"/>
 <rect x="3" y="4" width="10" height="1" fill="#1e6fa6"/>
 <rect x="3" y="5" width="1" height="8" fill="#000"/>
 <rect x="4" y="5" width="7" height="7" fill="#fff"/>
 <rect x="11" y="5" width="1" height="8" fill="#1e6fa6"/>
 <rect x="12" y="5" width="1" height="7" fill="#f4f8fc"/>
 <rect x="12" y="6" width="1" height="2" fill="#000"/>
 <rect x="13" y="5" width="1" height="8" fill="#1e6fa6"/>
 <rect x="4" y="12" width="10" height="1" fill="#1e6fa6"/>
 <path d="M5 7 L7.6 9 L5 11 Z" fill="#0a14ff"/>
 <rect x="8" y="6" width="2.2" height="1" fill="#ff0a0a"/>
 <rect x="8" y="8" width="2.2" height="1" fill="#ff0a0a"/>
 <rect x="8" y="10" width="2.2" height="1" fill="#ff0a0a"/>
</g>
<rect x="612" y="384" width="25" height="17" fill="#fff" />
<rect x="614" y="400" width="23" height="1" fill="#c6c6c6" />
<rect x="636" y="386" width="1" height="15" fill="#c6c6c6" />
<rect x="613" y="384" width="23" height="1" fill="#95a6b9" />
<rect x="613" y="385" width="23" height="1" fill="#587392" />
<rect x="612" y="385" width="1" height="15" fill="#95a6b9" />
<rect x="613" y="385" width="1" height="15" fill="#587392" />
<svg x="614" y="384" width="22" height="17" overflow="hidden">
<text x="0.5" y="14" font-size="11" fill="#000" text-anchor="start" >50</text>
</svg>
<rect x="638" y="384" width="79" height="17" fill="#fff" />
<rect x="640" y="400" width="77" height="1" fill="#c6c6c6" />
<rect x="716" y="386" width="1" height="15" fill="#c6c6c6" />
<rect x="639" y="384" width="77" height="1" fill="#95a6b9" />
<rect x="639" y="385" width="77" height="1" fill="#587392" />
<rect x="638" y="385" width="1" height="15" fill="#95a6b9" />
<rect x="639" y="385" width="1" height="15" fill="#587392" />
<svg x="640" y="384" width="76" height="17" overflow="hidden">
<text x="0.5" y="14" font-size="10.6" fill="#000" text-anchor="start" >POLST</text>
</svg>
<g transform="translate(720,386)">
 <rect x="0" y="0" width="15" height="16" rx="1.5" fill="#5f7a99"/>
 <rect x="0" y="0" width="14" height="15" rx="1.5" fill="#d3cfd3"/>
 <rect x="1" y="1" width="8" height="1" fill="#1e6fa6"/>
 <rect x="9" y="1" width="1" height="1" fill="#000"/>
 <rect x="1" y="1" width="1" height="7.5" fill="#1e6fa6"/>
 <rect x="1.8" y="8" width="1.5" height="1" fill="#000"/>
 <rect x="3" y="3" width="11" height="1" fill="#000"/>
 <rect x="13" y="3" width="1" height="2" fill="#000"/>
 <rect x="3" y="4" width="10" height="1" fill="#1e6fa6"/>
 <rect x="3" y="5" width="1" height="8" fill="#000"/>
 <rect x="4" y="5" width="7" height="7" fill="#fff"/>
 <rect x="11" y="5" width="1" height="8" fill="#1e6fa6"/>
 <rect x="12" y="5" width="1" height="7" fill="#f4f8fc"/>
 <rect x="12" y="6" width="1" height="2" fill="#000"/>
 <rect x="13" y="5" width="1" height="8" fill="#1e6fa6"/>
 <rect x="4" y="12" width="10" height="1" fill="#1e6fa6"/>
 <path d="M5 7 L7.6 9 L5 11 Z" fill="#0a14ff"/>
 <rect x="8" y="6" width="2.2" height="1" fill="#ff0a0a"/>
 <rect x="8" y="8" width="2.2" height="1" fill="#ff0a0a"/>
 <rect x="8" y="10" width="2.2" height="1" fill="#ff0a0a"/>
</g>
<rect x="737" y="384" width="25" height="17" fill="#fff" />
<rect x="739" y="400" width="23" height="1" fill="#c6c6c6" />
<rect x="761" y="386" width="1" height="15" fill="#c6c6c6" />
<rect x="738" y="384" width="23" height="1" fill="#95a6b9" />
<rect x="738" y="385" width="23" height="1" fill="#587392" />
<rect x="737" y="385" width="1" height="15" fill="#95a6b9" />
<rect x="738" y="385" width="1" height="15" fill="#587392" />
<svg x="739" y="384" width="22" height="17" overflow="hidden">
<text x="20" y="14" font-size="11" fill="#000" text-anchor="end" >0</text>
</svg>
<rect x="790" y="387" width="11" height="1.2" fill="#24344a" />
<rect x="790" y="387" width="1.2" height="11" fill="#24344a" />
<rect x="825" y="386" width="88" height="15" fill="#6f8db0" rx="1.5"/>
<rect x="825" y="386" width="87" height="14" fill="#b9b8be" rx="1.5"/>
<rect x="826" y="387" width="86" height="13" fill="#c6c3c7" />
<svg x="826" y="387" width="86" height="12.5" overflow="hidden">
<text x="41.8" y="10.6" font-size="11" fill="#000" text-anchor="middle" textLength="77.5" lengthAdjust="spacingAndGlyphs" >Bedarfsprüfung</text>
</svg>
<rect x="16" y="402" width="33" height="18" fill="#fff" />
<rect x="18" y="419" width="31" height="1" fill="#c6c6c6" />
<rect x="48" y="404" width="1" height="16" fill="#c6c6c6" />
<rect x="17" y="402" width="31" height="1" fill="#95a6b9" />
<rect x="17" y="403" width="31" height="1" fill="#587392" />
<rect x="16" y="403" width="1" height="16" fill="#95a6b9" />
<rect x="17" y="403" width="1" height="16" fill="#587392" />
<svg x="18" y="402" width="30" height="18" overflow="hidden">
<text x="0.5" y="14" font-size="11" fill="#000" text-anchor="start" >50</text>
</svg>
<rect x="50" y="402" width="79" height="18" fill="#fff" />
<rect x="52" y="419" width="77" height="1" fill="#c6c6c6" />
<rect x="128" y="404" width="1" height="16" fill="#c6c6c6" />
<rect x="51" y="402" width="77" height="1" fill="#95a6b9" />
<rect x="51" y="403" width="77" height="1" fill="#587392" />
<rect x="50" y="403" width="1" height="16" fill="#95a6b9" />
<rect x="51" y="403" width="1" height="16" fill="#587392" />
<svg x="52" y="402" width="76" height="18" overflow="hidden">
<text x="0.5" y="14" font-size="10.6" fill="#000" text-anchor="start" >POLST</text>
</svg>
<g transform="translate(132,404)">
 <rect x="0" y="0" width="15" height="16" rx="1.5" fill="#5f7a99"/>
 <rect x="0" y="0" width="14" height="15" rx="1.5" fill="#d3cfd3"/>
 <rect x="1" y="1" width="8" height="1" fill="#1e6fa6"/>
 <rect x="9" y="1" width="1" height="1" fill="#000"/>
 <rect x="1" y="1" width="1" height="7.5" fill="#1e6fa6"/>
 <rect x="1.8" y="8" width="1.5" height="1" fill="#000"/>
 <rect x="3" y="3" width="11" height="1" fill="#000"/>
 <rect x="13" y="3" width="1" height="2" fill="#000"/>
 <rect x="3" y="4" width="10" height="1" fill="#1e6fa6"/>
 <rect x="3" y="5" width="1" height="8" fill="#000"/>
 <rect x="4" y="5" width="7" height="7" fill="#fff"/>
 <rect x="11" y="5" width="1" height="8" fill="#1e6fa6"/>
 <rect x="12" y="5" width="1" height="7" fill="#f4f8fc"/>
 <rect x="12" y="6" width="1" height="2" fill="#000"/>
 <rect x="13" y="5" width="1" height="8" fill="#1e6fa6"/>
 <rect x="4" y="12" width="10" height="1" fill="#1e6fa6"/>
 <path d="M5 7 L7.6 9 L5 11 Z" fill="#0a14ff"/>
 <rect x="8" y="6" width="2.2" height="1" fill="#ff0a0a"/>
 <rect x="8" y="8" width="2.2" height="1" fill="#ff0a0a"/>
 <rect x="8" y="10" width="2.2" height="1" fill="#ff0a0a"/>
</g>
<rect x="148" y="402" width="33" height="18" fill="#fff" />
<rect x="150" y="419" width="31" height="1" fill="#c6c6c6" />
<rect x="180" y="404" width="1" height="16" fill="#c6c6c6" />
<rect x="149" y="402" width="31" height="1" fill="#95a6b9" />
<rect x="149" y="403" width="31" height="1" fill="#587392" />
<rect x="148" y="403" width="1" height="16" fill="#95a6b9" />
<rect x="149" y="403" width="1" height="16" fill="#587392" />
<svg x="150" y="402" width="30" height="18" overflow="hidden">
<text x="0.5" y="14" font-size="11" fill="#000" text-anchor="start" >10</text>
</svg>
<rect x="182" y="402" width="79" height="18" fill="#fff" />
<rect x="184" y="419" width="77" height="1" fill="#c6c6c6" />
<rect x="260" y="404" width="1" height="16" fill="#c6c6c6" />
<rect x="183" y="402" width="77" height="1" fill="#95a6b9" />
<rect x="183" y="403" width="77" height="1" fill="#587392" />
<rect x="182" y="403" width="1" height="16" fill="#95a6b9" />
<rect x="183" y="403" width="1" height="16" fill="#587392" />
<svg x="184" y="402" width="76" height="18" overflow="hidden">
<text x="0.5" y="14" font-size="10.6" fill="#000" text-anchor="start" textLength="42.5" lengthAdjust="spacingAndGlyphs" >Ungarn 1</text>
</svg>
<g transform="translate(264,404)">
 <rect x="0" y="0" width="15" height="16" rx="1.5" fill="#5f7a99"/>
 <rect x="0" y="0" width="14" height="15" rx="1.5" fill="#d3cfd3"/>
 <rect x="1" y="1" width="8" height="1" fill="#1e6fa6"/>
 <rect x="9" y="1" width="1" height="1" fill="#000"/>
 <rect x="1" y="1" width="1" height="7.5" fill="#1e6fa6"/>
 <rect x="1.8" y="8" width="1.5" height="1" fill="#000"/>
 <rect x="3" y="3" width="11" height="1" fill="#000"/>
 <rect x="13" y="3" width="1" height="2" fill="#000"/>
 <rect x="3" y="4" width="10" height="1" fill="#1e6fa6"/>
 <rect x="3" y="5" width="1" height="8" fill="#000"/>
 <rect x="4" y="5" width="7" height="7" fill="#fff"/>
 <rect x="11" y="5" width="1" height="8" fill="#1e6fa6"/>
 <rect x="12" y="5" width="1" height="7" fill="#f4f8fc"/>
 <rect x="12" y="6" width="1" height="2" fill="#000"/>
 <rect x="13" y="5" width="1" height="8" fill="#1e6fa6"/>
 <rect x="4" y="12" width="10" height="1" fill="#1e6fa6"/>
 <path d="M5 7 L7.6 9 L5 11 Z" fill="#0a14ff"/>
 <rect x="8" y="6" width="2.2" height="1" fill="#ff0a0a"/>
 <rect x="8" y="8" width="2.2" height="1" fill="#ff0a0a"/>
 <rect x="8" y="10" width="2.2" height="1" fill="#ff0a0a"/>
</g>
<rect x="281" y="402" width="25" height="18" fill="#fff" />
<rect x="283" y="419" width="23" height="1" fill="#c6c6c6" />
<rect x="305" y="404" width="1" height="16" fill="#c6c6c6" />
<rect x="282" y="402" width="23" height="1" fill="#95a6b9" />
<rect x="282" y="403" width="23" height="1" fill="#587392" />
<rect x="281" y="403" width="1" height="16" fill="#95a6b9" />
<rect x="282" y="403" width="1" height="16" fill="#587392" />
<svg x="283" y="402" width="22" height="18" overflow="hidden">
<text x="0.5" y="14" font-size="11" fill="#000" text-anchor="start" >6</text>
</svg>
<rect x="307" y="402" width="119" height="18" fill="#fff" />
<rect x="309" y="419" width="117" height="1" fill="#c6c6c6" />
<rect x="425" y="404" width="1" height="16" fill="#c6c6c6" />
<rect x="308" y="402" width="117" height="1" fill="#95a6b9" />
<rect x="308" y="403" width="117" height="1" fill="#587392" />
<rect x="307" y="403" width="1" height="16" fill="#95a6b9" />
<rect x="308" y="403" width="1" height="16" fill="#587392" />
<svg x="309" y="402" width="116" height="18" overflow="hidden">
<text x="0.5" y="14" font-size="10.6" fill="#000" text-anchor="start" >Lindemann</text>
</svg>
<g transform="translate(430,404)">
 <rect x="0" y="0" width="15" height="16" rx="1.5" fill="#5f7a99"/>
 <rect x="0" y="0" width="14" height="15" rx="1.5" fill="#d3cfd3"/>
 <rect x="1" y="1" width="8" height="1" fill="#1e6fa6"/>
 <rect x="9" y="1" width="1" height="1" fill="#000"/>
 <rect x="1" y="1" width="1" height="7.5" fill="#1e6fa6"/>
 <rect x="1.8" y="8" width="1.5" height="1" fill="#000"/>
 <rect x="3" y="3" width="11" height="1" fill="#000"/>
 <rect x="13" y="3" width="1" height="2" fill="#000"/>
 <rect x="3" y="4" width="10" height="1" fill="#1e6fa6"/>
 <rect x="3" y="5" width="1" height="8" fill="#000"/>
 <rect x="4" y="5" width="7" height="7" fill="#fff"/>
 <rect x="11" y="5" width="1" height="8" fill="#1e6fa6"/>
 <rect x="12" y="5" width="1" height="7" fill="#f4f8fc"/>
 <rect x="12" y="6" width="1" height="2" fill="#000"/>
 <rect x="13" y="5" width="1" height="8" fill="#1e6fa6"/>
 <rect x="4" y="12" width="10" height="1" fill="#1e6fa6"/>
 <path d="M5 7 L7.6 9 L5 11 Z" fill="#0a14ff"/>
 <rect x="8" y="6" width="2.2" height="1" fill="#ff0a0a"/>
 <rect x="8" y="8" width="2.2" height="1" fill="#ff0a0a"/>
 <rect x="8" y="10" width="2.2" height="1" fill="#ff0a0a"/>
</g>
<rect x="446" y="402" width="25" height="18" fill="#fff" />
<rect x="448" y="419" width="23" height="1" fill="#c6c6c6" />
<rect x="470" y="404" width="1" height="16" fill="#c6c6c6" />
<rect x="447" y="402" width="23" height="1" fill="#95a6b9" />
<rect x="447" y="403" width="23" height="1" fill="#587392" />
<rect x="446" y="403" width="1" height="16" fill="#95a6b9" />
<rect x="447" y="403" width="1" height="16" fill="#587392" />
<svg x="448" y="402" width="22" height="18" overflow="hidden">
<text x="0.5" y="14" font-size="11" fill="#000" text-anchor="start" >2</text>
</svg>
<rect x="472" y="402" width="119" height="18" fill="#fff" />
<rect x="474" y="419" width="117" height="1" fill="#c6c6c6" />
<rect x="590" y="404" width="1" height="16" fill="#c6c6c6" />
<rect x="473" y="402" width="117" height="1" fill="#95a6b9" />
<rect x="473" y="403" width="117" height="1" fill="#587392" />
<rect x="472" y="403" width="1" height="16" fill="#95a6b9" />
<rect x="473" y="403" width="1" height="16" fill="#587392" />
<svg x="474" y="402" width="116" height="18" overflow="hidden">
<text x="0.5" y="14" font-size="10.6" fill="#000" text-anchor="start" textLength="114.5" lengthAdjust="spacingAndGlyphs" >Zentrallager BT Leuchte</text>
</svg>
<g transform="translate(594,404)">
 <rect x="0" y="0" width="15" height="16" rx="1.5" fill="#5f7a99"/>
 <rect x="0" y="0" width="14" height="15" rx="1.5" fill="#d3cfd3"/>
 <rect x="1" y="1" width="8" height="1" fill="#1e6fa6"/>
 <rect x="9" y="1" width="1" height="1" fill="#000"/>
 <rect x="1" y="1" width="1" height="7.5" fill="#1e6fa6"/>
 <rect x="1.8" y="8" width="1.5" height="1" fill="#000"/>
 <rect x="3" y="3" width="11" height="1" fill="#000"/>
 <rect x="13" y="3" width="1" height="2" fill="#000"/>
 <rect x="3" y="4" width="10" height="1" fill="#1e6fa6"/>
 <rect x="3" y="5" width="1" height="8" fill="#000"/>
 <rect x="4" y="5" width="7" height="7" fill="#fff"/>
 <rect x="11" y="5" width="1" height="8" fill="#1e6fa6"/>
 <rect x="12" y="5" width="1" height="7" fill="#f4f8fc"/>
 <rect x="12" y="6" width="1" height="2" fill="#000"/>
 <rect x="13" y="5" width="1" height="8" fill="#1e6fa6"/>
 <rect x="4" y="12" width="10" height="1" fill="#1e6fa6"/>
 <path d="M5 7 L7.6 9 L5 11 Z" fill="#0a14ff"/>
 <rect x="8" y="6" width="2.2" height="1" fill="#ff0a0a"/>
 <rect x="8" y="8" width="2.2" height="1" fill="#ff0a0a"/>
 <rect x="8" y="10" width="2.2" height="1" fill="#ff0a0a"/>
</g>
<rect x="612" y="402" width="25" height="18" fill="#fff" />
<rect x="614" y="419" width="23" height="1" fill="#c6c6c6" />
<rect x="636" y="404" width="1" height="16" fill="#c6c6c6" />
<rect x="613" y="402" width="23" height="1" fill="#95a6b9" />
<rect x="613" y="403" width="23" height="1" fill="#587392" />
<rect x="612" y="403" width="1" height="16" fill="#95a6b9" />
<rect x="613" y="403" width="1" height="16" fill="#587392" />
<svg x="614" y="402" width="22" height="18" overflow="hidden">
<text x="0.5" y="14" font-size="11" fill="#000" text-anchor="start" >60</text>
</svg>
<rect x="638" y="402" width="79" height="18" fill="#fff" />
<rect x="640" y="419" width="77" height="1" fill="#c6c6c6" />
<rect x="716" y="404" width="1" height="16" fill="#c6c6c6" />
<rect x="639" y="402" width="77" height="1" fill="#95a6b9" />
<rect x="639" y="403" width="77" height="1" fill="#587392" />
<rect x="638" y="403" width="1" height="16" fill="#95a6b9" />
<rect x="639" y="403" width="1" height="16" fill="#587392" />
<svg x="640" y="402" width="76" height="18" overflow="hidden">
<text x="0.5" y="14" font-size="10.6" fill="#000" text-anchor="start" >ENDKTR</text>
</svg>
<g transform="translate(720,404)">
 <rect x="0" y="0" width="15" height="16" rx="1.5" fill="#5f7a99"/>
 <rect x="0" y="0" width="14" height="15" rx="1.5" fill="#d3cfd3"/>
 <rect x="1" y="1" width="8" height="1" fill="#1e6fa6"/>
 <rect x="9" y="1" width="1" height="1" fill="#000"/>
 <rect x="1" y="1" width="1" height="7.5" fill="#1e6fa6"/>
 <rect x="1.8" y="8" width="1.5" height="1" fill="#000"/>
 <rect x="3" y="3" width="11" height="1" fill="#000"/>
 <rect x="13" y="3" width="1" height="2" fill="#000"/>
 <rect x="3" y="4" width="10" height="1" fill="#1e6fa6"/>
 <rect x="3" y="5" width="1" height="8" fill="#000"/>
 <rect x="4" y="5" width="7" height="7" fill="#fff"/>
 <rect x="11" y="5" width="1" height="8" fill="#1e6fa6"/>
 <rect x="12" y="5" width="1" height="7" fill="#f4f8fc"/>
 <rect x="12" y="6" width="1" height="2" fill="#000"/>
 <rect x="13" y="5" width="1" height="8" fill="#1e6fa6"/>
 <rect x="4" y="12" width="10" height="1" fill="#1e6fa6"/>
 <path d="M5 7 L7.6 9 L5 11 Z" fill="#0a14ff"/>
 <rect x="8" y="6" width="2.2" height="1" fill="#ff0a0a"/>
 <rect x="8" y="8" width="2.2" height="1" fill="#ff0a0a"/>
 <rect x="8" y="10" width="2.2" height="1" fill="#ff0a0a"/>
</g>
<rect x="737" y="402" width="25" height="18" fill="#fff" />
<rect x="739" y="419" width="23" height="1" fill="#c6c6c6" />
<rect x="761" y="404" width="1" height="16" fill="#c6c6c6" />
<rect x="738" y="402" width="23" height="1" fill="#95a6b9" />
<rect x="738" y="403" width="23" height="1" fill="#587392" />
<rect x="737" y="403" width="1" height="16" fill="#95a6b9" />
<rect x="738" y="403" width="1" height="16" fill="#587392" />
<svg x="739" y="402" width="22" height="18" overflow="hidden">
<text x="20" y="14" font-size="11" fill="#000" text-anchor="end" >0</text>
</svg>
<rect x="790" y="405" width="11" height="1.2" fill="#24344a" />
<rect x="790" y="405" width="1.2" height="11" fill="#24344a" />
<rect x="825" y="404" width="88" height="16" fill="#6f8db0" rx="1.5"/>
<rect x="825" y="404" width="87" height="15" fill="#b9b8be" rx="1.5"/>
<rect x="826" y="405" width="86" height="14" fill="#c6c3c7" />
<svg x="826" y="405" width="86" height="13.5" overflow="hidden">
<text x="41.8" y="10.6" font-size="11" fill="#000" text-anchor="middle" textLength="77.5" lengthAdjust="spacingAndGlyphs" >Bedarfsprüfung</text>
</svg>
<rect x="16" y="421" width="33" height="18" fill="#fff" />
<rect x="18" y="438" width="31" height="1" fill="#c6c6c6" />
<rect x="48" y="423" width="1" height="16" fill="#c6c6c6" />
<rect x="17" y="421" width="31" height="1" fill="#95a6b9" />
<rect x="17" y="422" width="31" height="1" fill="#587392" />
<rect x="16" y="422" width="1" height="16" fill="#95a6b9" />
<rect x="17" y="422" width="1" height="16" fill="#587392" />
<svg x="18" y="421" width="30" height="18" overflow="hidden">
<text x="0.5" y="14" font-size="11" fill="#000" text-anchor="start" >60</text>
</svg>
<rect x="50" y="421" width="79" height="18" fill="#fff" />
<rect x="52" y="438" width="77" height="1" fill="#c6c6c6" />
<rect x="128" y="423" width="1" height="16" fill="#c6c6c6" />
<rect x="51" y="421" width="77" height="1" fill="#95a6b9" />
<rect x="51" y="422" width="77" height="1" fill="#587392" />
<rect x="50" y="422" width="1" height="16" fill="#95a6b9" />
<rect x="51" y="422" width="1" height="16" fill="#587392" />
<svg x="52" y="421" width="76" height="18" overflow="hidden">
<text x="0.5" y="14" font-size="10.6" fill="#000" text-anchor="start" >ENDKTR</text>
</svg>
<g transform="translate(132,423)">
 <rect x="0" y="0" width="15" height="16" rx="1.5" fill="#5f7a99"/>
 <rect x="0" y="0" width="14" height="15" rx="1.5" fill="#d3cfd3"/>
 <rect x="1" y="1" width="8" height="1" fill="#1e6fa6"/>
 <rect x="9" y="1" width="1" height="1" fill="#000"/>
 <rect x="1" y="1" width="1" height="7.5" fill="#1e6fa6"/>
 <rect x="1.8" y="8" width="1.5" height="1" fill="#000"/>
 <rect x="3" y="3" width="11" height="1" fill="#000"/>
 <rect x="13" y="3" width="1" height="2" fill="#000"/>
 <rect x="3" y="4" width="10" height="1" fill="#1e6fa6"/>
 <rect x="3" y="5" width="1" height="8" fill="#000"/>
 <rect x="4" y="5" width="7" height="7" fill="#fff"/>
 <rect x="11" y="5" width="1" height="8" fill="#1e6fa6"/>
 <rect x="12" y="5" width="1" height="7" fill="#f4f8fc"/>
 <rect x="12" y="6" width="1" height="2" fill="#000"/>
 <rect x="13" y="5" width="1" height="8" fill="#1e6fa6"/>
 <rect x="4" y="12" width="10" height="1" fill="#1e6fa6"/>
 <path d="M5 7 L7.6 9 L5 11 Z" fill="#0a14ff"/>
 <rect x="8" y="6" width="2.2" height="1" fill="#ff0a0a"/>
 <rect x="8" y="8" width="2.2" height="1" fill="#ff0a0a"/>
 <rect x="8" y="10" width="2.2" height="1" fill="#ff0a0a"/>
</g>
<rect x="148" y="421" width="33" height="18" fill="#fff" />
<rect x="150" y="438" width="31" height="1" fill="#c6c6c6" />
<rect x="180" y="423" width="1" height="16" fill="#c6c6c6" />
<rect x="149" y="421" width="31" height="1" fill="#95a6b9" />
<rect x="149" y="422" width="31" height="1" fill="#587392" />
<rect x="148" y="422" width="1" height="16" fill="#95a6b9" />
<rect x="149" y="422" width="1" height="16" fill="#587392" />
<svg x="150" y="421" width="30" height="18" overflow="hidden">
<text x="0.5" y="14" font-size="11" fill="#000" text-anchor="start" >10</text>
</svg>
<rect x="182" y="421" width="79" height="18" fill="#fff" />
<rect x="184" y="438" width="77" height="1" fill="#c6c6c6" />
<rect x="260" y="423" width="1" height="16" fill="#c6c6c6" />
<rect x="183" y="421" width="77" height="1" fill="#95a6b9" />
<rect x="183" y="422" width="77" height="1" fill="#587392" />
<rect x="182" y="422" width="1" height="16" fill="#95a6b9" />
<rect x="183" y="422" width="1" height="16" fill="#587392" />
<svg x="184" y="421" width="76" height="18" overflow="hidden">
<text x="0.5" y="14" font-size="10.6" fill="#000" text-anchor="start" textLength="42.5" lengthAdjust="spacingAndGlyphs" >Ungarn 1</text>
</svg>
<g transform="translate(264,423)">
 <rect x="0" y="0" width="15" height="16" rx="1.5" fill="#5f7a99"/>
 <rect x="0" y="0" width="14" height="15" rx="1.5" fill="#d3cfd3"/>
 <rect x="1" y="1" width="8" height="1" fill="#1e6fa6"/>
 <rect x="9" y="1" width="1" height="1" fill="#000"/>
 <rect x="1" y="1" width="1" height="7.5" fill="#1e6fa6"/>
 <rect x="1.8" y="8" width="1.5" height="1" fill="#000"/>
 <rect x="3" y="3" width="11" height="1" fill="#000"/>
 <rect x="13" y="3" width="1" height="2" fill="#000"/>
 <rect x="3" y="4" width="10" height="1" fill="#1e6fa6"/>
 <rect x="3" y="5" width="1" height="8" fill="#000"/>
 <rect x="4" y="5" width="7" height="7" fill="#fff"/>
 <rect x="11" y="5" width="1" height="8" fill="#1e6fa6"/>
 <rect x="12" y="5" width="1" height="7" fill="#f4f8fc"/>
 <rect x="12" y="6" width="1" height="2" fill="#000"/>
 <rect x="13" y="5" width="1" height="8" fill="#1e6fa6"/>
 <rect x="4" y="12" width="10" height="1" fill="#1e6fa6"/>
 <path d="M5 7 L7.6 9 L5 11 Z" fill="#0a14ff"/>
 <rect x="8" y="6" width="2.2" height="1" fill="#ff0a0a"/>
 <rect x="8" y="8" width="2.2" height="1" fill="#ff0a0a"/>
 <rect x="8" y="10" width="2.2" height="1" fill="#ff0a0a"/>
</g>
<rect x="281" y="421" width="25" height="18" fill="#fff" />
<rect x="283" y="438" width="23" height="1" fill="#c6c6c6" />
<rect x="305" y="423" width="1" height="16" fill="#c6c6c6" />
<rect x="282" y="421" width="23" height="1" fill="#95a6b9" />
<rect x="282" y="422" width="23" height="1" fill="#587392" />
<rect x="281" y="422" width="1" height="16" fill="#95a6b9" />
<rect x="282" y="422" width="1" height="16" fill="#587392" />
<svg x="283" y="421" width="22" height="18" overflow="hidden">
<text x="0.5" y="14" font-size="11" fill="#000" text-anchor="start" >6</text>
</svg>
<rect x="307" y="421" width="119" height="18" fill="#fff" />
<rect x="309" y="438" width="117" height="1" fill="#c6c6c6" />
<rect x="425" y="423" width="1" height="16" fill="#c6c6c6" />
<rect x="308" y="421" width="117" height="1" fill="#95a6b9" />
<rect x="308" y="422" width="117" height="1" fill="#587392" />
<rect x="307" y="422" width="1" height="16" fill="#95a6b9" />
<rect x="308" y="422" width="1" height="16" fill="#587392" />
<svg x="309" y="421" width="116" height="18" overflow="hidden">
<text x="0.5" y="14" font-size="10.6" fill="#000" text-anchor="start" >Lindemann</text>
</svg>
<g transform="translate(430,423)">
 <rect x="0" y="0" width="15" height="16" rx="1.5" fill="#5f7a99"/>
 <rect x="0" y="0" width="14" height="15" rx="1.5" fill="#d3cfd3"/>
 <rect x="1" y="1" width="8" height="1" fill="#1e6fa6"/>
 <rect x="9" y="1" width="1" height="1" fill="#000"/>
 <rect x="1" y="1" width="1" height="7.5" fill="#1e6fa6"/>
 <rect x="1.8" y="8" width="1.5" height="1" fill="#000"/>
 <rect x="3" y="3" width="11" height="1" fill="#000"/>
 <rect x="13" y="3" width="1" height="2" fill="#000"/>
 <rect x="3" y="4" width="10" height="1" fill="#1e6fa6"/>
 <rect x="3" y="5" width="1" height="8" fill="#000"/>
 <rect x="4" y="5" width="7" height="7" fill="#fff"/>
 <rect x="11" y="5" width="1" height="8" fill="#1e6fa6"/>
 <rect x="12" y="5" width="1" height="7" fill="#f4f8fc"/>
 <rect x="12" y="6" width="1" height="2" fill="#000"/>
 <rect x="13" y="5" width="1" height="8" fill="#1e6fa6"/>
 <rect x="4" y="12" width="10" height="1" fill="#1e6fa6"/>
 <path d="M5 7 L7.6 9 L5 11 Z" fill="#0a14ff"/>
 <rect x="8" y="6" width="2.2" height="1" fill="#ff0a0a"/>
 <rect x="8" y="8" width="2.2" height="1" fill="#ff0a0a"/>
 <rect x="8" y="10" width="2.2" height="1" fill="#ff0a0a"/>
</g>
<rect x="446" y="421" width="25" height="18" fill="#fff" />
<rect x="448" y="438" width="23" height="1" fill="#c6c6c6" />
<rect x="470" y="423" width="1" height="16" fill="#c6c6c6" />
<rect x="447" y="421" width="23" height="1" fill="#95a6b9" />
<rect x="447" y="422" width="23" height="1" fill="#587392" />
<rect x="446" y="422" width="1" height="16" fill="#95a6b9" />
<rect x="447" y="422" width="1" height="16" fill="#587392" />
<svg x="448" y="421" width="22" height="18" overflow="hidden">
<text x="0.5" y="14" font-size="11" fill="#000" text-anchor="start" >2</text>
</svg>
<rect x="472" y="421" width="119" height="18" fill="#fff" />
<rect x="474" y="438" width="117" height="1" fill="#c6c6c6" />
<rect x="590" y="423" width="1" height="16" fill="#c6c6c6" />
<rect x="473" y="421" width="117" height="1" fill="#95a6b9" />
<rect x="473" y="422" width="117" height="1" fill="#587392" />
<rect x="472" y="422" width="1" height="16" fill="#95a6b9" />
<rect x="473" y="422" width="1" height="16" fill="#587392" />
<svg x="474" y="421" width="116" height="18" overflow="hidden">
<text x="0.5" y="14" font-size="10.6" fill="#000" text-anchor="start" textLength="114.5" lengthAdjust="spacingAndGlyphs" >Zentrallager BT Leuchte</text>
</svg>
<g transform="translate(594,423)">
 <rect x="0" y="0" width="15" height="16" rx="1.5" fill="#5f7a99"/>
 <rect x="0" y="0" width="14" height="15" rx="1.5" fill="#d3cfd3"/>
 <rect x="1" y="1" width="8" height="1" fill="#1e6fa6"/>
 <rect x="9" y="1" width="1" height="1" fill="#000"/>
 <rect x="1" y="1" width="1" height="7.5" fill="#1e6fa6"/>
 <rect x="1.8" y="8" width="1.5" height="1" fill="#000"/>
 <rect x="3" y="3" width="11" height="1" fill="#000"/>
 <rect x="13" y="3" width="1" height="2" fill="#000"/>
 <rect x="3" y="4" width="10" height="1" fill="#1e6fa6"/>
 <rect x="3" y="5" width="1" height="8" fill="#000"/>
 <rect x="4" y="5" width="7" height="7" fill="#fff"/>
 <rect x="11" y="5" width="1" height="8" fill="#1e6fa6"/>
 <rect x="12" y="5" width="1" height="7" fill="#f4f8fc"/>
 <rect x="12" y="6" width="1" height="2" fill="#000"/>
 <rect x="13" y="5" width="1" height="8" fill="#1e6fa6"/>
 <rect x="4" y="12" width="10" height="1" fill="#1e6fa6"/>
 <path d="M5 7 L7.6 9 L5 11 Z" fill="#0a14ff"/>
 <rect x="8" y="6" width="2.2" height="1" fill="#ff0a0a"/>
 <rect x="8" y="8" width="2.2" height="1" fill="#ff0a0a"/>
 <rect x="8" y="10" width="2.2" height="1" fill="#ff0a0a"/>
</g>
<rect x="612" y="421" width="25" height="18" fill="#fff" />
<rect x="614" y="438" width="23" height="1" fill="#c6c6c6" />
<rect x="636" y="423" width="1" height="16" fill="#c6c6c6" />
<rect x="613" y="421" width="23" height="1" fill="#95a6b9" />
<rect x="613" y="422" width="23" height="1" fill="#587392" />
<rect x="612" y="422" width="1" height="16" fill="#95a6b9" />
<rect x="613" y="422" width="1" height="16" fill="#587392" />
<rect x="638" y="421" width="79" height="18" fill="#fff" />
<rect x="640" y="438" width="77" height="1" fill="#c6c6c6" />
<rect x="716" y="423" width="1" height="16" fill="#c6c6c6" />
<rect x="639" y="421" width="77" height="1" fill="#95a6b9" />
<rect x="639" y="422" width="77" height="1" fill="#587392" />
<rect x="638" y="422" width="1" height="16" fill="#95a6b9" />
<rect x="639" y="422" width="1" height="16" fill="#587392" />
<g transform="translate(720,423)">
 <rect x="0" y="0" width="15" height="16" rx="1.5" fill="#5f7a99"/>
 <rect x="0" y="0" width="14" height="15" rx="1.5" fill="#d3cfd3"/>
 <rect x="1" y="1" width="8" height="1" fill="#1e6fa6"/>
 <rect x="9" y="1" width="1" height="1" fill="#000"/>
 <rect x="1" y="1" width="1" height="7.5" fill="#1e6fa6"/>
 <rect x="1.8" y="8" width="1.5" height="1" fill="#000"/>
 <rect x="3" y="3" width="11" height="1" fill="#000"/>
 <rect x="13" y="3" width="1" height="2" fill="#000"/>
 <rect x="3" y="4" width="10" height="1" fill="#1e6fa6"/>
 <rect x="3" y="5" width="1" height="8" fill="#000"/>
 <rect x="4" y="5" width="7" height="7" fill="#fff"/>
 <rect x="11" y="5" width="1" height="8" fill="#1e6fa6"/>
 <rect x="12" y="5" width="1" height="7" fill="#f4f8fc"/>
 <rect x="12" y="6" width="1" height="2" fill="#000"/>
 <rect x="13" y="5" width="1" height="8" fill="#1e6fa6"/>
 <rect x="4" y="12" width="10" height="1" fill="#1e6fa6"/>
 <path d="M5 7 L7.6 9 L5 11 Z" fill="#0a14ff"/>
 <rect x="8" y="6" width="2.2" height="1" fill="#ff0a0a"/>
 <rect x="8" y="8" width="2.2" height="1" fill="#ff0a0a"/>
 <rect x="8" y="10" width="2.2" height="1" fill="#ff0a0a"/>
</g>
<rect x="737" y="421" width="25" height="18" fill="#fff" />
<rect x="739" y="438" width="23" height="1" fill="#c6c6c6" />
<rect x="761" y="423" width="1" height="16" fill="#c6c6c6" />
<rect x="738" y="421" width="23" height="1" fill="#95a6b9" />
<rect x="738" y="422" width="23" height="1" fill="#587392" />
<rect x="737" y="422" width="1" height="16" fill="#95a6b9" />
<rect x="738" y="422" width="1" height="16" fill="#587392" />
<svg x="739" y="421" width="22" height="18" overflow="hidden">
<text x="20" y="14" font-size="11" fill="#000" text-anchor="end" >0</text>
</svg>
<rect x="790" y="424" width="11" height="1.2" fill="#24344a" />
<rect x="790" y="424" width="1.2" height="11" fill="#24344a" />
<rect x="825" y="423" width="88" height="16" fill="#6f8db0" rx="1.5"/>
<rect x="825" y="423" width="87" height="15" fill="#b9b8be" rx="1.5"/>
<rect x="826" y="424" width="86" height="14" fill="#c6c3c7" />
<svg x="826" y="424" width="86" height="13.5" overflow="hidden">
<text x="41.8" y="10.6" font-size="11" fill="#000" text-anchor="middle" textLength="77.5" lengthAdjust="spacingAndGlyphs" >Bedarfsprüfung</text>
</svg>
<rect x="16" y="440" width="33" height="17" fill="#fff" />
<rect x="18" y="456" width="31" height="1" fill="#c6c6c6" />
<rect x="48" y="442" width="1" height="15" fill="#c6c6c6" />
<rect x="17" y="440" width="31" height="1" fill="#95a6b9" />
<rect x="17" y="441" width="31" height="1" fill="#587392" />
<rect x="16" y="441" width="1" height="15" fill="#95a6b9" />
<rect x="17" y="441" width="1" height="15" fill="#587392" />
<rect x="50" y="440" width="79" height="17" fill="#fff" />
<rect x="52" y="456" width="77" height="1" fill="#c6c6c6" />
<rect x="128" y="442" width="1" height="15" fill="#c6c6c6" />
<rect x="51" y="440" width="77" height="1" fill="#95a6b9" />
<rect x="51" y="441" width="77" height="1" fill="#587392" />
<rect x="50" y="441" width="1" height="15" fill="#95a6b9" />
<rect x="51" y="441" width="1" height="15" fill="#587392" />
<g transform="translate(132,442)">
 <rect x="0" y="0" width="15" height="16" rx="1.5" fill="#7890ab"/>
 <rect x="0" y="0" width="14" height="15" rx="1.5" fill="#d6d4d8"/>
 <rect x="1" y="1" width="8" height="1" fill="#959595"/>
 <rect x="9" y="1" width="1" height="1" fill="#555"/>
 <rect x="1" y="1" width="1" height="7.5" fill="#fff"/>
 <rect x="1.8" y="8" width="1.5" height="1" fill="#777"/>
 <rect x="3" y="3" width="11" height="1" fill="#7c7c7c"/>
 <rect x="3" y="4" width="10" height="1" fill="#aaaaaa"/>
 <rect x="3" y="5" width="1" height="8" fill="#7c7c7c"/>
 <rect x="4" y="5" width="7" height="7" fill="#fff"/>
 <rect x="11" y="5" width="1" height="8" fill="#aaaaaa"/>
 <rect x="12" y="6" width="1" height="2" fill="#7c7c7c"/>
 <rect x="13" y="5" width="1" height="8" fill="#aaaaaa"/>
 <rect x="4" y="12" width="10" height="1" fill="#aaaaaa"/>
 <path d="M5 7 L7.6 9 L5 11 Z" fill="#959595"/>
 <rect x="8" y="6" width="2.2" height="1" fill="#959595"/>
 <rect x="8" y="8" width="2.2" height="1" fill="#959595"/>
 <rect x="8" y="10" width="2.2" height="1" fill="#959595"/>
</g>
<rect x="148" y="440" width="33" height="17" fill="#fff" />
<rect x="150" y="456" width="31" height="1" fill="#c6c6c6" />
<rect x="180" y="442" width="1" height="15" fill="#c6c6c6" />
<rect x="149" y="440" width="31" height="1" fill="#95a6b9" />
<rect x="149" y="441" width="31" height="1" fill="#587392" />
<rect x="148" y="441" width="1" height="15" fill="#95a6b9" />
<rect x="149" y="441" width="1" height="15" fill="#587392" />
<rect x="182" y="440" width="79" height="17" fill="#fff" />
<rect x="184" y="456" width="77" height="1" fill="#c6c6c6" />
<rect x="260" y="442" width="1" height="15" fill="#c6c6c6" />
<rect x="183" y="440" width="77" height="1" fill="#95a6b9" />
<rect x="183" y="441" width="77" height="1" fill="#587392" />
<rect x="182" y="441" width="1" height="15" fill="#95a6b9" />
<rect x="183" y="441" width="1" height="15" fill="#587392" />
<g transform="translate(264,442)">
 <rect x="0" y="0" width="15" height="16" rx="1.5" fill="#7890ab"/>
 <rect x="0" y="0" width="14" height="15" rx="1.5" fill="#d6d4d8"/>
 <rect x="1" y="1" width="8" height="1" fill="#959595"/>
 <rect x="9" y="1" width="1" height="1" fill="#555"/>
 <rect x="1" y="1" width="1" height="7.5" fill="#fff"/>
 <rect x="1.8" y="8" width="1.5" height="1" fill="#777"/>
 <rect x="3" y="3" width="11" height="1" fill="#7c7c7c"/>
 <rect x="3" y="4" width="10" height="1" fill="#aaaaaa"/>
 <rect x="3" y="5" width="1" height="8" fill="#7c7c7c"/>
 <rect x="4" y="5" width="7" height="7" fill="#fff"/>
 <rect x="11" y="5" width="1" height="8" fill="#aaaaaa"/>
 <rect x="12" y="6" width="1" height="2" fill="#7c7c7c"/>
 <rect x="13" y="5" width="1" height="8" fill="#aaaaaa"/>
 <rect x="4" y="12" width="10" height="1" fill="#aaaaaa"/>
 <path d="M5 7 L7.6 9 L5 11 Z" fill="#959595"/>
 <rect x="8" y="6" width="2.2" height="1" fill="#959595"/>
 <rect x="8" y="8" width="2.2" height="1" fill="#959595"/>
 <rect x="8" y="10" width="2.2" height="1" fill="#959595"/>
</g>
<rect x="281" y="440" width="25" height="17" fill="#fff" />
<rect x="283" y="456" width="23" height="1" fill="#c6c6c6" />
<rect x="305" y="442" width="1" height="15" fill="#c6c6c6" />
<rect x="282" y="440" width="23" height="1" fill="#95a6b9" />
<rect x="282" y="441" width="23" height="1" fill="#587392" />
<rect x="281" y="441" width="1" height="15" fill="#95a6b9" />
<rect x="282" y="441" width="1" height="15" fill="#587392" />
<rect x="307" y="440" width="119" height="17" fill="#fff" />
<rect x="309" y="456" width="117" height="1" fill="#c6c6c6" />
<rect x="425" y="442" width="1" height="15" fill="#c6c6c6" />
<rect x="308" y="440" width="117" height="1" fill="#95a6b9" />
<rect x="308" y="441" width="117" height="1" fill="#587392" />
<rect x="307" y="441" width="1" height="15" fill="#95a6b9" />
<rect x="308" y="441" width="1" height="15" fill="#587392" />
<g transform="translate(430,442)">
 <rect x="0" y="0" width="15" height="16" rx="1.5" fill="#7890ab"/>
 <rect x="0" y="0" width="14" height="15" rx="1.5" fill="#d6d4d8"/>
 <rect x="1" y="1" width="8" height="1" fill="#959595"/>
 <rect x="9" y="1" width="1" height="1" fill="#555"/>
 <rect x="1" y="1" width="1" height="7.5" fill="#fff"/>
 <rect x="1.8" y="8" width="1.5" height="1" fill="#777"/>
 <rect x="3" y="3" width="11" height="1" fill="#7c7c7c"/>
 <rect x="3" y="4" width="10" height="1" fill="#aaaaaa"/>
 <rect x="3" y="5" width="1" height="8" fill="#7c7c7c"/>
 <rect x="4" y="5" width="7" height="7" fill="#fff"/>
 <rect x="11" y="5" width="1" height="8" fill="#aaaaaa"/>
 <rect x="12" y="6" width="1" height="2" fill="#7c7c7c"/>
 <rect x="13" y="5" width="1" height="8" fill="#aaaaaa"/>
 <rect x="4" y="12" width="10" height="1" fill="#aaaaaa"/>
 <path d="M5 7 L7.6 9 L5 11 Z" fill="#959595"/>
 <rect x="8" y="6" width="2.2" height="1" fill="#959595"/>
 <rect x="8" y="8" width="2.2" height="1" fill="#959595"/>
 <rect x="8" y="10" width="2.2" height="1" fill="#959595"/>
</g>
<rect x="446" y="440" width="25" height="17" fill="#fff" />
<rect x="448" y="456" width="23" height="1" fill="#c6c6c6" />
<rect x="470" y="442" width="1" height="15" fill="#c6c6c6" />
<rect x="447" y="440" width="23" height="1" fill="#95a6b9" />
<rect x="447" y="441" width="23" height="1" fill="#587392" />
<rect x="446" y="441" width="1" height="15" fill="#95a6b9" />
<rect x="447" y="441" width="1" height="15" fill="#587392" />
<rect x="472" y="440" width="119" height="17" fill="#fff" />
<rect x="474" y="456" width="117" height="1" fill="#c6c6c6" />
<rect x="590" y="442" width="1" height="15" fill="#c6c6c6" />
<rect x="473" y="440" width="117" height="1" fill="#95a6b9" />
<rect x="473" y="441" width="117" height="1" fill="#587392" />
<rect x="472" y="441" width="1" height="15" fill="#95a6b9" />
<rect x="473" y="441" width="1" height="15" fill="#587392" />
<g transform="translate(594,442)">
 <rect x="0" y="0" width="15" height="16" rx="1.5" fill="#7890ab"/>
 <rect x="0" y="0" width="14" height="15" rx="1.5" fill="#d6d4d8"/>
 <rect x="1" y="1" width="8" height="1" fill="#959595"/>
 <rect x="9" y="1" width="1" height="1" fill="#555"/>
 <rect x="1" y="1" width="1" height="7.5" fill="#fff"/>
 <rect x="1.8" y="8" width="1.5" height="1" fill="#777"/>
 <rect x="3" y="3" width="11" height="1" fill="#7c7c7c"/>
 <rect x="3" y="4" width="10" height="1" fill="#aaaaaa"/>
 <rect x="3" y="5" width="1" height="8" fill="#7c7c7c"/>
 <rect x="4" y="5" width="7" height="7" fill="#fff"/>
 <rect x="11" y="5" width="1" height="8" fill="#aaaaaa"/>
 <rect x="12" y="6" width="1" height="2" fill="#7c7c7c"/>
 <rect x="13" y="5" width="1" height="8" fill="#aaaaaa"/>
 <rect x="4" y="12" width="10" height="1" fill="#aaaaaa"/>
 <path d="M5 7 L7.6 9 L5 11 Z" fill="#959595"/>
 <rect x="8" y="6" width="2.2" height="1" fill="#959595"/>
 <rect x="8" y="8" width="2.2" height="1" fill="#959595"/>
 <rect x="8" y="10" width="2.2" height="1" fill="#959595"/>
</g>
<rect x="612" y="440" width="25" height="17" fill="#fff" />
<rect x="614" y="456" width="23" height="1" fill="#c6c6c6" />
<rect x="636" y="442" width="1" height="15" fill="#c6c6c6" />
<rect x="613" y="440" width="23" height="1" fill="#95a6b9" />
<rect x="613" y="441" width="23" height="1" fill="#587392" />
<rect x="612" y="441" width="1" height="15" fill="#95a6b9" />
<rect x="613" y="441" width="1" height="15" fill="#587392" />
<rect x="638" y="440" width="79" height="17" fill="#fff" />
<rect x="640" y="456" width="77" height="1" fill="#c6c6c6" />
<rect x="716" y="442" width="1" height="15" fill="#c6c6c6" />
<rect x="639" y="440" width="77" height="1" fill="#95a6b9" />
<rect x="639" y="441" width="77" height="1" fill="#587392" />
<rect x="638" y="441" width="1" height="15" fill="#95a6b9" />
<rect x="639" y="441" width="1" height="15" fill="#587392" />
<g transform="translate(720,442)">
 <rect x="0" y="0" width="15" height="16" rx="1.5" fill="#7890ab"/>
 <rect x="0" y="0" width="14" height="15" rx="1.5" fill="#d6d4d8"/>
 <rect x="1" y="1" width="8" height="1" fill="#959595"/>
 <rect x="9" y="1" width="1" height="1" fill="#555"/>
 <rect x="1" y="1" width="1" height="7.5" fill="#fff"/>
 <rect x="1.8" y="8" width="1.5" height="1" fill="#777"/>
 <rect x="3" y="3" width="11" height="1" fill="#7c7c7c"/>
 <rect x="3" y="4" width="10" height="1" fill="#aaaaaa"/>
 <rect x="3" y="5" width="1" height="8" fill="#7c7c7c"/>
 <rect x="4" y="5" width="7" height="7" fill="#fff"/>
 <rect x="11" y="5" width="1" height="8" fill="#aaaaaa"/>
 <rect x="12" y="6" width="1" height="2" fill="#7c7c7c"/>
 <rect x="13" y="5" width="1" height="8" fill="#aaaaaa"/>
 <rect x="4" y="12" width="10" height="1" fill="#aaaaaa"/>
 <path d="M5 7 L7.6 9 L5 11 Z" fill="#959595"/>
 <rect x="8" y="6" width="2.2" height="1" fill="#959595"/>
 <rect x="8" y="8" width="2.2" height="1" fill="#959595"/>
 <rect x="8" y="10" width="2.2" height="1" fill="#959595"/>
</g>
<rect x="737" y="440" width="25" height="17" fill="#fff" />
<rect x="739" y="456" width="23" height="1" fill="#c6c6c6" />
<rect x="761" y="442" width="1" height="15" fill="#c6c6c6" />
<rect x="738" y="440" width="23" height="1" fill="#95a6b9" />
<rect x="738" y="441" width="23" height="1" fill="#587392" />
<rect x="737" y="441" width="1" height="15" fill="#95a6b9" />
<rect x="738" y="441" width="1" height="15" fill="#587392" />
<rect x="790" y="443" width="11" height="11" fill="#c9c9cb" />
<rect x="790" y="443" width="11" height="1.2" fill="#24344a" />
<rect x="790" y="443" width="1.2" height="11" fill="#24344a" />
<rect x="825" y="442" width="88" height="15" fill="#6f8db0" rx="1.5"/>
<rect x="825" y="442" width="87" height="14" fill="#b9b8be" rx="1.5"/>
<rect x="826" y="443" width="86" height="13" fill="#c6c3c7" />
<svg x="826" y="443" width="86" height="12.5" overflow="hidden">
<text x="42.8" y="11.6" font-size="11" fill="#ffffff" text-anchor="middle" textLength="77.5" lengthAdjust="spacingAndGlyphs" >Bedarfsprüfung</text>
<text x="41.8" y="10.6" font-size="11" fill="#5d80aa" text-anchor="middle" textLength="77.5" lengthAdjust="spacingAndGlyphs" >Bedarfsprüfung</text>
</svg>
<rect x="16" y="458" width="33" height="18" fill="#fff" />
<rect x="18" y="475" width="31" height="1" fill="#c6c6c6" />
<rect x="48" y="460" width="1" height="16" fill="#c6c6c6" />
<rect x="17" y="458" width="31" height="1" fill="#95a6b9" />
<rect x="17" y="459" width="31" height="1" fill="#587392" />
<rect x="16" y="459" width="1" height="16" fill="#95a6b9" />
<rect x="17" y="459" width="1" height="16" fill="#587392" />
<rect x="50" y="458" width="79" height="18" fill="#fff" />
<rect x="52" y="475" width="77" height="1" fill="#c6c6c6" />
<rect x="128" y="460" width="1" height="16" fill="#c6c6c6" />
<rect x="51" y="458" width="77" height="1" fill="#95a6b9" />
<rect x="51" y="459" width="77" height="1" fill="#587392" />
<rect x="50" y="459" width="1" height="16" fill="#95a6b9" />
<rect x="51" y="459" width="1" height="16" fill="#587392" />
<g transform="translate(132,460)">
 <rect x="0" y="0" width="15" height="16" rx="1.5" fill="#7890ab"/>
 <rect x="0" y="0" width="14" height="15" rx="1.5" fill="#d6d4d8"/>
 <rect x="1" y="1" width="8" height="1" fill="#959595"/>
 <rect x="9" y="1" width="1" height="1" fill="#555"/>
 <rect x="1" y="1" width="1" height="7.5" fill="#fff"/>
 <rect x="1.8" y="8" width="1.5" height="1" fill="#777"/>
 <rect x="3" y="3" width="11" height="1" fill="#7c7c7c"/>
 <rect x="3" y="4" width="10" height="1" fill="#aaaaaa"/>
 <rect x="3" y="5" width="1" height="8" fill="#7c7c7c"/>
 <rect x="4" y="5" width="7" height="7" fill="#fff"/>
 <rect x="11" y="5" width="1" height="8" fill="#aaaaaa"/>
 <rect x="12" y="6" width="1" height="2" fill="#7c7c7c"/>
 <rect x="13" y="5" width="1" height="8" fill="#aaaaaa"/>
 <rect x="4" y="12" width="10" height="1" fill="#aaaaaa"/>
 <path d="M5 7 L7.6 9 L5 11 Z" fill="#959595"/>
 <rect x="8" y="6" width="2.2" height="1" fill="#959595"/>
 <rect x="8" y="8" width="2.2" height="1" fill="#959595"/>
 <rect x="8" y="10" width="2.2" height="1" fill="#959595"/>
</g>
<rect x="148" y="458" width="33" height="18" fill="#fff" />
<rect x="150" y="475" width="31" height="1" fill="#c6c6c6" />
<rect x="180" y="460" width="1" height="16" fill="#c6c6c6" />
<rect x="149" y="458" width="31" height="1" fill="#95a6b9" />
<rect x="149" y="459" width="31" height="1" fill="#587392" />
<rect x="148" y="459" width="1" height="16" fill="#95a6b9" />
<rect x="149" y="459" width="1" height="16" fill="#587392" />
<rect x="182" y="458" width="79" height="18" fill="#fff" />
<rect x="184" y="475" width="77" height="1" fill="#c6c6c6" />
<rect x="260" y="460" width="1" height="16" fill="#c6c6c6" />
<rect x="183" y="458" width="77" height="1" fill="#95a6b9" />
<rect x="183" y="459" width="77" height="1" fill="#587392" />
<rect x="182" y="459" width="1" height="16" fill="#95a6b9" />
<rect x="183" y="459" width="1" height="16" fill="#587392" />
<g transform="translate(264,460)">
 <rect x="0" y="0" width="15" height="16" rx="1.5" fill="#7890ab"/>
 <rect x="0" y="0" width="14" height="15" rx="1.5" fill="#d6d4d8"/>
 <rect x="1" y="1" width="8" height="1" fill="#959595"/>
 <rect x="9" y="1" width="1" height="1" fill="#555"/>
 <rect x="1" y="1" width="1" height="7.5" fill="#fff"/>
 <rect x="1.8" y="8" width="1.5" height="1" fill="#777"/>
 <rect x="3" y="3" width="11" height="1" fill="#7c7c7c"/>
 <rect x="3" y="4" width="10" height="1" fill="#aaaaaa"/>
 <rect x="3" y="5" width="1" height="8" fill="#7c7c7c"/>
 <rect x="4" y="5" width="7" height="7" fill="#fff"/>
 <rect x="11" y="5" width="1" height="8" fill="#aaaaaa"/>
 <rect x="12" y="6" width="1" height="2" fill="#7c7c7c"/>
 <rect x="13" y="5" width="1" height="8" fill="#aaaaaa"/>
 <rect x="4" y="12" width="10" height="1" fill="#aaaaaa"/>
 <path d="M5 7 L7.6 9 L5 11 Z" fill="#959595"/>
 <rect x="8" y="6" width="2.2" height="1" fill="#959595"/>
 <rect x="8" y="8" width="2.2" height="1" fill="#959595"/>
 <rect x="8" y="10" width="2.2" height="1" fill="#959595"/>
</g>
<rect x="281" y="458" width="25" height="18" fill="#fff" />
<rect x="283" y="475" width="23" height="1" fill="#c6c6c6" />
<rect x="305" y="460" width="1" height="16" fill="#c6c6c6" />
<rect x="282" y="458" width="23" height="1" fill="#95a6b9" />
<rect x="282" y="459" width="23" height="1" fill="#587392" />
<rect x="281" y="459" width="1" height="16" fill="#95a6b9" />
<rect x="282" y="459" width="1" height="16" fill="#587392" />
<rect x="307" y="458" width="119" height="18" fill="#fff" />
<rect x="309" y="475" width="117" height="1" fill="#c6c6c6" />
<rect x="425" y="460" width="1" height="16" fill="#c6c6c6" />
<rect x="308" y="458" width="117" height="1" fill="#95a6b9" />
<rect x="308" y="459" width="117" height="1" fill="#587392" />
<rect x="307" y="459" width="1" height="16" fill="#95a6b9" />
<rect x="308" y="459" width="1" height="16" fill="#587392" />
<g transform="translate(430,460)">
 <rect x="0" y="0" width="15" height="16" rx="1.5" fill="#7890ab"/>
 <rect x="0" y="0" width="14" height="15" rx="1.5" fill="#d6d4d8"/>
 <rect x="1" y="1" width="8" height="1" fill="#959595"/>
 <rect x="9" y="1" width="1" height="1" fill="#555"/>
 <rect x="1" y="1" width="1" height="7.5" fill="#fff"/>
 <rect x="1.8" y="8" width="1.5" height="1" fill="#777"/>
 <rect x="3" y="3" width="11" height="1" fill="#7c7c7c"/>
 <rect x="3" y="4" width="10" height="1" fill="#aaaaaa"/>
 <rect x="3" y="5" width="1" height="8" fill="#7c7c7c"/>
 <rect x="4" y="5" width="7" height="7" fill="#fff"/>
 <rect x="11" y="5" width="1" height="8" fill="#aaaaaa"/>
 <rect x="12" y="6" width="1" height="2" fill="#7c7c7c"/>
 <rect x="13" y="5" width="1" height="8" fill="#aaaaaa"/>
 <rect x="4" y="12" width="10" height="1" fill="#aaaaaa"/>
 <path d="M5 7 L7.6 9 L5 11 Z" fill="#959595"/>
 <rect x="8" y="6" width="2.2" height="1" fill="#959595"/>
 <rect x="8" y="8" width="2.2" height="1" fill="#959595"/>
 <rect x="8" y="10" width="2.2" height="1" fill="#959595"/>
</g>
<rect x="446" y="458" width="25" height="18" fill="#fff" />
<rect x="448" y="475" width="23" height="1" fill="#c6c6c6" />
<rect x="470" y="460" width="1" height="16" fill="#c6c6c6" />
<rect x="447" y="458" width="23" height="1" fill="#95a6b9" />
<rect x="447" y="459" width="23" height="1" fill="#587392" />
<rect x="446" y="459" width="1" height="16" fill="#95a6b9" />
<rect x="447" y="459" width="1" height="16" fill="#587392" />
<rect x="472" y="458" width="119" height="18" fill="#fff" />
<rect x="474" y="475" width="117" height="1" fill="#c6c6c6" />
<rect x="590" y="460" width="1" height="16" fill="#c6c6c6" />
<rect x="473" y="458" width="117" height="1" fill="#95a6b9" />
<rect x="473" y="459" width="117" height="1" fill="#587392" />
<rect x="472" y="459" width="1" height="16" fill="#95a6b9" />
<rect x="473" y="459" width="1" height="16" fill="#587392" />
<g transform="translate(594,460)">
 <rect x="0" y="0" width="15" height="16" rx="1.5" fill="#7890ab"/>
 <rect x="0" y="0" width="14" height="15" rx="1.5" fill="#d6d4d8"/>
 <rect x="1" y="1" width="8" height="1" fill="#959595"/>
 <rect x="9" y="1" width="1" height="1" fill="#555"/>
 <rect x="1" y="1" width="1" height="7.5" fill="#fff"/>
 <rect x="1.8" y="8" width="1.5" height="1" fill="#777"/>
 <rect x="3" y="3" width="11" height="1" fill="#7c7c7c"/>
 <rect x="3" y="4" width="10" height="1" fill="#aaaaaa"/>
 <rect x="3" y="5" width="1" height="8" fill="#7c7c7c"/>
 <rect x="4" y="5" width="7" height="7" fill="#fff"/>
 <rect x="11" y="5" width="1" height="8" fill="#aaaaaa"/>
 <rect x="12" y="6" width="1" height="2" fill="#7c7c7c"/>
 <rect x="13" y="5" width="1" height="8" fill="#aaaaaa"/>
 <rect x="4" y="12" width="10" height="1" fill="#aaaaaa"/>
 <path d="M5 7 L7.6 9 L5 11 Z" fill="#959595"/>
 <rect x="8" y="6" width="2.2" height="1" fill="#959595"/>
 <rect x="8" y="8" width="2.2" height="1" fill="#959595"/>
 <rect x="8" y="10" width="2.2" height="1" fill="#959595"/>
</g>
<rect x="612" y="458" width="25" height="18" fill="#fff" />
<rect x="614" y="475" width="23" height="1" fill="#c6c6c6" />
<rect x="636" y="460" width="1" height="16" fill="#c6c6c6" />
<rect x="613" y="458" width="23" height="1" fill="#95a6b9" />
<rect x="613" y="459" width="23" height="1" fill="#587392" />
<rect x="612" y="459" width="1" height="16" fill="#95a6b9" />
<rect x="613" y="459" width="1" height="16" fill="#587392" />
<rect x="638" y="458" width="79" height="18" fill="#fff" />
<rect x="640" y="475" width="77" height="1" fill="#c6c6c6" />
<rect x="716" y="460" width="1" height="16" fill="#c6c6c6" />
<rect x="639" y="458" width="77" height="1" fill="#95a6b9" />
<rect x="639" y="459" width="77" height="1" fill="#587392" />
<rect x="638" y="459" width="1" height="16" fill="#95a6b9" />
<rect x="639" y="459" width="1" height="16" fill="#587392" />
<g transform="translate(720,460)">
 <rect x="0" y="0" width="15" height="16" rx="1.5" fill="#7890ab"/>
 <rect x="0" y="0" width="14" height="15" rx="1.5" fill="#d6d4d8"/>
 <rect x="1" y="1" width="8" height="1" fill="#959595"/>
 <rect x="9" y="1" width="1" height="1" fill="#555"/>
 <rect x="1" y="1" width="1" height="7.5" fill="#fff"/>
 <rect x="1.8" y="8" width="1.5" height="1" fill="#777"/>
 <rect x="3" y="3" width="11" height="1" fill="#7c7c7c"/>
 <rect x="3" y="4" width="10" height="1" fill="#aaaaaa"/>
 <rect x="3" y="5" width="1" height="8" fill="#7c7c7c"/>
 <rect x="4" y="5" width="7" height="7" fill="#fff"/>
 <rect x="11" y="5" width="1" height="8" fill="#aaaaaa"/>
 <rect x="12" y="6" width="1" height="2" fill="#7c7c7c"/>
 <rect x="13" y="5" width="1" height="8" fill="#aaaaaa"/>
 <rect x="4" y="12" width="10" height="1" fill="#aaaaaa"/>
 <path d="M5 7 L7.6 9 L5 11 Z" fill="#959595"/>
 <rect x="8" y="6" width="2.2" height="1" fill="#959595"/>
 <rect x="8" y="8" width="2.2" height="1" fill="#959595"/>
 <rect x="8" y="10" width="2.2" height="1" fill="#959595"/>
</g>
<rect x="737" y="458" width="25" height="18" fill="#fff" />
<rect x="739" y="475" width="23" height="1" fill="#c6c6c6" />
<rect x="761" y="460" width="1" height="16" fill="#c6c6c6" />
<rect x="738" y="458" width="23" height="1" fill="#95a6b9" />
<rect x="738" y="459" width="23" height="1" fill="#587392" />
<rect x="737" y="459" width="1" height="16" fill="#95a6b9" />
<rect x="738" y="459" width="1" height="16" fill="#587392" />
<rect x="790" y="461" width="11" height="11" fill="#c9c9cb" />
<rect x="790" y="461" width="11" height="1.2" fill="#24344a" />
<rect x="790" y="461" width="1.2" height="11" fill="#24344a" />
<rect x="825" y="460" width="88" height="16" fill="#6f8db0" rx="1.5"/>
<rect x="825" y="460" width="87" height="15" fill="#b9b8be" rx="1.5"/>
<rect x="826" y="461" width="86" height="14" fill="#c6c3c7" />
<svg x="826" y="461" width="86" height="13.5" overflow="hidden">
<text x="42.8" y="11.6" font-size="11" fill="#ffffff" text-anchor="middle" textLength="77.5" lengthAdjust="spacingAndGlyphs" >Bedarfsprüfung</text>
<text x="41.8" y="10.6" font-size="11" fill="#5d80aa" text-anchor="middle" textLength="77.5" lengthAdjust="spacingAndGlyphs" >Bedarfsprüfung</text>
</svg>
<rect x="16" y="477" width="33" height="18" fill="#fff" />
<rect x="18" y="494" width="31" height="1" fill="#c6c6c6" />
<rect x="48" y="479" width="1" height="16" fill="#c6c6c6" />
<rect x="17" y="477" width="31" height="1" fill="#95a6b9" />
<rect x="17" y="478" width="31" height="1" fill="#587392" />
<rect x="16" y="478" width="1" height="16" fill="#95a6b9" />
<rect x="17" y="478" width="1" height="16" fill="#587392" />
<rect x="50" y="477" width="79" height="18" fill="#fff" />
<rect x="52" y="494" width="77" height="1" fill="#c6c6c6" />
<rect x="128" y="479" width="1" height="16" fill="#c6c6c6" />
<rect x="51" y="477" width="77" height="1" fill="#95a6b9" />
<rect x="51" y="478" width="77" height="1" fill="#587392" />
<rect x="50" y="478" width="1" height="16" fill="#95a6b9" />
<rect x="51" y="478" width="1" height="16" fill="#587392" />
<g transform="translate(132,479)">
 <rect x="0" y="0" width="15" height="16" rx="1.5" fill="#7890ab"/>
 <rect x="0" y="0" width="14" height="15" rx="1.5" fill="#d6d4d8"/>
 <rect x="1" y="1" width="8" height="1" fill="#959595"/>
 <rect x="9" y="1" width="1" height="1" fill="#555"/>
 <rect x="1" y="1" width="1" height="7.5" fill="#fff"/>
 <rect x="1.8" y="8" width="1.5" height="1" fill="#777"/>
 <rect x="3" y="3" width="11" height="1" fill="#7c7c7c"/>
 <rect x="3" y="4" width="10" height="1" fill="#aaaaaa"/>
 <rect x="3" y="5" width="1" height="8" fill="#7c7c7c"/>
 <rect x="4" y="5" width="7" height="7" fill="#fff"/>
 <rect x="11" y="5" width="1" height="8" fill="#aaaaaa"/>
 <rect x="12" y="6" width="1" height="2" fill="#7c7c7c"/>
 <rect x="13" y="5" width="1" height="8" fill="#aaaaaa"/>
 <rect x="4" y="12" width="10" height="1" fill="#aaaaaa"/>
 <path d="M5 7 L7.6 9 L5 11 Z" fill="#959595"/>
 <rect x="8" y="6" width="2.2" height="1" fill="#959595"/>
 <rect x="8" y="8" width="2.2" height="1" fill="#959595"/>
 <rect x="8" y="10" width="2.2" height="1" fill="#959595"/>
</g>
<rect x="148" y="477" width="33" height="18" fill="#fff" />
<rect x="150" y="494" width="31" height="1" fill="#c6c6c6" />
<rect x="180" y="479" width="1" height="16" fill="#c6c6c6" />
<rect x="149" y="477" width="31" height="1" fill="#95a6b9" />
<rect x="149" y="478" width="31" height="1" fill="#587392" />
<rect x="148" y="478" width="1" height="16" fill="#95a6b9" />
<rect x="149" y="478" width="1" height="16" fill="#587392" />
<rect x="182" y="477" width="79" height="18" fill="#fff" />
<rect x="184" y="494" width="77" height="1" fill="#c6c6c6" />
<rect x="260" y="479" width="1" height="16" fill="#c6c6c6" />
<rect x="183" y="477" width="77" height="1" fill="#95a6b9" />
<rect x="183" y="478" width="77" height="1" fill="#587392" />
<rect x="182" y="478" width="1" height="16" fill="#95a6b9" />
<rect x="183" y="478" width="1" height="16" fill="#587392" />
<g transform="translate(264,479)">
 <rect x="0" y="0" width="15" height="16" rx="1.5" fill="#7890ab"/>
 <rect x="0" y="0" width="14" height="15" rx="1.5" fill="#d6d4d8"/>
 <rect x="1" y="1" width="8" height="1" fill="#959595"/>
 <rect x="9" y="1" width="1" height="1" fill="#555"/>
 <rect x="1" y="1" width="1" height="7.5" fill="#fff"/>
 <rect x="1.8" y="8" width="1.5" height="1" fill="#777"/>
 <rect x="3" y="3" width="11" height="1" fill="#7c7c7c"/>
 <rect x="3" y="4" width="10" height="1" fill="#aaaaaa"/>
 <rect x="3" y="5" width="1" height="8" fill="#7c7c7c"/>
 <rect x="4" y="5" width="7" height="7" fill="#fff"/>
 <rect x="11" y="5" width="1" height="8" fill="#aaaaaa"/>
 <rect x="12" y="6" width="1" height="2" fill="#7c7c7c"/>
 <rect x="13" y="5" width="1" height="8" fill="#aaaaaa"/>
 <rect x="4" y="12" width="10" height="1" fill="#aaaaaa"/>
 <path d="M5 7 L7.6 9 L5 11 Z" fill="#959595"/>
 <rect x="8" y="6" width="2.2" height="1" fill="#959595"/>
 <rect x="8" y="8" width="2.2" height="1" fill="#959595"/>
 <rect x="8" y="10" width="2.2" height="1" fill="#959595"/>
</g>
<rect x="281" y="477" width="25" height="18" fill="#fff" />
<rect x="283" y="494" width="23" height="1" fill="#c6c6c6" />
<rect x="305" y="479" width="1" height="16" fill="#c6c6c6" />
<rect x="282" y="477" width="23" height="1" fill="#95a6b9" />
<rect x="282" y="478" width="23" height="1" fill="#587392" />
<rect x="281" y="478" width="1" height="16" fill="#95a6b9" />
<rect x="282" y="478" width="1" height="16" fill="#587392" />
<rect x="307" y="477" width="119" height="18" fill="#fff" />
<rect x="309" y="494" width="117" height="1" fill="#c6c6c6" />
<rect x="425" y="479" width="1" height="16" fill="#c6c6c6" />
<rect x="308" y="477" width="117" height="1" fill="#95a6b9" />
<rect x="308" y="478" width="117" height="1" fill="#587392" />
<rect x="307" y="478" width="1" height="16" fill="#95a6b9" />
<rect x="308" y="478" width="1" height="16" fill="#587392" />
<g transform="translate(430,479)">
 <rect x="0" y="0" width="15" height="16" rx="1.5" fill="#7890ab"/>
 <rect x="0" y="0" width="14" height="15" rx="1.5" fill="#d6d4d8"/>
 <rect x="1" y="1" width="8" height="1" fill="#959595"/>
 <rect x="9" y="1" width="1" height="1" fill="#555"/>
 <rect x="1" y="1" width="1" height="7.5" fill="#fff"/>
 <rect x="1.8" y="8" width="1.5" height="1" fill="#777"/>
 <rect x="3" y="3" width="11" height="1" fill="#7c7c7c"/>
 <rect x="3" y="4" width="10" height="1" fill="#aaaaaa"/>
 <rect x="3" y="5" width="1" height="8" fill="#7c7c7c"/>
 <rect x="4" y="5" width="7" height="7" fill="#fff"/>
 <rect x="11" y="5" width="1" height="8" fill="#aaaaaa"/>
 <rect x="12" y="6" width="1" height="2" fill="#7c7c7c"/>
 <rect x="13" y="5" width="1" height="8" fill="#aaaaaa"/>
 <rect x="4" y="12" width="10" height="1" fill="#aaaaaa"/>
 <path d="M5 7 L7.6 9 L5 11 Z" fill="#959595"/>
 <rect x="8" y="6" width="2.2" height="1" fill="#959595"/>
 <rect x="8" y="8" width="2.2" height="1" fill="#959595"/>
 <rect x="8" y="10" width="2.2" height="1" fill="#959595"/>
</g>
<rect x="446" y="477" width="25" height="18" fill="#fff" />
<rect x="448" y="494" width="23" height="1" fill="#c6c6c6" />
<rect x="470" y="479" width="1" height="16" fill="#c6c6c6" />
<rect x="447" y="477" width="23" height="1" fill="#95a6b9" />
<rect x="447" y="478" width="23" height="1" fill="#587392" />
<rect x="446" y="478" width="1" height="16" fill="#95a6b9" />
<rect x="447" y="478" width="1" height="16" fill="#587392" />
<rect x="472" y="477" width="119" height="18" fill="#fff" />
<rect x="474" y="494" width="117" height="1" fill="#c6c6c6" />
<rect x="590" y="479" width="1" height="16" fill="#c6c6c6" />
<rect x="473" y="477" width="117" height="1" fill="#95a6b9" />
<rect x="473" y="478" width="117" height="1" fill="#587392" />
<rect x="472" y="478" width="1" height="16" fill="#95a6b9" />
<rect x="473" y="478" width="1" height="16" fill="#587392" />
<g transform="translate(594,479)">
 <rect x="0" y="0" width="15" height="16" rx="1.5" fill="#7890ab"/>
 <rect x="0" y="0" width="14" height="15" rx="1.5" fill="#d6d4d8"/>
 <rect x="1" y="1" width="8" height="1" fill="#959595"/>
 <rect x="9" y="1" width="1" height="1" fill="#555"/>
 <rect x="1" y="1" width="1" height="7.5" fill="#fff"/>
 <rect x="1.8" y="8" width="1.5" height="1" fill="#777"/>
 <rect x="3" y="3" width="11" height="1" fill="#7c7c7c"/>
 <rect x="3" y="4" width="10" height="1" fill="#aaaaaa"/>
 <rect x="3" y="5" width="1" height="8" fill="#7c7c7c"/>
 <rect x="4" y="5" width="7" height="7" fill="#fff"/>
 <rect x="11" y="5" width="1" height="8" fill="#aaaaaa"/>
 <rect x="12" y="6" width="1" height="2" fill="#7c7c7c"/>
 <rect x="13" y="5" width="1" height="8" fill="#aaaaaa"/>
 <rect x="4" y="12" width="10" height="1" fill="#aaaaaa"/>
 <path d="M5 7 L7.6 9 L5 11 Z" fill="#959595"/>
 <rect x="8" y="6" width="2.2" height="1" fill="#959595"/>
 <rect x="8" y="8" width="2.2" height="1" fill="#959595"/>
 <rect x="8" y="10" width="2.2" height="1" fill="#959595"/>
</g>
<rect x="612" y="477" width="25" height="18" fill="#fff" />
<rect x="614" y="494" width="23" height="1" fill="#c6c6c6" />
<rect x="636" y="479" width="1" height="16" fill="#c6c6c6" />
<rect x="613" y="477" width="23" height="1" fill="#95a6b9" />
<rect x="613" y="478" width="23" height="1" fill="#587392" />
<rect x="612" y="478" width="1" height="16" fill="#95a6b9" />
<rect x="613" y="478" width="1" height="16" fill="#587392" />
<rect x="638" y="477" width="79" height="18" fill="#fff" />
<rect x="640" y="494" width="77" height="1" fill="#c6c6c6" />
<rect x="716" y="479" width="1" height="16" fill="#c6c6c6" />
<rect x="639" y="477" width="77" height="1" fill="#95a6b9" />
<rect x="639" y="478" width="77" height="1" fill="#587392" />
<rect x="638" y="478" width="1" height="16" fill="#95a6b9" />
<rect x="639" y="478" width="1" height="16" fill="#587392" />
<g transform="translate(720,479)">
 <rect x="0" y="0" width="15" height="16" rx="1.5" fill="#7890ab"/>
 <rect x="0" y="0" width="14" height="15" rx="1.5" fill="#d6d4d8"/>
 <rect x="1" y="1" width="8" height="1" fill="#959595"/>
 <rect x="9" y="1" width="1" height="1" fill="#555"/>
 <rect x="1" y="1" width="1" height="7.5" fill="#fff"/>
 <rect x="1.8" y="8" width="1.5" height="1" fill="#777"/>
 <rect x="3" y="3" width="11" height="1" fill="#7c7c7c"/>
 <rect x="3" y="4" width="10" height="1" fill="#aaaaaa"/>
 <rect x="3" y="5" width="1" height="8" fill="#7c7c7c"/>
 <rect x="4" y="5" width="7" height="7" fill="#fff"/>
 <rect x="11" y="5" width="1" height="8" fill="#aaaaaa"/>
 <rect x="12" y="6" width="1" height="2" fill="#7c7c7c"/>
 <rect x="13" y="5" width="1" height="8" fill="#aaaaaa"/>
 <rect x="4" y="12" width="10" height="1" fill="#aaaaaa"/>
 <path d="M5 7 L7.6 9 L5 11 Z" fill="#959595"/>
 <rect x="8" y="6" width="2.2" height="1" fill="#959595"/>
 <rect x="8" y="8" width="2.2" height="1" fill="#959595"/>
 <rect x="8" y="10" width="2.2" height="1" fill="#959595"/>
</g>
<rect x="737" y="477" width="25" height="18" fill="#fff" />
<rect x="739" y="494" width="23" height="1" fill="#c6c6c6" />
<rect x="761" y="479" width="1" height="16" fill="#c6c6c6" />
<rect x="738" y="477" width="23" height="1" fill="#95a6b9" />
<rect x="738" y="478" width="23" height="1" fill="#587392" />
<rect x="737" y="478" width="1" height="16" fill="#95a6b9" />
<rect x="738" y="478" width="1" height="16" fill="#587392" />
<rect x="790" y="480" width="11" height="11" fill="#c9c9cb" />
<rect x="790" y="480" width="11" height="1.2" fill="#24344a" />
<rect x="790" y="480" width="1.2" height="11" fill="#24344a" />
<rect x="825" y="479" width="88" height="16" fill="#6f8db0" rx="1.5"/>
<rect x="825" y="479" width="87" height="15" fill="#b9b8be" rx="1.5"/>
<rect x="826" y="480" width="86" height="14" fill="#c6c3c7" />
<svg x="826" y="480" width="86" height="13.5" overflow="hidden">
<text x="42.8" y="11.6" font-size="11" fill="#ffffff" text-anchor="middle" textLength="77.5" lengthAdjust="spacingAndGlyphs" >Bedarfsprüfung</text>
<text x="41.8" y="10.6" font-size="11" fill="#5d80aa" text-anchor="middle" textLength="77.5" lengthAdjust="spacingAndGlyphs" >Bedarfsprüfung</text>
</svg>
<rect x="16" y="496" width="33" height="17" fill="#fff" />
<rect x="18" y="512" width="31" height="1" fill="#c6c6c6" />
<rect x="48" y="498" width="1" height="15" fill="#c6c6c6" />
<rect x="17" y="496" width="31" height="1" fill="#95a6b9" />
<rect x="17" y="497" width="31" height="1" fill="#587392" />
<rect x="16" y="497" width="1" height="15" fill="#95a6b9" />
<rect x="17" y="497" width="1" height="15" fill="#587392" />
<rect x="50" y="496" width="79" height="17" fill="#fff" />
<rect x="52" y="512" width="77" height="1" fill="#c6c6c6" />
<rect x="128" y="498" width="1" height="15" fill="#c6c6c6" />
<rect x="51" y="496" width="77" height="1" fill="#95a6b9" />
<rect x="51" y="497" width="77" height="1" fill="#587392" />
<rect x="50" y="497" width="1" height="15" fill="#95a6b9" />
<rect x="51" y="497" width="1" height="15" fill="#587392" />
<g transform="translate(132,498)">
 <rect x="0" y="0" width="15" height="16" rx="1.5" fill="#7890ab"/>
 <rect x="0" y="0" width="14" height="15" rx="1.5" fill="#d6d4d8"/>
 <rect x="1" y="1" width="8" height="1" fill="#959595"/>
 <rect x="9" y="1" width="1" height="1" fill="#555"/>
 <rect x="1" y="1" width="1" height="7.5" fill="#fff"/>
 <rect x="1.8" y="8" width="1.5" height="1" fill="#777"/>
 <rect x="3" y="3" width="11" height="1" fill="#7c7c7c"/>
 <rect x="3" y="4" width="10" height="1" fill="#aaaaaa"/>
 <rect x="3" y="5" width="1" height="8" fill="#7c7c7c"/>
 <rect x="4" y="5" width="7" height="7" fill="#fff"/>
 <rect x="11" y="5" width="1" height="8" fill="#aaaaaa"/>
 <rect x="12" y="6" width="1" height="2" fill="#7c7c7c"/>
 <rect x="13" y="5" width="1" height="8" fill="#aaaaaa"/>
 <rect x="4" y="12" width="10" height="1" fill="#aaaaaa"/>
 <path d="M5 7 L7.6 9 L5 11 Z" fill="#959595"/>
 <rect x="8" y="6" width="2.2" height="1" fill="#959595"/>
 <rect x="8" y="8" width="2.2" height="1" fill="#959595"/>
 <rect x="8" y="10" width="2.2" height="1" fill="#959595"/>
</g>
<rect x="148" y="496" width="33" height="17" fill="#fff" />
<rect x="150" y="512" width="31" height="1" fill="#c6c6c6" />
<rect x="180" y="498" width="1" height="15" fill="#c6c6c6" />
<rect x="149" y="496" width="31" height="1" fill="#95a6b9" />
<rect x="149" y="497" width="31" height="1" fill="#587392" />
<rect x="148" y="497" width="1" height="15" fill="#95a6b9" />
<rect x="149" y="497" width="1" height="15" fill="#587392" />
<rect x="182" y="496" width="79" height="17" fill="#fff" />
<rect x="184" y="512" width="77" height="1" fill="#c6c6c6" />
<rect x="260" y="498" width="1" height="15" fill="#c6c6c6" />
<rect x="183" y="496" width="77" height="1" fill="#95a6b9" />
<rect x="183" y="497" width="77" height="1" fill="#587392" />
<rect x="182" y="497" width="1" height="15" fill="#95a6b9" />
<rect x="183" y="497" width="1" height="15" fill="#587392" />
<g transform="translate(264,498)">
 <rect x="0" y="0" width="15" height="16" rx="1.5" fill="#7890ab"/>
 <rect x="0" y="0" width="14" height="15" rx="1.5" fill="#d6d4d8"/>
 <rect x="1" y="1" width="8" height="1" fill="#959595"/>
 <rect x="9" y="1" width="1" height="1" fill="#555"/>
 <rect x="1" y="1" width="1" height="7.5" fill="#fff"/>
 <rect x="1.8" y="8" width="1.5" height="1" fill="#777"/>
 <rect x="3" y="3" width="11" height="1" fill="#7c7c7c"/>
 <rect x="3" y="4" width="10" height="1" fill="#aaaaaa"/>
 <rect x="3" y="5" width="1" height="8" fill="#7c7c7c"/>
 <rect x="4" y="5" width="7" height="7" fill="#fff"/>
 <rect x="11" y="5" width="1" height="8" fill="#aaaaaa"/>
 <rect x="12" y="6" width="1" height="2" fill="#7c7c7c"/>
 <rect x="13" y="5" width="1" height="8" fill="#aaaaaa"/>
 <rect x="4" y="12" width="10" height="1" fill="#aaaaaa"/>
 <path d="M5 7 L7.6 9 L5 11 Z" fill="#959595"/>
 <rect x="8" y="6" width="2.2" height="1" fill="#959595"/>
 <rect x="8" y="8" width="2.2" height="1" fill="#959595"/>
 <rect x="8" y="10" width="2.2" height="1" fill="#959595"/>
</g>
<rect x="281" y="496" width="25" height="17" fill="#fff" />
<rect x="283" y="512" width="23" height="1" fill="#c6c6c6" />
<rect x="305" y="498" width="1" height="15" fill="#c6c6c6" />
<rect x="282" y="496" width="23" height="1" fill="#95a6b9" />
<rect x="282" y="497" width="23" height="1" fill="#587392" />
<rect x="281" y="497" width="1" height="15" fill="#95a6b9" />
<rect x="282" y="497" width="1" height="15" fill="#587392" />
<rect x="307" y="496" width="119" height="17" fill="#fff" />
<rect x="309" y="512" width="117" height="1" fill="#c6c6c6" />
<rect x="425" y="498" width="1" height="15" fill="#c6c6c6" />
<rect x="308" y="496" width="117" height="1" fill="#95a6b9" />
<rect x="308" y="497" width="117" height="1" fill="#587392" />
<rect x="307" y="497" width="1" height="15" fill="#95a6b9" />
<rect x="308" y="497" width="1" height="15" fill="#587392" />
<g transform="translate(430,498)">
 <rect x="0" y="0" width="15" height="16" rx="1.5" fill="#7890ab"/>
 <rect x="0" y="0" width="14" height="15" rx="1.5" fill="#d6d4d8"/>
 <rect x="1" y="1" width="8" height="1" fill="#959595"/>
 <rect x="9" y="1" width="1" height="1" fill="#555"/>
 <rect x="1" y="1" width="1" height="7.5" fill="#fff"/>
 <rect x="1.8" y="8" width="1.5" height="1" fill="#777"/>
 <rect x="3" y="3" width="11" height="1" fill="#7c7c7c"/>
 <rect x="3" y="4" width="10" height="1" fill="#aaaaaa"/>
 <rect x="3" y="5" width="1" height="8" fill="#7c7c7c"/>
 <rect x="4" y="5" width="7" height="7" fill="#fff"/>
 <rect x="11" y="5" width="1" height="8" fill="#aaaaaa"/>
 <rect x="12" y="6" width="1" height="2" fill="#7c7c7c"/>
 <rect x="13" y="5" width="1" height="8" fill="#aaaaaa"/>
 <rect x="4" y="12" width="10" height="1" fill="#aaaaaa"/>
 <path d="M5 7 L7.6 9 L5 11 Z" fill="#959595"/>
 <rect x="8" y="6" width="2.2" height="1" fill="#959595"/>
 <rect x="8" y="8" width="2.2" height="1" fill="#959595"/>
 <rect x="8" y="10" width="2.2" height="1" fill="#959595"/>
</g>
<rect x="446" y="496" width="25" height="17" fill="#fff" />
<rect x="448" y="512" width="23" height="1" fill="#c6c6c6" />
<rect x="470" y="498" width="1" height="15" fill="#c6c6c6" />
<rect x="447" y="496" width="23" height="1" fill="#95a6b9" />
<rect x="447" y="497" width="23" height="1" fill="#587392" />
<rect x="446" y="497" width="1" height="15" fill="#95a6b9" />
<rect x="447" y="497" width="1" height="15" fill="#587392" />
<rect x="472" y="496" width="119" height="17" fill="#fff" />
<rect x="474" y="512" width="117" height="1" fill="#c6c6c6" />
<rect x="590" y="498" width="1" height="15" fill="#c6c6c6" />
<rect x="473" y="496" width="117" height="1" fill="#95a6b9" />
<rect x="473" y="497" width="117" height="1" fill="#587392" />
<rect x="472" y="497" width="1" height="15" fill="#95a6b9" />
<rect x="473" y="497" width="1" height="15" fill="#587392" />
<g transform="translate(594,498)">
 <rect x="0" y="0" width="15" height="16" rx="1.5" fill="#7890ab"/>
 <rect x="0" y="0" width="14" height="15" rx="1.5" fill="#d6d4d8"/>
 <rect x="1" y="1" width="8" height="1" fill="#959595"/>
 <rect x="9" y="1" width="1" height="1" fill="#555"/>
 <rect x="1" y="1" width="1" height="7.5" fill="#fff"/>
 <rect x="1.8" y="8" width="1.5" height="1" fill="#777"/>
 <rect x="3" y="3" width="11" height="1" fill="#7c7c7c"/>
 <rect x="3" y="4" width="10" height="1" fill="#aaaaaa"/>
 <rect x="3" y="5" width="1" height="8" fill="#7c7c7c"/>
 <rect x="4" y="5" width="7" height="7" fill="#fff"/>
 <rect x="11" y="5" width="1" height="8" fill="#aaaaaa"/>
 <rect x="12" y="6" width="1" height="2" fill="#7c7c7c"/>
 <rect x="13" y="5" width="1" height="8" fill="#aaaaaa"/>
 <rect x="4" y="12" width="10" height="1" fill="#aaaaaa"/>
 <path d="M5 7 L7.6 9 L5 11 Z" fill="#959595"/>
 <rect x="8" y="6" width="2.2" height="1" fill="#959595"/>
 <rect x="8" y="8" width="2.2" height="1" fill="#959595"/>
 <rect x="8" y="10" width="2.2" height="1" fill="#959595"/>
</g>
<rect x="612" y="496" width="25" height="17" fill="#fff" />
<rect x="614" y="512" width="23" height="1" fill="#c6c6c6" />
<rect x="636" y="498" width="1" height="15" fill="#c6c6c6" />
<rect x="613" y="496" width="23" height="1" fill="#95a6b9" />
<rect x="613" y="497" width="23" height="1" fill="#587392" />
<rect x="612" y="497" width="1" height="15" fill="#95a6b9" />
<rect x="613" y="497" width="1" height="15" fill="#587392" />
<rect x="638" y="496" width="79" height="17" fill="#fff" />
<rect x="640" y="512" width="77" height="1" fill="#c6c6c6" />
<rect x="716" y="498" width="1" height="15" fill="#c6c6c6" />
<rect x="639" y="496" width="77" height="1" fill="#95a6b9" />
<rect x="639" y="497" width="77" height="1" fill="#587392" />
<rect x="638" y="497" width="1" height="15" fill="#95a6b9" />
<rect x="639" y="497" width="1" height="15" fill="#587392" />
<g transform="translate(720,498)">
 <rect x="0" y="0" width="15" height="16" rx="1.5" fill="#7890ab"/>
 <rect x="0" y="0" width="14" height="15" rx="1.5" fill="#d6d4d8"/>
 <rect x="1" y="1" width="8" height="1" fill="#959595"/>
 <rect x="9" y="1" width="1" height="1" fill="#555"/>
 <rect x="1" y="1" width="1" height="7.5" fill="#fff"/>
 <rect x="1.8" y="8" width="1.5" height="1" fill="#777"/>
 <rect x="3" y="3" width="11" height="1" fill="#7c7c7c"/>
 <rect x="3" y="4" width="10" height="1" fill="#aaaaaa"/>
 <rect x="3" y="5" width="1" height="8" fill="#7c7c7c"/>
 <rect x="4" y="5" width="7" height="7" fill="#fff"/>
 <rect x="11" y="5" width="1" height="8" fill="#aaaaaa"/>
 <rect x="12" y="6" width="1" height="2" fill="#7c7c7c"/>
 <rect x="13" y="5" width="1" height="8" fill="#aaaaaa"/>
 <rect x="4" y="12" width="10" height="1" fill="#aaaaaa"/>
 <path d="M5 7 L7.6 9 L5 11 Z" fill="#959595"/>
 <rect x="8" y="6" width="2.2" height="1" fill="#959595"/>
 <rect x="8" y="8" width="2.2" height="1" fill="#959595"/>
 <rect x="8" y="10" width="2.2" height="1" fill="#959595"/>
</g>
<rect x="737" y="496" width="25" height="17" fill="#fff" />
<rect x="739" y="512" width="23" height="1" fill="#c6c6c6" />
<rect x="761" y="498" width="1" height="15" fill="#c6c6c6" />
<rect x="738" y="496" width="23" height="1" fill="#95a6b9" />
<rect x="738" y="497" width="23" height="1" fill="#587392" />
<rect x="737" y="497" width="1" height="15" fill="#95a6b9" />
<rect x="738" y="497" width="1" height="15" fill="#587392" />
<rect x="790" y="499" width="11" height="11" fill="#c9c9cb" />
<rect x="790" y="499" width="11" height="1.2" fill="#24344a" />
<rect x="790" y="499" width="1.2" height="11" fill="#24344a" />
<rect x="825" y="498" width="88" height="15" fill="#6f8db0" rx="1.5"/>
<rect x="825" y="498" width="87" height="14" fill="#b9b8be" rx="1.5"/>
<rect x="826" y="499" width="86" height="13" fill="#c6c3c7" />
<svg x="826" y="499" width="86" height="12.5" overflow="hidden">
<text x="42.8" y="11.6" font-size="11" fill="#ffffff" text-anchor="middle" textLength="77.5" lengthAdjust="spacingAndGlyphs" >Bedarfsprüfung</text>
<text x="41.8" y="10.6" font-size="11" fill="#5d80aa" text-anchor="middle" textLength="77.5" lengthAdjust="spacingAndGlyphs" >Bedarfsprüfung</text>
</svg>
<rect x="920.1" y="329.0" width="13.0" height="183.5" rx="6.5" fill="#cbcbcd" stroke="#8a9cb2" stroke-width="1"/>
<rect x="920.6" y="342.5" width="12.0" height="1" fill="#6f8db0" />
<rect x="920.6" y="343.5" width="12.0" height="1" fill="#ffffff" />
<rect x="920.6" y="497" width="12.0" height="1" fill="#ffffff" />
<rect x="920.6" y="498" width="12.0" height="1" fill="#6f8db0" />
<path d="M922.9 338.0 L930.3000000000001 338.0 L926.6 334.0 Z" fill="#5b7696"/>
<path d="M922.9 503.5 L930.3000000000001 503.5 L926.6 507.5 Z" fill="#5b7696"/>
<rect x="928.6" y="395" width="2" height="2" fill="#ffffff" />
<rect x="929.6" y="396" width="1" height="1" fill="#8fa0b4" />
<rect x="923.6" y="398.9" width="2" height="2" fill="#ffffff" />
<rect x="924.6" y="399.9" width="1" height="1" fill="#8fa0b4" />
<rect x="928.6" y="402.79999999999995" width="2" height="2" fill="#ffffff" />
<rect x="929.6" y="403.79999999999995" width="1" height="1" fill="#8fa0b4" />
<rect x="923.6" y="406.69999999999993" width="2" height="2" fill="#ffffff" />
<rect x="924.6" y="407.69999999999993" width="1" height="1" fill="#8fa0b4" />
<rect x="928.6" y="410.5999999999999" width="2" height="2" fill="#ffffff" />
<rect x="929.6" y="411.5999999999999" width="1" height="1" fill="#8fa0b4" />
<rect x="923.6" y="414.4999999999999" width="2" height="2" fill="#ffffff" />
<rect x="924.6" y="415.4999999999999" width="1" height="1" fill="#8fa0b4" />
<rect x="928.6" y="418.39999999999986" width="2" height="2" fill="#ffffff" />
<rect x="929.6" y="419.39999999999986" width="1" height="1" fill="#8fa0b4" />
<rect x="923.6" y="422.29999999999984" width="2" height="2" fill="#ffffff" />
<rect x="924.6" y="423.29999999999984" width="1" height="1" fill="#8fa0b4" />
<rect x="928.6" y="426.1999999999998" width="2" height="2" fill="#ffffff" />
<rect x="929.6" y="427.1999999999998" width="1" height="1" fill="#8fa0b4" />
<rect x="923.6" y="430.0999999999998" width="2" height="2" fill="#ffffff" />
<rect x="924.6" y="431.0999999999998" width="1" height="1" fill="#8fa0b4" />
<rect x="928.6" y="433.9999999999998" width="2" height="2" fill="#ffffff" />
<rect x="929.6" y="434.9999999999998" width="1" height="1" fill="#8fa0b4" />
<rect x="923.6" y="437.89999999999975" width="2" height="2" fill="#ffffff" />
<rect x="924.6" y="438.89999999999975" width="1" height="1" fill="#8fa0b4" />
<rect x="10.5" y="521.5" width="700" height="36" rx="9" fill="none" stroke="#000" stroke-width="1"/>
<text x="25.7" y="542" font-size="11" fill="#000" text-anchor="start" >Erfassung</text>
<rect x="84" y="530" width="118" height="18" fill="#eeeaee" />
<rect x="86" y="547" width="116" height="1" fill="#c6c6c6" />
<rect x="201" y="532" width="1" height="16" fill="#c6c6c6" />
<rect x="85" y="530" width="116" height="1" fill="#95a6b9" />
<rect x="85" y="531" width="116" height="1" fill="#587392" />
<rect x="84" y="531" width="1" height="16" fill="#95a6b9" />
<rect x="85" y="531" width="1" height="16" fill="#587392" />
<svg x="86" y="530" width="115" height="18" overflow="hidden">
<text x="0.5" y="14" font-size="11" fill="#000" text-anchor="start" textLength="84" lengthAdjust="spacingAndGlyphs" >04.06.2021 11:09</text>
</svg>
<rect x="203" y="530" width="132" height="18" fill="#eeeaee" />
<rect x="205" y="547" width="130" height="1" fill="#c6c6c6" />
<rect x="334" y="532" width="1" height="16" fill="#c6c6c6" />
<rect x="204" y="530" width="130" height="1" fill="#95a6b9" />
<rect x="204" y="531" width="130" height="1" fill="#587392" />
<rect x="203" y="531" width="1" height="16" fill="#95a6b9" />
<rect x="204" y="531" width="1" height="16" fill="#587392" />
<svg x="205" y="530" width="129" height="18" overflow="hidden">
<text x="0.5" y="14" font-size="10.6" fill="#000" text-anchor="start" textLength="37.5" lengthAdjust="spacingAndGlyphs" >REFLEX</text>
</svg>
<text x="380" y="542" font-size="11" fill="#000" text-anchor="start" textLength="47.8" lengthAdjust="spacingAndGlyphs" >Änderung</text>
<rect x="436" y="530" width="118" height="18" fill="#eeeaee" />
<rect x="438" y="547" width="116" height="1" fill="#c6c6c6" />
<rect x="553" y="532" width="1" height="16" fill="#c6c6c6" />
<rect x="437" y="530" width="116" height="1" fill="#95a6b9" />
<rect x="437" y="531" width="116" height="1" fill="#587392" />
<rect x="436" y="531" width="1" height="16" fill="#95a6b9" />
<rect x="437" y="531" width="1" height="16" fill="#587392" />
<rect x="555" y="530" width="132" height="18" fill="#eeeaee" />
<rect x="557" y="547" width="130" height="1" fill="#c6c6c6" />
<rect x="686" y="532" width="1" height="16" fill="#c6c6c6" />
<rect x="556" y="530" width="130" height="1" fill="#95a6b9" />
<rect x="556" y="531" width="130" height="1" fill="#587392" />
<rect x="555" y="531" width="1" height="16" fill="#95a6b9" />
<rect x="556" y="531" width="1" height="16" fill="#587392" />
</svg></body></html>
